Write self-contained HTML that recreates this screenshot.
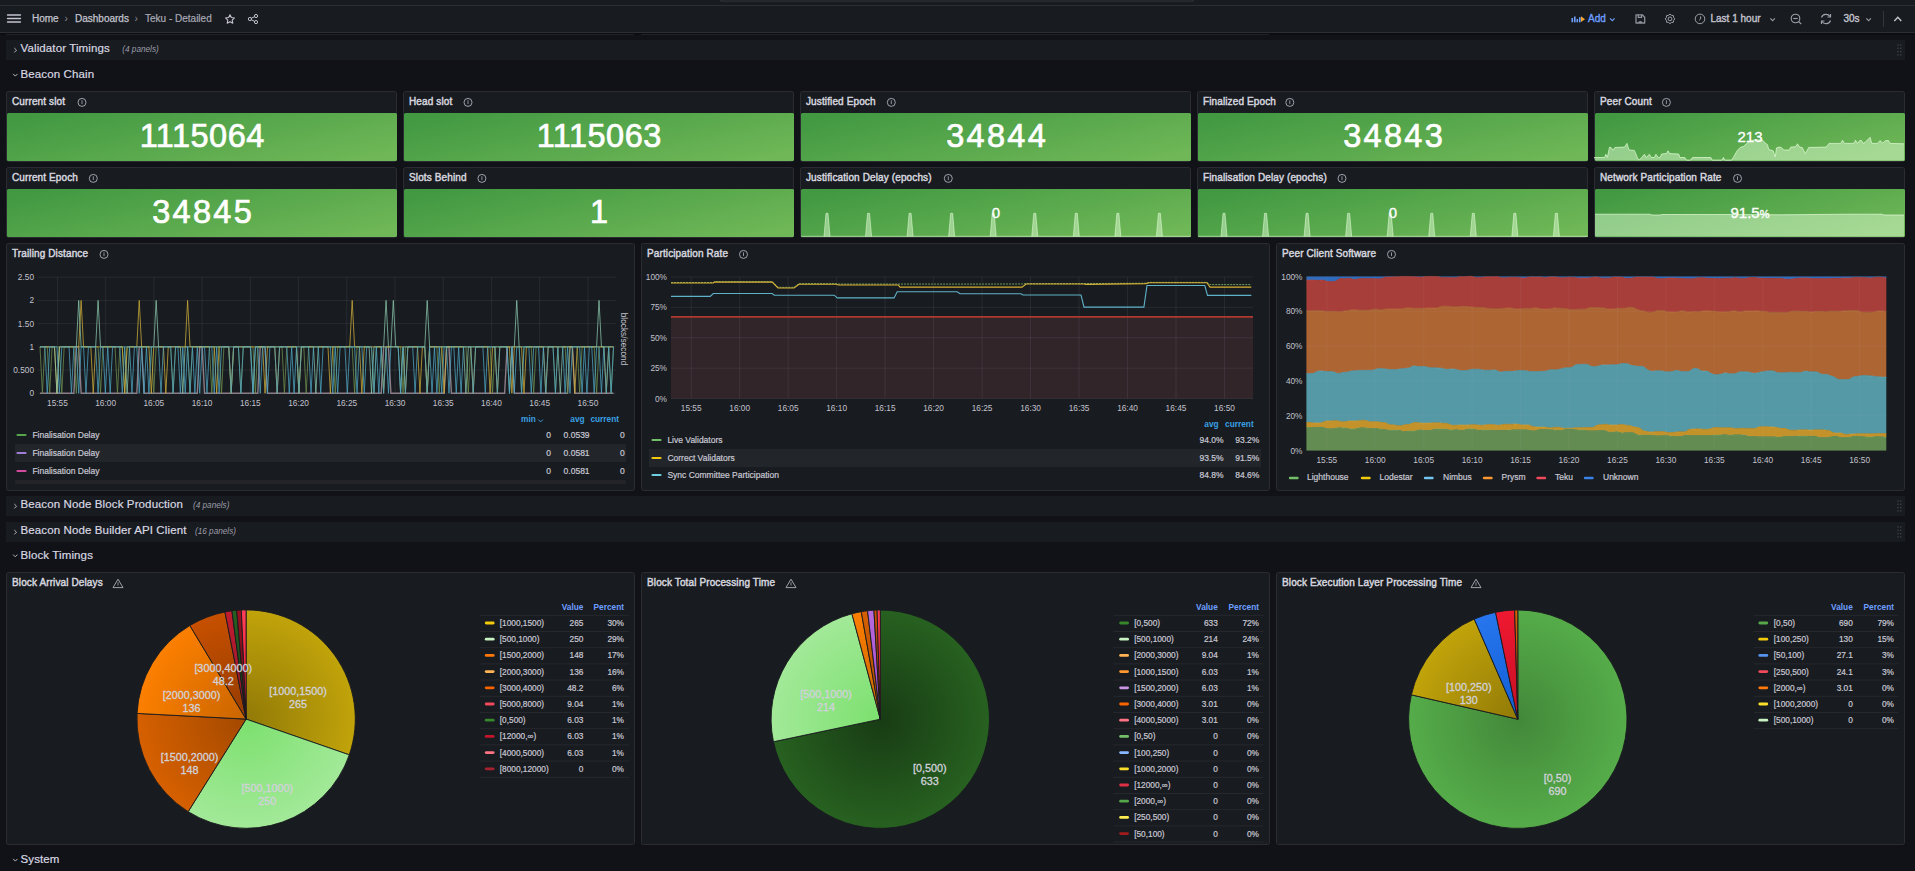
<!DOCTYPE html>
<html><head><meta charset="utf-8"><style>
html,body{margin:0;padding:0;background:#111217;width:1915px;height:871px;overflow:hidden}
svg{display:block;font-family:"Liberation Sans", sans-serif}
</style></head><body>
<svg width="1915" height="871" viewBox="0 0 1915 871">
<rect x="0" y="0" width="1915" height="871" fill="#111217"/>
<rect x="0" y="0" width="1915" height="6" fill="#181b1f" />
<rect x="721" y="-3" width="472" height="4" fill="#111217" stroke="#3a3b41" stroke-width="1"/>
<rect x="0" y="5" width="1915" height="1" fill="#2c2e34" />
<rect x="0" y="6" width="1915" height="26" fill="#181b1f" />
<rect x="0" y="32" width="1915" height="1" fill="#2c2e34" />
<rect x="0" y="33" width="1915" height="2" fill="#0c0d10" />
<rect x="6" y="34" width="628" height="1" fill="#1f2126" />
<rect x="641" y="34" width="628" height="1" fill="#1f2126" />
<line x1="7.5" y1="15" x2="20.5" y2="15" stroke="#c4c4cf" stroke-width="1.3" stroke-linecap="round"/>
<line x1="7.5" y1="18.5" x2="20.5" y2="18.5" stroke="#c4c4cf" stroke-width="1.3" stroke-linecap="round"/>
<line x1="7.5" y1="22" x2="20.5" y2="22" stroke="#c4c4cf" stroke-width="1.3" stroke-linecap="round"/>
<text x="32" y="22.3" font-size="10" fill="#c4c4d0" font-weight="400" text-anchor="start" stroke="#c4c4d0" stroke-width="0.25" >Home</text>
<text x="64.5" y="22" font-size="10" fill="#8e8e9a" font-weight="400" text-anchor="start" >›</text>
<text x="75" y="22.3" font-size="10" fill="#c4c4d0" font-weight="400" text-anchor="start" stroke="#c4c4d0" stroke-width="0.25" >Dashboards</text>
<text x="134.5" y="22" font-size="10" fill="#8e8e9a" font-weight="400" text-anchor="start" >›</text>
<text x="145" y="22.3" font-size="10" fill="#a9a9b6" font-weight="400" text-anchor="start" stroke="#a9a9b6" stroke-width="0.2" >Teku - Detailed</text>
<polygon points="230.00,14.70 231.35,17.54 234.47,17.95 232.19,20.11 232.76,23.20 230.00,21.70 227.24,23.20 227.81,20.11 225.53,17.95 228.65,17.54" fill="none" stroke="#c4c4cf" stroke-width="1.1" stroke-linejoin="round"/>
<g stroke="#c4c4cf" stroke-width="1.0" fill="none"><circle cx="249.9" cy="19" r="1.6"/><circle cx="256" cy="16" r="1.6"/><circle cx="256" cy="22.1" r="1.6"/><line x1="251.3" y1="18.2" x2="254.6" y2="16.7"/><line x1="251.3" y1="19.8" x2="254.6" y2="21.4"/></g>
<g fill="#6e9fff"><rect x="1571.5" y="18" width="1.6" height="4.3"/><rect x="1574" y="16.5" width="1.6" height="5.8"/><rect x="1576.5" y="19" width="1.6" height="3.3"/><rect x="1579" y="17.2" width="1.6" height="5.1"/></g>
<path d="M1581 16.3 L1585 19.2 L1581 22.1 Z" fill="#f5a630"/>
<text x="1588" y="22.3" font-size="10" fill="#6e9fff" font-weight="400" text-anchor="start" stroke="#6e9fff" stroke-width="0.35" >Add</text>
<path d="M1610 18.3 L1612.3 20.6 L1614.6 18.3" stroke="#6e9fff" stroke-width="1.1" fill="none"/>
<g stroke="#8f909b" stroke-width="1.3" fill="none" stroke-linejoin="round"><path d="M1636 14.8 h6.3 l2.4 2.4 v5.8 h-8.7 z"/><path d="M1638.3 14.8 v2.6 h3.3 v-2.6"/></g><path d="M1638.2 23 a2.1 2.1 0 0 1 4.2 0 z" fill="#8f909b"/>
<path d="M1673.60,20.39 Q1674.17,23.07 1671.49,22.50 Q1670.00,24.80 1668.51,22.50 Q1665.83,23.07 1666.40,20.39 Q1664.10,18.90 1666.40,17.41 Q1665.83,14.73 1668.51,15.30 Q1670.00,13.00 1671.49,15.30 Q1674.17,14.73 1673.60,17.41 Q1675.90,18.90 1673.60,20.39 Z" fill="none" stroke="#a0a0ab" stroke-width="1"/><circle cx="1670" cy="18.9" r="1.9" fill="none" stroke="#a0a0ab" stroke-width="1"/>
<g stroke="#a0a0ab" stroke-width="1.0" fill="none"><circle cx="1700" cy="18.9" r="4.8"/><path d="M1700.6 16.4 V19 L1699.2 20.2"/></g>
<text x="1710.5" y="22.3" font-size="10" fill="#c4c4d0" font-weight="400" text-anchor="start" stroke="#c4c4d0" stroke-width="0.35" >Last 1 hour</text>
<path d="M1770.3 18.3 L1772.6 20.6 L1774.9 18.3" stroke="#9a9aa6" stroke-width="1.1" fill="none"/>
<g stroke="#a0a0ab" stroke-width="1.1" fill="none"><circle cx="1795.5" cy="18.5" r="4.3"/><line x1="1793.3" y1="18.5" x2="1797.7" y2="18.5"/><line x1="1798.7" y1="21.7" x2="1801.2" y2="24"/></g>
<g stroke="#a0a0ab" stroke-width="1.2" fill="none"><path d="M1821.5 17.5 A4.8 4.8 0 0 1 1830 16.5"/><path d="M1830.5 20.5 A4.8 4.8 0 0 1 1822 21.5"/><path d="M1830.5 14 V17 H1827.5"/><path d="M1821.5 24 V21 H1824.5"/></g>
<text x="1843.5" y="22.3" font-size="10" fill="#c4c4d0" font-weight="400" text-anchor="start" stroke="#c4c4d0" stroke-width="0.35" >30s</text>
<path d="M1866.3 18.3 L1868.6 20.6 L1870.9 18.3" stroke="#9a9aa6" stroke-width="1.1" fill="none"/>
<rect x="1883" y="11" width="1" height="16" fill="#34363c" />
<path d="M1894.3 21 L1897.8 17.2 L1901.3 21" stroke="#c4c4cf" stroke-width="1.4" fill="none"/>
<rect x="6" y="40" width="1899" height="20" fill="#181b1f" />
<path d="M14.3 48.0 L16.5 50.2 L14.3 52.400000000000006" stroke="#b8b8c4" stroke-width="1" fill="none"/>
<text x="20.5" y="52.4" font-size="11.5" fill="#d8d8e2" font-weight="400" text-anchor="start" stroke="#d8d8e2" stroke-width="0.2" letter-spacing="0.12">Validator Timings</text>
<text x="122.3" y="52.3" font-size="8.2" fill="#9d9dab" font-weight="400" text-anchor="start" font-style="italic">(4 panels)</text>
<rect x="1897.3" y="44.3" width="1.4" height="1.4" fill="#3d3f45" /><rect x="1900.0" y="44.3" width="1.4" height="1.4" fill="#3d3f45" /><rect x="1897.3" y="47.599999999999994" width="1.4" height="1.4" fill="#3d3f45" /><rect x="1900.0" y="47.599999999999994" width="1.4" height="1.4" fill="#3d3f45" /><rect x="1897.3" y="50.9" width="1.4" height="1.4" fill="#3d3f45" /><rect x="1900.0" y="50.9" width="1.4" height="1.4" fill="#3d3f45" /><rect x="1897.3" y="54.199999999999996" width="1.4" height="1.4" fill="#3d3f45" /><rect x="1900.0" y="54.199999999999996" width="1.4" height="1.4" fill="#3d3f45" />
<path d="M13.100000000000001 73.9 L15.3 76.1 L17.5 73.9" stroke="#b8b8c4" stroke-width="1" fill="none"/>
<text x="20.5" y="78.3" font-size="11.5" fill="#d8d8e2" font-weight="400" text-anchor="start" stroke="#d8d8e2" stroke-width="0.2" letter-spacing="0.12">Beacon Chain</text>
<rect x="6" y="496" width="1899" height="20" fill="#181b1f" />
<path d="M14.3 504.0 L16.5 506.2 L14.3 508.4" stroke="#b8b8c4" stroke-width="1" fill="none"/>
<text x="20.5" y="508.4" font-size="11.5" fill="#d8d8e2" font-weight="400" text-anchor="start" stroke="#d8d8e2" stroke-width="0.2" letter-spacing="0.12">Beacon Node Block Production</text>
<text x="193" y="508.3" font-size="8.2" fill="#9d9dab" font-weight="400" text-anchor="start" font-style="italic">(4 panels)</text>
<rect x="1897.3" y="500.3" width="1.4" height="1.4" fill="#3d3f45" /><rect x="1900.0" y="500.3" width="1.4" height="1.4" fill="#3d3f45" /><rect x="1897.3" y="503.6" width="1.4" height="1.4" fill="#3d3f45" /><rect x="1900.0" y="503.6" width="1.4" height="1.4" fill="#3d3f45" /><rect x="1897.3" y="506.90000000000003" width="1.4" height="1.4" fill="#3d3f45" /><rect x="1900.0" y="506.90000000000003" width="1.4" height="1.4" fill="#3d3f45" /><rect x="1897.3" y="510.2" width="1.4" height="1.4" fill="#3d3f45" /><rect x="1900.0" y="510.2" width="1.4" height="1.4" fill="#3d3f45" />
<rect x="6" y="522" width="1899" height="20" fill="#181b1f" />
<path d="M14.3 530.0 L16.5 532.2 L14.3 534.4000000000001" stroke="#b8b8c4" stroke-width="1" fill="none"/>
<text x="20.5" y="534.4" font-size="11.5" fill="#d8d8e2" font-weight="400" text-anchor="start" stroke="#d8d8e2" stroke-width="0.2" letter-spacing="0.12">Beacon Node Builder API Client</text>
<text x="195" y="534.3" font-size="8.2" fill="#9d9dab" font-weight="400" text-anchor="start" font-style="italic">(16 panels)</text>
<rect x="1897.3" y="526.3" width="1.4" height="1.4" fill="#3d3f45" /><rect x="1900.0" y="526.3" width="1.4" height="1.4" fill="#3d3f45" /><rect x="1897.3" y="529.5999999999999" width="1.4" height="1.4" fill="#3d3f45" /><rect x="1900.0" y="529.5999999999999" width="1.4" height="1.4" fill="#3d3f45" /><rect x="1897.3" y="532.9" width="1.4" height="1.4" fill="#3d3f45" /><rect x="1900.0" y="532.9" width="1.4" height="1.4" fill="#3d3f45" /><rect x="1897.3" y="536.1999999999999" width="1.4" height="1.4" fill="#3d3f45" /><rect x="1900.0" y="536.1999999999999" width="1.4" height="1.4" fill="#3d3f45" />
<path d="M13.100000000000001 554.6 L15.3 556.8000000000001 L17.5 554.6" stroke="#b8b8c4" stroke-width="1" fill="none"/>
<text x="20.5" y="559" font-size="11.5" fill="#d8d8e2" font-weight="400" text-anchor="start" stroke="#d8d8e2" stroke-width="0.2" letter-spacing="0.12">Block Timings</text>
<path d="M13.100000000000001 858.9 L15.3 861.1 L17.5 858.9" stroke="#b8b8c4" stroke-width="1" fill="none"/>
<text x="20.5" y="863.3" font-size="11.5" fill="#d8d8e2" font-weight="400" text-anchor="start" stroke="#d8d8e2" stroke-width="0.2" letter-spacing="0.12">System</text>
<defs>
<linearGradient id="statg" gradientUnits="objectBoundingBox" x1="0" y1="0.2" x2="1" y2="0.8"><stop offset="0" stop-color="#429942"/><stop offset="1" stop-color="#6fb757"/></linearGradient>
</defs>
<rect x="6.5" y="91.5" width="390" height="70" rx="2" fill="#181b1f" stroke="#2a2c31" stroke-width="1"/>
<text x="12" y="105.3" font-size="10.0" fill="#d5d5df" font-weight="400" text-anchor="start" stroke="#d5d5df" stroke-width="0.45" letter-spacing="0.12">Current slot</text>
<g stroke="#a8a8b4" fill="none"><circle cx="82" cy="102.39999999999999" r="4.0" stroke-width="0.95"/><line x1="82" y1="100.3" x2="82" y2="104.1" stroke-width="0.85"/></g>
<rect x="7" y="113" width="390" height="48" rx="1.5" fill="url(#statg)"/>
<text x="202.25" y="147.3" font-size="32.5" fill="#ffffff" font-weight="400" text-anchor="middle" stroke="#ffffff" stroke-width="0.7" letter-spacing="0.5">1115064</text>
<rect x="403.5" y="91.5" width="390" height="70" rx="2" fill="#181b1f" stroke="#2a2c31" stroke-width="1"/>
<text x="409" y="105.3" font-size="10.0" fill="#d5d5df" font-weight="400" text-anchor="start" stroke="#d5d5df" stroke-width="0.45" letter-spacing="0.12">Head slot</text>
<g stroke="#a8a8b4" fill="none"><circle cx="468" cy="102.39999999999999" r="4.0" stroke-width="0.95"/><line x1="468" y1="100.3" x2="468" y2="104.1" stroke-width="0.85"/></g>
<rect x="404" y="113" width="390" height="48" rx="1.5" fill="url(#statg)"/>
<text x="599.25" y="147.3" font-size="32.5" fill="#ffffff" font-weight="400" text-anchor="middle" stroke="#ffffff" stroke-width="0.7" letter-spacing="0.5">1115063</text>
<rect x="800.5" y="91.5" width="390" height="70" rx="2" fill="#181b1f" stroke="#2a2c31" stroke-width="1"/>
<text x="806" y="105.3" font-size="10.0" fill="#d5d5df" font-weight="400" text-anchor="start" stroke="#d5d5df" stroke-width="0.45" letter-spacing="0.12">Justified Epoch</text>
<g stroke="#a8a8b4" fill="none"><circle cx="891.3" cy="102.39999999999999" r="4.0" stroke-width="0.95"/><line x1="891.3" y1="100.3" x2="891.3" y2="104.1" stroke-width="0.85"/></g>
<rect x="801" y="113" width="390" height="48" rx="1.5" fill="url(#statg)"/>
<text x="997.15" y="147.3" font-size="32.5" fill="#ffffff" font-weight="400" text-anchor="middle" stroke="#ffffff" stroke-width="0.7" letter-spacing="2.3">34844</text>
<rect x="1197.5" y="91.5" width="390" height="70" rx="2" fill="#181b1f" stroke="#2a2c31" stroke-width="1"/>
<text x="1203" y="105.3" font-size="10.0" fill="#d5d5df" font-weight="400" text-anchor="start" stroke="#d5d5df" stroke-width="0.45" letter-spacing="0.12">Finalized Epoch</text>
<g stroke="#a8a8b4" fill="none"><circle cx="1289.8" cy="102.39999999999999" r="4.0" stroke-width="0.95"/><line x1="1289.8" y1="100.3" x2="1289.8" y2="104.1" stroke-width="0.85"/></g>
<rect x="1198" y="113" width="390" height="48" rx="1.5" fill="url(#statg)"/>
<text x="1394.15" y="147.3" font-size="32.5" fill="#ffffff" font-weight="400" text-anchor="middle" stroke="#ffffff" stroke-width="0.7" letter-spacing="2.3">34843</text>
<rect x="1594.5" y="91.5" width="310" height="70" rx="2" fill="#181b1f" stroke="#2a2c31" stroke-width="1"/>
<text x="1600" y="105.3" font-size="10.0" fill="#d5d5df" font-weight="400" text-anchor="start" stroke="#d5d5df" stroke-width="0.45" letter-spacing="0.12">Peer Count</text>
<g stroke="#a8a8b4" fill="none"><circle cx="1666.4" cy="102.39999999999999" r="4.0" stroke-width="0.95"/><line x1="1666.4" y1="100.3" x2="1666.4" y2="104.1" stroke-width="0.85"/></g>
<rect x="1595" y="113" width="310" height="48" rx="1.5" fill="url(#statg)"/>
<polygon points="1594.00,157.50 1604.60,157.50 1605.80,154.30 1607.40,157.30 1609.50,147.30 1611.10,147.50 1613.10,150.40 1614.80,147.50 1624.50,147.10 1627.00,143.40 1629.00,150.00 1634.30,150.40 1637.60,158.10 1639.20,160.10 1641.60,157.50 1644.50,154.30 1646.10,157.50 1649.40,154.30 1651.40,157.50 1654.30,157.50 1655.90,154.30 1658.30,157.50 1660.00,157.50 1661.60,154.00 1666.50,153.60 1668.00,150.80 1669.70,153.60 1678.70,154.00 1679.90,157.50 1684.80,157.50 1686.40,160.10 1690.50,160.10 1692.50,157.50 1710.90,157.50 1712.10,160.10 1721.90,160.10 1723.50,157.50 1724.70,160.10 1731.60,160.10 1733.30,157.50 1737.30,150.40 1740.60,147.30 1743.80,146.30 1746.30,143.80 1749.60,141.40 1752.90,140.20 1759.70,139.90 1763.10,140.60 1765.10,143.00 1767.50,144.70 1768.80,149.50 1773.20,150.80 1775.30,156.90 1776.50,147.90 1779.00,147.10 1781.40,147.50 1783.80,150.00 1789.10,150.00 1790.80,147.10 1795.60,146.70 1797.50,143.80 1799.70,147.10 1802.20,147.50 1805.40,153.60 1808.70,147.50 1826.20,147.10 1829.00,143.40 1840.80,143.40 1842.50,140.20 1844.50,143.40 1853.90,143.40 1855.50,140.20 1857.50,143.40 1859.60,140.60 1861.60,140.60 1863.20,143.40 1865.30,142.20 1870.10,137.30 1871.80,143.40 1877.50,143.40 1879.90,140.60 1882.80,143.00 1885.60,140.60 1888.50,140.60 1890.10,143.40 1904.00,143.80 1904,160.5 1595,160.5" fill="rgba(225,255,215,0.48)"/><polyline points="1594.00,157.50 1604.60,157.50 1605.80,154.30 1607.40,157.30 1609.50,147.30 1611.10,147.50 1613.10,150.40 1614.80,147.50 1624.50,147.10 1627.00,143.40 1629.00,150.00 1634.30,150.40 1637.60,158.10 1639.20,160.10 1641.60,157.50 1644.50,154.30 1646.10,157.50 1649.40,154.30 1651.40,157.50 1654.30,157.50 1655.90,154.30 1658.30,157.50 1660.00,157.50 1661.60,154.00 1666.50,153.60 1668.00,150.80 1669.70,153.60 1678.70,154.00 1679.90,157.50 1684.80,157.50 1686.40,160.10 1690.50,160.10 1692.50,157.50 1710.90,157.50 1712.10,160.10 1721.90,160.10 1723.50,157.50 1724.70,160.10 1731.60,160.10 1733.30,157.50 1737.30,150.40 1740.60,147.30 1743.80,146.30 1746.30,143.80 1749.60,141.40 1752.90,140.20 1759.70,139.90 1763.10,140.60 1765.10,143.00 1767.50,144.70 1768.80,149.50 1773.20,150.80 1775.30,156.90 1776.50,147.90 1779.00,147.10 1781.40,147.50 1783.80,150.00 1789.10,150.00 1790.80,147.10 1795.60,146.70 1797.50,143.80 1799.70,147.10 1802.20,147.50 1805.40,153.60 1808.70,147.50 1826.20,147.10 1829.00,143.40 1840.80,143.40 1842.50,140.20 1844.50,143.40 1853.90,143.40 1855.50,140.20 1857.50,143.40 1859.60,140.60 1861.60,140.60 1863.20,143.40 1865.30,142.20 1870.10,137.30 1871.80,143.40 1877.50,143.40 1879.90,140.60 1882.80,143.00 1885.60,140.60 1888.50,140.60 1890.10,143.40 1904.00,143.80" fill="none" stroke="rgba(235,255,225,0.65)" stroke-width="1"/>
<text x="1750.0" y="142.0" font-size="15" fill="#ffffff" font-weight="400" text-anchor="middle" stroke="#ffffff" stroke-width="0.35" >213</text>
<rect x="6.5" y="167.5" width="390" height="70" rx="2" fill="#181b1f" stroke="#2a2c31" stroke-width="1"/>
<text x="12" y="181.3" font-size="10.0" fill="#d5d5df" font-weight="400" text-anchor="start" stroke="#d5d5df" stroke-width="0.45" letter-spacing="0.12">Current Epoch</text>
<g stroke="#a8a8b4" fill="none"><circle cx="93.3" cy="178.4" r="4.0" stroke-width="0.95"/><line x1="93.3" y1="176.3" x2="93.3" y2="180.1" stroke-width="0.85"/></g>
<rect x="7" y="189" width="390" height="48" rx="1.5" fill="url(#statg)"/>
<text x="203.15" y="223.3" font-size="32.5" fill="#ffffff" font-weight="400" text-anchor="middle" stroke="#ffffff" stroke-width="0.7" letter-spacing="2.3">34845</text>
<rect x="403.5" y="167.5" width="390" height="70" rx="2" fill="#181b1f" stroke="#2a2c31" stroke-width="1"/>
<text x="409" y="181.3" font-size="10.0" fill="#d5d5df" font-weight="400" text-anchor="start" stroke="#d5d5df" stroke-width="0.45" letter-spacing="0.12">Slots Behind</text>
<g stroke="#a8a8b4" fill="none"><circle cx="481.9" cy="178.4" r="4.0" stroke-width="0.95"/><line x1="481.9" y1="176.3" x2="481.9" y2="180.1" stroke-width="0.85"/></g>
<rect x="404" y="189" width="390" height="48" rx="1.5" fill="url(#statg)"/>
<text x="600.15" y="223.3" font-size="32.5" fill="#ffffff" font-weight="400" text-anchor="middle" stroke="#ffffff" stroke-width="0.7" letter-spacing="2.3">1</text>
<rect x="800.5" y="167.5" width="390" height="70" rx="2" fill="#181b1f" stroke="#2a2c31" stroke-width="1"/>
<text x="806" y="181.3" font-size="10.0" fill="#d5d5df" font-weight="400" text-anchor="start" stroke="#d5d5df" stroke-width="0.45" letter-spacing="0.12">Justification Delay (epochs)</text>
<g stroke="#a8a8b4" fill="none"><circle cx="948.3" cy="178.4" r="4.0" stroke-width="0.95"/><line x1="948.3" y1="176.3" x2="948.3" y2="180.1" stroke-width="0.85"/></g>
<rect x="801" y="189" width="390" height="48" rx="1.5" fill="url(#statg)"/>
<polygon points="824.0,236.5 826.0,213.3 828.0,213.3 830.0,236.5" fill="rgba(225,255,215,0.48)"/><polyline points="824.0,236.5 826.0,213.3 828.0,213.3 830.0,236.5" fill="none" stroke="rgba(235,255,225,0.65)" stroke-width="0.8"/><polygon points="865.55,236.5 867.55,213.3 869.55,213.3 871.55,236.5" fill="rgba(225,255,215,0.48)"/><polyline points="865.55,236.5 867.55,213.3 869.55,213.3 871.55,236.5" fill="none" stroke="rgba(235,255,225,0.65)" stroke-width="0.8"/><polygon points="907.1,236.5 909.1,213.3 911.1,213.3 913.1,236.5" fill="rgba(225,255,215,0.48)"/><polyline points="907.1,236.5 909.1,213.3 911.1,213.3 913.1,236.5" fill="none" stroke="rgba(235,255,225,0.65)" stroke-width="0.8"/><polygon points="948.65,236.5 950.65,213.3 952.65,213.3 954.65,236.5" fill="rgba(225,255,215,0.48)"/><polyline points="948.65,236.5 950.65,213.3 952.65,213.3 954.65,236.5" fill="none" stroke="rgba(235,255,225,0.65)" stroke-width="0.8"/><polygon points="990.2,236.5 992.2,213.3 994.2,213.3 996.2,236.5" fill="rgba(225,255,215,0.48)"/><polyline points="990.2,236.5 992.2,213.3 994.2,213.3 996.2,236.5" fill="none" stroke="rgba(235,255,225,0.65)" stroke-width="0.8"/><polygon points="1031.75,236.5 1033.75,213.3 1035.75,213.3 1037.75,236.5" fill="rgba(225,255,215,0.48)"/><polyline points="1031.75,236.5 1033.75,213.3 1035.75,213.3 1037.75,236.5" fill="none" stroke="rgba(235,255,225,0.65)" stroke-width="0.8"/><polygon points="1073.3,236.5 1075.3,213.3 1077.3,213.3 1079.3,236.5" fill="rgba(225,255,215,0.48)"/><polyline points="1073.3,236.5 1075.3,213.3 1077.3,213.3 1079.3,236.5" fill="none" stroke="rgba(235,255,225,0.65)" stroke-width="0.8"/><polygon points="1114.85,236.5 1116.85,213.3 1118.85,213.3 1120.85,236.5" fill="rgba(225,255,215,0.48)"/><polyline points="1114.85,236.5 1116.85,213.3 1118.85,213.3 1120.85,236.5" fill="none" stroke="rgba(235,255,225,0.65)" stroke-width="0.8"/><polygon points="1156.4,236.5 1158.4,213.3 1160.4,213.3 1162.4,236.5" fill="rgba(225,255,215,0.48)"/><polyline points="1156.4,236.5 1158.4,213.3 1160.4,213.3 1162.4,236.5" fill="none" stroke="rgba(235,255,225,0.65)" stroke-width="0.8"/><line x1="801" y1="236.3" x2="1191" y2="236.3" stroke="rgba(235,255,225,0.65)" stroke-width="0.8"/>
<text x="996.0" y="218.0" font-size="15" fill="#ffffff" font-weight="400" text-anchor="middle" stroke="#ffffff" stroke-width="0.35" >0</text>
<rect x="1197.5" y="167.5" width="390" height="70" rx="2" fill="#181b1f" stroke="#2a2c31" stroke-width="1"/>
<text x="1203" y="181.3" font-size="10.0" fill="#d5d5df" font-weight="400" text-anchor="start" stroke="#d5d5df" stroke-width="0.45" letter-spacing="0.12">Finalisation Delay (epochs)</text>
<g stroke="#a8a8b4" fill="none"><circle cx="1342" cy="178.4" r="4.0" stroke-width="0.95"/><line x1="1342" y1="176.3" x2="1342" y2="180.1" stroke-width="0.85"/></g>
<rect x="1198" y="189" width="390" height="48" rx="1.5" fill="url(#statg)"/>
<polygon points="1221.0,236.5 1223.0,213.3 1225.0,213.3 1227.0,236.5" fill="rgba(225,255,215,0.48)"/><polyline points="1221.0,236.5 1223.0,213.3 1225.0,213.3 1227.0,236.5" fill="none" stroke="rgba(235,255,225,0.65)" stroke-width="0.8"/><polygon points="1262.55,236.5 1264.55,213.3 1266.55,213.3 1268.55,236.5" fill="rgba(225,255,215,0.48)"/><polyline points="1262.55,236.5 1264.55,213.3 1266.55,213.3 1268.55,236.5" fill="none" stroke="rgba(235,255,225,0.65)" stroke-width="0.8"/><polygon points="1304.1,236.5 1306.1,213.3 1308.1,213.3 1310.1,236.5" fill="rgba(225,255,215,0.48)"/><polyline points="1304.1,236.5 1306.1,213.3 1308.1,213.3 1310.1,236.5" fill="none" stroke="rgba(235,255,225,0.65)" stroke-width="0.8"/><polygon points="1345.65,236.5 1347.65,213.3 1349.65,213.3 1351.65,236.5" fill="rgba(225,255,215,0.48)"/><polyline points="1345.65,236.5 1347.65,213.3 1349.65,213.3 1351.65,236.5" fill="none" stroke="rgba(235,255,225,0.65)" stroke-width="0.8"/><polygon points="1387.2,236.5 1389.2,213.3 1391.2,213.3 1393.2,236.5" fill="rgba(225,255,215,0.48)"/><polyline points="1387.2,236.5 1389.2,213.3 1391.2,213.3 1393.2,236.5" fill="none" stroke="rgba(235,255,225,0.65)" stroke-width="0.8"/><polygon points="1428.75,236.5 1430.75,213.3 1432.75,213.3 1434.75,236.5" fill="rgba(225,255,215,0.48)"/><polyline points="1428.75,236.5 1430.75,213.3 1432.75,213.3 1434.75,236.5" fill="none" stroke="rgba(235,255,225,0.65)" stroke-width="0.8"/><polygon points="1470.3,236.5 1472.3,213.3 1474.3,213.3 1476.3,236.5" fill="rgba(225,255,215,0.48)"/><polyline points="1470.3,236.5 1472.3,213.3 1474.3,213.3 1476.3,236.5" fill="none" stroke="rgba(235,255,225,0.65)" stroke-width="0.8"/><polygon points="1511.85,236.5 1513.85,213.3 1515.85,213.3 1517.85,236.5" fill="rgba(225,255,215,0.48)"/><polyline points="1511.85,236.5 1513.85,213.3 1515.85,213.3 1517.85,236.5" fill="none" stroke="rgba(235,255,225,0.65)" stroke-width="0.8"/><polygon points="1553.4,236.5 1555.4,213.3 1557.4,213.3 1559.4,236.5" fill="rgba(225,255,215,0.48)"/><polyline points="1553.4,236.5 1555.4,213.3 1557.4,213.3 1559.4,236.5" fill="none" stroke="rgba(235,255,225,0.65)" stroke-width="0.8"/><line x1="1198" y1="236.3" x2="1588" y2="236.3" stroke="rgba(235,255,225,0.65)" stroke-width="0.8"/>
<text x="1393.0" y="218.0" font-size="15" fill="#ffffff" font-weight="400" text-anchor="middle" stroke="#ffffff" stroke-width="0.35" >0</text>
<rect x="1594.5" y="167.5" width="310" height="70" rx="2" fill="#181b1f" stroke="#2a2c31" stroke-width="1"/>
<text x="1600" y="181.3" font-size="10.0" fill="#d5d5df" font-weight="400" text-anchor="start" stroke="#d5d5df" stroke-width="0.45" letter-spacing="0.12">Network Participation Rate</text>
<g stroke="#a8a8b4" fill="none"><circle cx="1737.5" cy="178.4" r="4.0" stroke-width="0.95"/><line x1="1737.5" y1="176.3" x2="1737.5" y2="180.1" stroke-width="0.85"/></g>
<rect x="1595" y="189" width="310" height="48" rx="1.5" fill="url(#statg)"/>
<polygon points="1595.00,214.20 1650.00,214.20 1652.00,215.00 1660.00,215.00 1662.00,214.50 1730.00,214.50 1780.00,214.80 1850.00,214.20 1882.00,214.20 1884.00,215.00 1904.00,215.00 1904,236.5 1595,236.5" fill="rgba(225,255,215,0.48)"/><polyline points="1595.00,214.20 1650.00,214.20 1652.00,215.00 1660.00,215.00 1662.00,214.50 1730.00,214.50 1780.00,214.80 1850.00,214.20 1882.00,214.20 1884.00,215.00 1904.00,215.00" fill="none" stroke="rgba(235,255,225,0.65)" stroke-width="1"/>
<text x="1750.0" y="218.0" font-size="15" fill="#ffffff" font-weight="400" text-anchor="middle" stroke="#ffffff" stroke-width="0.35" >91.5<tspan font-size="11">%</tspan></text>
<rect x="6.5" y="243.5" width="628" height="247" rx="2" fill="#181b1f" stroke="#2a2c31" stroke-width="1"/>
<text x="12" y="257.3" font-size="10.0" fill="#d5d5df" font-weight="400" text-anchor="start" stroke="#d5d5df" stroke-width="0.45" letter-spacing="0.12">Trailing Distance</text>
<g stroke="#a8a8b4" fill="none"><circle cx="104" cy="254.4" r="4.0" stroke-width="0.95"/><line x1="104" y1="252.3" x2="104" y2="256.1" stroke-width="0.85"/></g>
<line x1="38" y1="277.20000000000005" x2="616" y2="277.20000000000005" stroke="rgba(204,204,220,0.09)" stroke-width="1"/>
<text x="34" y="280.20000000000005" font-size="8.3" fill="#c2c2ce" font-weight="400" text-anchor="end" >2.50</text>
<line x1="38" y1="300.42" x2="616" y2="300.42" stroke="rgba(204,204,220,0.09)" stroke-width="1"/>
<text x="34" y="303.42" font-size="8.3" fill="#c2c2ce" font-weight="400" text-anchor="end" >2</text>
<line x1="38" y1="323.64" x2="616" y2="323.64" stroke="rgba(204,204,220,0.09)" stroke-width="1"/>
<text x="34" y="326.64" font-size="8.3" fill="#c2c2ce" font-weight="400" text-anchor="end" >1.50</text>
<line x1="38" y1="346.86" x2="616" y2="346.86" stroke="rgba(204,204,220,0.09)" stroke-width="1"/>
<text x="34" y="349.86" font-size="8.3" fill="#c2c2ce" font-weight="400" text-anchor="end" >1</text>
<line x1="38" y1="370.08000000000004" x2="616" y2="370.08000000000004" stroke="rgba(204,204,220,0.09)" stroke-width="1"/>
<text x="34" y="373.08000000000004" font-size="8.3" fill="#c2c2ce" font-weight="400" text-anchor="end" >0.500</text>
<line x1="38" y1="393.3" x2="616" y2="393.3" stroke="rgba(204,204,220,0.09)" stroke-width="1"/>
<text x="34" y="396.3" font-size="8.3" fill="#c2c2ce" font-weight="400" text-anchor="end" >0</text>
<line x1="57.4" y1="277.20000000000005" x2="57.4" y2="393.3" stroke="rgba(204,204,220,0.09)" stroke-width="1"/>
<text x="57.4" y="406.3" font-size="8.3" fill="#c2c2ce" font-weight="400" text-anchor="middle" >15:55</text>
<line x1="105.63" y1="277.20000000000005" x2="105.63" y2="393.3" stroke="rgba(204,204,220,0.09)" stroke-width="1"/>
<text x="105.63" y="406.3" font-size="8.3" fill="#c2c2ce" font-weight="400" text-anchor="middle" >16:00</text>
<line x1="153.85999999999999" y1="277.20000000000005" x2="153.85999999999999" y2="393.3" stroke="rgba(204,204,220,0.09)" stroke-width="1"/>
<text x="153.85999999999999" y="406.3" font-size="8.3" fill="#c2c2ce" font-weight="400" text-anchor="middle" >16:05</text>
<line x1="202.09" y1="277.20000000000005" x2="202.09" y2="393.3" stroke="rgba(204,204,220,0.09)" stroke-width="1"/>
<text x="202.09" y="406.3" font-size="8.3" fill="#c2c2ce" font-weight="400" text-anchor="middle" >16:10</text>
<line x1="250.32" y1="277.20000000000005" x2="250.32" y2="393.3" stroke="rgba(204,204,220,0.09)" stroke-width="1"/>
<text x="250.32" y="406.3" font-size="8.3" fill="#c2c2ce" font-weight="400" text-anchor="middle" >16:15</text>
<line x1="298.54999999999995" y1="277.20000000000005" x2="298.54999999999995" y2="393.3" stroke="rgba(204,204,220,0.09)" stroke-width="1"/>
<text x="298.54999999999995" y="406.3" font-size="8.3" fill="#c2c2ce" font-weight="400" text-anchor="middle" >16:20</text>
<line x1="346.78" y1="277.20000000000005" x2="346.78" y2="393.3" stroke="rgba(204,204,220,0.09)" stroke-width="1"/>
<text x="346.78" y="406.3" font-size="8.3" fill="#c2c2ce" font-weight="400" text-anchor="middle" >16:25</text>
<line x1="395.00999999999993" y1="277.20000000000005" x2="395.00999999999993" y2="393.3" stroke="rgba(204,204,220,0.09)" stroke-width="1"/>
<text x="395.00999999999993" y="406.3" font-size="8.3" fill="#c2c2ce" font-weight="400" text-anchor="middle" >16:30</text>
<line x1="443.23999999999995" y1="277.20000000000005" x2="443.23999999999995" y2="393.3" stroke="rgba(204,204,220,0.09)" stroke-width="1"/>
<text x="443.23999999999995" y="406.3" font-size="8.3" fill="#c2c2ce" font-weight="400" text-anchor="middle" >16:35</text>
<line x1="491.46999999999997" y1="277.20000000000005" x2="491.46999999999997" y2="393.3" stroke="rgba(204,204,220,0.09)" stroke-width="1"/>
<text x="491.46999999999997" y="406.3" font-size="8.3" fill="#c2c2ce" font-weight="400" text-anchor="middle" >16:40</text>
<line x1="539.6999999999999" y1="277.20000000000005" x2="539.6999999999999" y2="393.3" stroke="rgba(204,204,220,0.09)" stroke-width="1"/>
<text x="539.6999999999999" y="406.3" font-size="8.3" fill="#c2c2ce" font-weight="400" text-anchor="middle" >16:45</text>
<line x1="587.93" y1="277.20000000000005" x2="587.93" y2="393.3" stroke="rgba(204,204,220,0.09)" stroke-width="1"/>
<text x="587.93" y="406.3" font-size="8.3" fill="#c2c2ce" font-weight="400" text-anchor="middle" >16:50</text>
<text transform="translate(620.5,339) rotate(90)" font-size="8.3" fill="#c2c2ce" text-anchor="middle">blocks/second</text>
<g fill="none" stroke-width="1" stroke-linejoin="miter">
<polyline points="40.00,393.30 42.42,393.30 44.84,393.30 47.26,393.30 49.68,393.30 52.10,393.30 54.52,393.30 56.94,393.30 59.36,393.30 61.78,393.30 64.20,393.30 66.62,393.30 69.04,393.30 71.46,393.30 73.88,393.30 76.30,346.86 78.72,346.86 81.14,393.30 83.56,393.30 85.98,393.30 88.40,393.30 90.82,393.30 93.24,393.30 95.66,393.30 98.08,393.30 100.50,393.30 102.92,393.30 105.34,393.30 107.76,393.30 110.18,393.30 112.60,393.30 115.02,393.30 117.44,393.30 119.86,393.30 122.28,393.30 124.70,393.30 127.12,393.30 129.54,393.30 131.96,393.30 134.38,393.30 136.80,393.30 139.22,346.86 141.64,346.86 144.06,393.30 146.48,393.30 148.90,393.30 151.32,393.30 153.74,393.30 156.16,393.30 158.58,393.30 161.00,393.30 163.42,393.30 165.84,393.30 168.26,393.30 170.68,393.30 173.10,393.30 175.52,393.30 177.94,393.30 180.36,393.30 182.78,393.30 185.20,393.30 187.62,393.30 190.04,393.30 192.46,393.30 194.88,393.30 197.30,393.30 199.72,346.86 202.14,346.86 204.56,393.30 206.98,393.30 209.40,393.30 211.82,393.30 214.24,393.30 216.66,393.30 219.08,393.30 221.50,393.30 223.92,393.30 226.34,393.30 228.76,393.30 231.18,393.30 233.60,393.30 236.02,393.30 238.44,393.30 240.86,393.30 243.28,393.30 245.70,393.30 248.12,393.30 250.54,393.30 252.96,393.30 255.38,393.30 257.80,393.30 260.22,346.86 262.64,346.86 265.06,346.86 267.48,393.30 269.90,393.30 272.32,393.30 274.74,393.30 277.16,393.30 279.58,393.30 282.00,393.30 284.42,393.30 286.84,393.30 289.26,393.30 291.68,393.30 294.10,393.30 296.52,393.30 298.94,393.30 301.36,393.30 303.78,393.30 306.20,393.30 308.62,393.30 311.04,393.30 313.46,393.30 315.88,393.30 318.30,393.30 320.72,393.30 323.14,393.30 325.56,393.30 327.98,393.30 330.40,393.30 332.82,393.30 335.24,393.30 337.66,393.30 340.08,393.30 342.50,393.30 344.92,393.30 347.34,393.30 349.76,393.30 352.18,393.30 354.60,393.30 357.02,393.30 359.44,393.30 361.86,393.30 364.28,393.30 366.70,393.30 369.12,393.30 371.54,393.30 373.96,393.30 376.38,393.30 378.80,393.30 381.22,393.30 383.64,346.86 386.06,346.86 388.48,346.86 390.90,393.30 393.32,393.30 395.74,393.30 398.16,393.30 400.58,393.30 403.00,393.30 405.42,393.30 407.84,393.30 410.26,393.30 412.68,393.30 415.10,393.30 417.52,393.30 419.94,393.30 422.36,393.30 424.78,393.30 427.20,393.30 429.62,393.30 432.04,393.30 434.46,393.30 436.88,393.30 439.30,393.30 441.72,393.30 444.14,393.30 446.56,346.86 448.98,346.86 451.40,393.30 453.82,393.30 456.24,393.30 458.66,393.30 461.08,393.30 463.50,393.30 465.92,393.30 468.34,393.30 470.76,393.30 473.18,393.30 475.60,393.30 478.02,393.30 480.44,393.30 482.86,393.30 485.28,393.30 487.70,393.30 490.12,393.30 492.54,393.30 494.96,393.30 497.38,393.30 499.80,393.30 502.22,393.30 504.64,393.30 507.06,346.86 509.48,346.86 511.90,346.86 514.32,393.30 516.74,393.30 519.16,393.30 521.58,393.30 524.00,393.30 526.42,393.30 528.84,393.30 531.26,393.30 533.68,393.30 536.10,393.30 538.52,393.30 540.94,393.30 543.36,393.30 545.78,393.30 548.20,393.30 550.62,393.30 553.04,393.30 555.46,393.30 557.88,393.30 560.30,393.30 562.72,393.30 565.14,393.30 567.56,393.30 569.98,346.86 572.40,346.86 574.82,393.30 577.24,393.30 579.66,393.30 582.08,393.30 584.50,393.30 586.92,393.30 589.34,393.30 591.76,393.30 594.18,393.30 596.60,393.30 599.02,393.30 601.44,393.30 603.86,393.30 606.28,393.30 608.70,393.30 611.12,393.30 613.54,393.30" stroke="#8b7d88" stroke-width="1.4"/>
<polyline points="40.00,346.86 42.42,393.30 44.84,346.86 47.26,346.86 49.68,393.30 52.10,346.86 54.52,346.86 56.94,346.86 59.36,346.86 61.78,393.30 64.20,346.86 66.62,346.86 69.04,346.86 71.46,346.86 73.88,346.86 76.30,393.30 78.72,346.86 81.14,346.86 83.56,346.86 85.98,346.86 88.40,346.86 90.82,346.86 93.24,346.86 95.66,346.86 98.08,346.86 100.50,393.30 102.92,346.86 105.34,346.86 107.76,346.86 110.18,346.86 112.60,346.86 115.02,346.86 117.44,393.30 119.86,346.86 122.28,346.86 124.70,393.30 127.12,346.86 129.54,346.86 131.96,346.86 134.38,346.86 136.80,346.86 139.22,346.86 141.64,346.86 144.06,346.86 146.48,346.86 148.90,346.86 151.32,346.86 153.74,393.30 156.16,346.86 158.58,346.86 161.00,346.86 163.42,346.86 165.84,346.86 168.26,346.86 170.68,346.86 173.10,393.30 175.52,346.86 177.94,346.86 180.36,346.86 182.78,346.86 185.20,346.86 187.62,346.86 190.04,393.30 192.46,346.86 194.88,346.86 197.30,346.86 199.72,346.86 202.14,346.86 204.56,346.86 206.98,346.86 209.40,346.86 211.82,393.30 214.24,346.86 216.66,346.86 219.08,346.86 221.50,393.30 223.92,346.86 226.34,346.86 228.76,346.86 231.18,393.30 233.60,346.86 236.02,346.86 238.44,346.86 240.86,393.30 243.28,346.86 245.70,346.86 248.12,346.86 250.54,346.86 252.96,346.86 255.38,393.30 257.80,346.86 260.22,346.86 262.64,346.86 265.06,346.86 267.48,346.86 269.90,346.86 272.32,346.86 274.74,346.86 277.16,346.86 279.58,346.86 282.00,346.86 284.42,393.30 286.84,346.86 289.26,346.86 291.68,346.86 294.10,346.86 296.52,346.86 298.94,393.30 301.36,346.86 303.78,346.86 306.20,393.30 308.62,346.86 311.04,346.86 313.46,346.86 315.88,346.86 318.30,346.86 320.72,346.86 323.14,346.86 325.56,346.86 327.98,346.86 330.40,346.86 332.82,346.86 335.24,393.30 337.66,346.86 340.08,346.86 342.50,346.86 344.92,346.86 347.34,346.86 349.76,346.86 352.18,346.86 354.60,393.30 357.02,346.86 359.44,346.86 361.86,346.86 364.28,346.86 366.70,346.86 369.12,346.86 371.54,346.86 373.96,393.30 376.38,346.86 378.80,346.86 381.22,346.86 383.64,346.86 386.06,346.86 388.48,346.86 390.90,346.86 393.32,346.86 395.74,346.86 398.16,346.86 400.58,346.86 403.00,393.30 405.42,346.86 407.84,346.86 410.26,346.86 412.68,346.86 415.10,346.86 417.52,346.86 419.94,346.86 422.36,346.86 424.78,346.86 427.20,393.30 429.62,346.86 432.04,346.86 434.46,346.86 436.88,346.86 439.30,393.30 441.72,346.86 444.14,346.86 446.56,346.86 448.98,346.86 451.40,346.86 453.82,346.86 456.24,346.86 458.66,346.86 461.08,346.86 463.50,346.86 465.92,346.86 468.34,393.30 470.76,346.86 473.18,346.86 475.60,346.86 478.02,346.86 480.44,346.86 482.86,346.86 485.28,346.86 487.70,346.86 490.12,346.86 492.54,393.30 494.96,346.86 497.38,346.86 499.80,346.86 502.22,346.86 504.64,346.86 507.06,346.86 509.48,346.86 511.90,346.86 514.32,346.86 516.74,346.86 519.16,346.86 521.58,393.30 524.00,346.86 526.42,346.86 528.84,346.86 531.26,346.86 533.68,393.30 536.10,346.86 538.52,346.86 540.94,346.86 543.36,346.86 545.78,346.86 548.20,346.86 550.62,346.86 553.04,346.86 555.46,393.30 557.88,346.86 560.30,346.86 562.72,346.86 565.14,346.86 567.56,393.30 569.98,346.86 572.40,346.86 574.82,346.86 577.24,346.86 579.66,393.30 582.08,346.86 584.50,346.86 586.92,346.86 589.34,346.86 591.76,346.86 594.18,346.86 596.60,393.30 599.02,346.86 601.44,346.86 603.86,346.86 606.28,346.86 608.70,346.86 611.12,393.30 613.54,346.86" stroke="#6f8f4e" stroke-width="0.9" opacity="0.85"/>
<polyline points="40.00,346.86 42.42,346.86 44.84,346.86 47.26,346.86 49.68,346.86 52.10,346.86 54.52,346.86 56.94,393.30 59.36,346.86 61.78,346.86 64.20,346.86 66.62,346.86 69.04,346.86 71.46,346.86 73.88,346.86 76.30,346.86 78.72,346.86 81.14,300.42 83.56,346.86 85.98,346.86 88.40,346.86 90.82,346.86 93.24,393.30 95.66,346.86 98.08,346.86 100.50,346.86 102.92,346.86 105.34,346.86 107.76,346.86 110.18,346.86 112.60,346.86 115.02,346.86 117.44,346.86 119.86,346.86 122.28,346.86 124.70,393.30 127.12,346.86 129.54,346.86 131.96,346.86 134.38,346.86 136.80,346.86 139.22,300.42 141.64,346.86 144.06,346.86 146.48,346.86 148.90,346.86 151.32,393.30 153.74,346.86 156.16,346.86 158.58,346.86 161.00,346.86 163.42,346.86 165.84,393.30 168.26,346.86 170.68,346.86 173.10,346.86 175.52,346.86 177.94,346.86 180.36,346.86 182.78,346.86 185.20,346.86 187.62,300.42 190.04,346.86 192.46,346.86 194.88,346.86 197.30,346.86 199.72,346.86 202.14,346.86 204.56,346.86 206.98,346.86 209.40,346.86 211.82,346.86 214.24,346.86 216.66,393.30 219.08,346.86 221.50,346.86 223.92,346.86 226.34,346.86 228.76,346.86 231.18,393.30 233.60,346.86 236.02,346.86 238.44,346.86 240.86,346.86 243.28,346.86 245.70,346.86 248.12,346.86 250.54,346.86 252.96,346.86 255.38,346.86 257.80,346.86 260.22,346.86 262.64,346.86 265.06,393.30 267.48,346.86 269.90,346.86 272.32,346.86 274.74,346.86 277.16,393.30 279.58,346.86 282.00,346.86 284.42,346.86 286.84,346.86 289.26,346.86 291.68,346.86 294.10,346.86 296.52,346.86 298.94,393.30 301.36,346.86 303.78,346.86 306.20,346.86 308.62,346.86 311.04,346.86 313.46,346.86 315.88,346.86 318.30,346.86 320.72,346.86 323.14,346.86 325.56,346.86 327.98,346.86 330.40,393.30 332.82,346.86 335.24,346.86 337.66,346.86 340.08,346.86 342.50,346.86 344.92,346.86 347.34,346.86 349.76,346.86 352.18,300.42 354.60,346.86 357.02,346.86 359.44,346.86 361.86,393.30 364.28,346.86 366.70,346.86 369.12,346.86 371.54,346.86 373.96,346.86 376.38,346.86 378.80,346.86 381.22,346.86 383.64,393.30 386.06,346.86 388.48,346.86 390.90,346.86 393.32,346.86 395.74,346.86 398.16,346.86 400.58,346.86 403.00,346.86 405.42,393.30 407.84,346.86 410.26,346.86 412.68,346.86 415.10,346.86 417.52,346.86 419.94,393.30 422.36,346.86 424.78,346.86 427.20,393.30 429.62,346.86 432.04,346.86 434.46,346.86 436.88,346.86 439.30,346.86 441.72,346.86 444.14,393.30 446.56,346.86 448.98,346.86 451.40,346.86 453.82,346.86 456.24,346.86 458.66,346.86 461.08,346.86 463.50,346.86 465.92,346.86 468.34,346.86 470.76,346.86 473.18,393.30 475.60,346.86 478.02,346.86 480.44,346.86 482.86,346.86 485.28,346.86 487.70,346.86 490.12,393.30 492.54,346.86 494.96,346.86 497.38,393.30 499.80,346.86 502.22,346.86 504.64,346.86 507.06,346.86 509.48,346.86 511.90,393.30 514.32,346.86 516.74,346.86 519.16,346.86 521.58,346.86 524.00,393.30 526.42,346.86 528.84,346.86 531.26,346.86 533.68,346.86 536.10,346.86 538.52,346.86 540.94,346.86 543.36,346.86 545.78,393.30 548.20,346.86 550.62,346.86 553.04,346.86 555.46,346.86 557.88,346.86 560.30,346.86 562.72,346.86 565.14,346.86 567.56,346.86 569.98,346.86 572.40,346.86 574.82,393.30 577.24,346.86 579.66,346.86 582.08,346.86 584.50,346.86 586.92,346.86 589.34,346.86 591.76,346.86 594.18,346.86 596.60,346.86 599.02,346.86 601.44,346.86 603.86,346.86 606.28,393.30 608.70,346.86 611.12,346.86 613.54,346.86" stroke="#cfae3a" stroke-width="0.9" opacity="0.85"/>
<polyline points="40.00,346.86 42.42,346.86 44.84,346.86 47.26,346.86 49.68,346.86 52.10,346.86 54.52,346.86 56.94,393.30 59.36,346.86 61.78,346.86 64.20,346.86 66.62,346.86 69.04,346.86 71.46,346.86 73.88,346.86 76.30,346.86 78.72,300.42 81.14,346.86 83.56,346.86 85.98,346.86 88.40,346.86 90.82,346.86 93.24,346.86 95.66,346.86 98.08,300.42 100.50,346.86 102.92,346.86 105.34,346.86 107.76,346.86 110.18,346.86 112.60,346.86 115.02,346.86 117.44,346.86 119.86,346.86 122.28,346.86 124.70,346.86 127.12,393.30 129.54,346.86 131.96,346.86 134.38,346.86 136.80,346.86 139.22,346.86 141.64,346.86 144.06,346.86 146.48,346.86 148.90,346.86 151.32,346.86 153.74,346.86 156.16,300.42 158.58,346.86 161.00,346.86 163.42,346.86 165.84,346.86 168.26,346.86 170.68,346.86 173.10,346.86 175.52,346.86 177.94,346.86 180.36,346.86 182.78,393.30 185.20,346.86 187.62,346.86 190.04,346.86 192.46,346.86 194.88,346.86 197.30,346.86 199.72,346.86 202.14,346.86 204.56,346.86 206.98,346.86 209.40,346.86 211.82,346.86 214.24,346.86 216.66,346.86 219.08,346.86 221.50,346.86 223.92,346.86 226.34,346.86 228.76,346.86 231.18,346.86 233.60,346.86 236.02,346.86 238.44,346.86 240.86,346.86 243.28,346.86 245.70,346.86 248.12,346.86 250.54,346.86 252.96,393.30 255.38,346.86 257.80,346.86 260.22,346.86 262.64,346.86 265.06,346.86 267.48,346.86 269.90,346.86 272.32,346.86 274.74,346.86 277.16,346.86 279.58,346.86 282.00,346.86 284.42,346.86 286.84,346.86 289.26,346.86 291.68,346.86 294.10,346.86 296.52,346.86 298.94,346.86 301.36,346.86 303.78,346.86 306.20,346.86 308.62,346.86 311.04,346.86 313.46,346.86 315.88,393.30 318.30,346.86 320.72,346.86 323.14,346.86 325.56,346.86 327.98,346.86 330.40,346.86 332.82,346.86 335.24,346.86 337.66,346.86 340.08,346.86 342.50,346.86 344.92,346.86 347.34,346.86 349.76,346.86 352.18,346.86 354.60,346.86 357.02,346.86 359.44,346.86 361.86,346.86 364.28,346.86 366.70,346.86 369.12,346.86 371.54,393.30 373.96,346.86 376.38,346.86 378.80,346.86 381.22,346.86 383.64,346.86 386.06,300.42 388.48,346.86 390.90,346.86 393.32,300.42 395.74,346.86 398.16,346.86 400.58,393.30 403.00,346.86 405.42,346.86 407.84,346.86 410.26,346.86 412.68,346.86 415.10,346.86 417.52,346.86 419.94,346.86 422.36,346.86 424.78,346.86 427.20,300.42 429.62,346.86 432.04,346.86 434.46,346.86 436.88,346.86 439.30,346.86 441.72,346.86 444.14,346.86 446.56,346.86 448.98,346.86 451.40,346.86 453.82,346.86 456.24,346.86 458.66,346.86 461.08,346.86 463.50,346.86 465.92,393.30 468.34,346.86 470.76,346.86 473.18,346.86 475.60,346.86 478.02,346.86 480.44,346.86 482.86,346.86 485.28,346.86 487.70,346.86 490.12,346.86 492.54,346.86 494.96,346.86 497.38,346.86 499.80,346.86 502.22,346.86 504.64,346.86 507.06,346.86 509.48,393.30 511.90,346.86 514.32,346.86 516.74,300.42 519.16,346.86 521.58,346.86 524.00,346.86 526.42,346.86 528.84,346.86 531.26,346.86 533.68,346.86 536.10,346.86 538.52,346.86 540.94,346.86 543.36,346.86 545.78,346.86 548.20,346.86 550.62,346.86 553.04,346.86 555.46,346.86 557.88,346.86 560.30,393.30 562.72,346.86 565.14,346.86 567.56,346.86 569.98,346.86 572.40,346.86 574.82,346.86 577.24,346.86 579.66,346.86 582.08,346.86 584.50,346.86 586.92,346.86 589.34,346.86 591.76,346.86 594.18,346.86 596.60,346.86 599.02,300.42 601.44,346.86 603.86,346.86 606.28,346.86 608.70,346.86 611.12,346.86 613.54,346.86" stroke="#8fcfb4" stroke-width="0.9" opacity="0.8"/>
<polyline points="40.00,346.86 42.42,346.86 44.84,346.86 47.26,393.30 49.68,346.86 52.10,346.86 54.52,346.86 56.94,346.86 59.36,393.30 61.78,346.86 64.20,346.86 66.62,346.86 69.04,346.86 71.46,393.30 73.88,346.86 76.30,346.86 78.72,393.30 81.14,346.86 83.56,346.86 85.98,393.30 88.40,346.86 90.82,346.86 93.24,346.86 95.66,346.86 98.08,393.30 100.50,346.86 102.92,346.86 105.34,393.30 107.76,346.86 110.18,393.30 112.60,346.86 115.02,346.86 117.44,346.86 119.86,346.86 122.28,393.30 124.70,346.86 127.12,346.86 129.54,346.86 131.96,393.30 134.38,346.86 136.80,346.86 139.22,393.30 141.64,346.86 144.06,393.30 146.48,346.86 148.90,393.30 151.32,346.86 153.74,346.86 156.16,346.86 158.58,346.86 161.00,393.30 163.42,346.86 165.84,346.86 168.26,346.86 170.68,346.86 173.10,393.30 175.52,346.86 177.94,346.86 180.36,393.30 182.78,346.86 185.20,393.30 187.62,346.86 190.04,393.30 192.46,346.86 194.88,393.30 197.30,346.86 199.72,393.30 202.14,346.86 204.56,346.86 206.98,393.30 209.40,346.86 211.82,346.86 214.24,393.30 216.66,346.86 219.08,393.30 221.50,346.86 223.92,346.86 226.34,346.86 228.76,346.86 231.18,393.30 233.60,346.86 236.02,346.86 238.44,346.86 240.86,393.30 243.28,346.86 245.70,346.86 248.12,346.86 250.54,346.86 252.96,393.30 255.38,346.86 257.80,346.86 260.22,393.30 262.64,346.86 265.06,346.86 267.48,393.30 269.90,346.86 272.32,346.86 274.74,346.86 277.16,393.30 279.58,346.86 282.00,346.86 284.42,346.86 286.84,346.86 289.26,393.30 291.68,346.86 294.10,393.30 296.52,346.86 298.94,393.30 301.36,346.86 303.78,346.86 306.20,346.86 308.62,346.86 311.04,393.30 313.46,346.86 315.88,346.86 318.30,346.86 320.72,393.30 323.14,346.86 325.56,346.86 327.98,346.86 330.40,346.86 332.82,393.30 335.24,346.86 337.66,393.30 340.08,346.86 342.50,346.86 344.92,346.86 347.34,393.30 349.76,346.86 352.18,346.86 354.60,346.86 357.02,393.30 359.44,346.86 361.86,346.86 364.28,393.30 366.70,346.86 369.12,346.86 371.54,346.86 373.96,393.30 376.38,346.86 378.80,393.30 381.22,346.86 383.64,393.30 386.06,346.86 388.48,393.30 390.90,346.86 393.32,346.86 395.74,346.86 398.16,346.86 400.58,393.30 403.00,346.86 405.42,393.30 407.84,346.86 410.26,346.86 412.68,346.86 415.10,393.30 417.52,346.86 419.94,346.86 422.36,346.86 424.78,346.86 427.20,393.30 429.62,346.86 432.04,393.30 434.46,346.86 436.88,393.30 439.30,346.86 441.72,393.30 444.14,346.86 446.56,346.86 448.98,393.30 451.40,346.86 453.82,346.86 456.24,393.30 458.66,346.86 461.08,393.30 463.50,346.86 465.92,346.86 468.34,346.86 470.76,346.86 473.18,393.30 475.60,346.86 478.02,346.86 480.44,346.86 482.86,346.86 485.28,393.30 487.70,346.86 490.12,346.86 492.54,346.86 494.96,346.86 497.38,393.30 499.80,346.86 502.22,346.86 504.64,346.86 507.06,346.86 509.48,393.30 511.90,346.86 514.32,393.30 516.74,346.86 519.16,346.86 521.58,393.30 524.00,346.86 526.42,346.86 528.84,346.86 531.26,393.30 533.68,346.86 536.10,346.86 538.52,346.86 540.94,393.30 543.36,346.86 545.78,393.30 548.20,346.86 550.62,346.86 553.04,346.86 555.46,393.30 557.88,346.86 560.30,346.86 562.72,346.86 565.14,393.30 567.56,346.86 569.98,393.30 572.40,346.86 574.82,346.86 577.24,346.86 579.66,346.86 582.08,393.30 584.50,346.86 586.92,393.30 589.34,346.86 591.76,346.86 594.18,393.30 596.60,346.86 599.02,346.86 601.44,393.30 603.86,346.86 606.28,393.30 608.70,346.86 611.12,393.30 613.54,346.86" stroke="#4da6c2" stroke-width="0.9" opacity="0.85"/>
</g>
<text x="521" y="422.3" font-size="8.3" fill="#3aa0e4" font-weight="700" text-anchor="start" >min</text>
<path d="M538.3 419.6 L540.6 421.9 L542.9 419.6" stroke="#3aa0e4" stroke-width="1" fill="none"/>
<text x="584.6" y="422.3" font-size="8.3" fill="#3aa0e4" font-weight="700" text-anchor="end" >avg</text>
<text x="619" y="422.3" font-size="8.3" fill="#3aa0e4" font-weight="700" text-anchor="end" >current</text>
<rect x="15" y="444" width="611" height="18" fill="#22252a" />
<line x1="17.5" y1="435" x2="25.5" y2="435" stroke="#56a64b" stroke-width="2.2" stroke-linecap="round"/>
<text x="32.4" y="438" font-size="8.5" fill="#c8c8d4" font-weight="400" text-anchor="start" stroke="#c8c8d4" stroke-width="0.2" >Finalisation Delay</text>
<text x="551" y="438" font-size="8.5" fill="#c8c8d4" font-weight="400" text-anchor="end" stroke="#c8c8d4" stroke-width="0.2" >0</text>
<text x="589.6" y="438" font-size="8.5" fill="#c8c8d4" font-weight="400" text-anchor="end" stroke="#c8c8d4" stroke-width="0.2" >0.0539</text>
<text x="624.8" y="438" font-size="8.5" fill="#c8c8d4" font-weight="400" text-anchor="end" stroke="#c8c8d4" stroke-width="0.2" >0</text>
<line x1="17.5" y1="453" x2="25.5" y2="453" stroke="#a07ed8" stroke-width="2.2" stroke-linecap="round"/>
<text x="32.4" y="456" font-size="8.5" fill="#c8c8d4" font-weight="400" text-anchor="start" stroke="#c8c8d4" stroke-width="0.2" >Finalisation Delay</text>
<text x="551" y="456" font-size="8.5" fill="#c8c8d4" font-weight="400" text-anchor="end" stroke="#c8c8d4" stroke-width="0.2" >0</text>
<text x="589.6" y="456" font-size="8.5" fill="#c8c8d4" font-weight="400" text-anchor="end" stroke="#c8c8d4" stroke-width="0.2" >0.0581</text>
<text x="624.8" y="456" font-size="8.5" fill="#c8c8d4" font-weight="400" text-anchor="end" stroke="#c8c8d4" stroke-width="0.2" >0</text>
<line x1="17.5" y1="471" x2="25.5" y2="471" stroke="#d44a9f" stroke-width="2.2" stroke-linecap="round"/>
<text x="32.4" y="474" font-size="8.5" fill="#c8c8d4" font-weight="400" text-anchor="start" stroke="#c8c8d4" stroke-width="0.2" >Finalisation Delay</text>
<text x="551" y="474" font-size="8.5" fill="#c8c8d4" font-weight="400" text-anchor="end" stroke="#c8c8d4" stroke-width="0.2" >0</text>
<text x="589.6" y="474" font-size="8.5" fill="#c8c8d4" font-weight="400" text-anchor="end" stroke="#c8c8d4" stroke-width="0.2" >0.0581</text>
<text x="624.8" y="474" font-size="8.5" fill="#c8c8d4" font-weight="400" text-anchor="end" stroke="#c8c8d4" stroke-width="0.2" >0</text>
<rect x="15" y="480" width="611" height="4" rx="1" fill="#222428"/>
<rect x="641.5" y="243.5" width="628" height="247" rx="2" fill="#181b1f" stroke="#2a2c31" stroke-width="1"/>
<text x="647" y="257.3" font-size="10.0" fill="#d5d5df" font-weight="400" text-anchor="start" stroke="#d5d5df" stroke-width="0.45" letter-spacing="0.12">Participation Rate</text>
<g stroke="#a8a8b4" fill="none"><circle cx="743.5" cy="254.4" r="4.0" stroke-width="0.95"/><line x1="743.5" y1="252.3" x2="743.5" y2="256.1" stroke-width="0.85"/></g>
<rect x="671" y="316.9" width="582" height="81.60000000000002" fill="#31252a" />
<line x1="671" y1="277.0" x2="1253" y2="277.0" stroke="rgba(204,204,220,0.09)" stroke-width="1"/>
<text x="667" y="280.0" font-size="8.3" fill="#c2c2ce" font-weight="400" text-anchor="end" >100%</text>
<line x1="671" y1="307.375" x2="1253" y2="307.375" stroke="rgba(204,204,220,0.09)" stroke-width="1"/>
<text x="667" y="310.375" font-size="8.3" fill="#c2c2ce" font-weight="400" text-anchor="end" >75%</text>
<line x1="671" y1="337.75" x2="1253" y2="337.75" stroke="rgba(204,204,220,0.09)" stroke-width="1"/>
<text x="667" y="340.75" font-size="8.3" fill="#c2c2ce" font-weight="400" text-anchor="end" >50%</text>
<line x1="671" y1="368.125" x2="1253" y2="368.125" stroke="rgba(204,204,220,0.09)" stroke-width="1"/>
<text x="667" y="371.125" font-size="8.3" fill="#c2c2ce" font-weight="400" text-anchor="end" >25%</text>
<line x1="671" y1="398.5" x2="1253" y2="398.5" stroke="rgba(204,204,220,0.09)" stroke-width="1"/>
<text x="667" y="401.5" font-size="8.3" fill="#c2c2ce" font-weight="400" text-anchor="end" >0%</text>
<line x1="691.2" y1="277.0" x2="691.2" y2="398.5" stroke="rgba(204,204,220,0.09)" stroke-width="1"/>
<text x="691.2" y="411.3" font-size="8.3" fill="#c2c2ce" font-weight="400" text-anchor="middle" >15:55</text>
<line x1="739.6800000000001" y1="277.0" x2="739.6800000000001" y2="398.5" stroke="rgba(204,204,220,0.09)" stroke-width="1"/>
<text x="739.6800000000001" y="411.3" font-size="8.3" fill="#c2c2ce" font-weight="400" text-anchor="middle" >16:00</text>
<line x1="788.1600000000001" y1="277.0" x2="788.1600000000001" y2="398.5" stroke="rgba(204,204,220,0.09)" stroke-width="1"/>
<text x="788.1600000000001" y="411.3" font-size="8.3" fill="#c2c2ce" font-weight="400" text-anchor="middle" >16:05</text>
<line x1="836.6400000000001" y1="277.0" x2="836.6400000000001" y2="398.5" stroke="rgba(204,204,220,0.09)" stroke-width="1"/>
<text x="836.6400000000001" y="411.3" font-size="8.3" fill="#c2c2ce" font-weight="400" text-anchor="middle" >16:10</text>
<line x1="885.12" y1="277.0" x2="885.12" y2="398.5" stroke="rgba(204,204,220,0.09)" stroke-width="1"/>
<text x="885.12" y="411.3" font-size="8.3" fill="#c2c2ce" font-weight="400" text-anchor="middle" >16:15</text>
<line x1="933.6" y1="277.0" x2="933.6" y2="398.5" stroke="rgba(204,204,220,0.09)" stroke-width="1"/>
<text x="933.6" y="411.3" font-size="8.3" fill="#c2c2ce" font-weight="400" text-anchor="middle" >16:20</text>
<line x1="982.08" y1="277.0" x2="982.08" y2="398.5" stroke="rgba(204,204,220,0.09)" stroke-width="1"/>
<text x="982.08" y="411.3" font-size="8.3" fill="#c2c2ce" font-weight="400" text-anchor="middle" >16:25</text>
<line x1="1030.56" y1="277.0" x2="1030.56" y2="398.5" stroke="rgba(204,204,220,0.09)" stroke-width="1"/>
<text x="1030.56" y="411.3" font-size="8.3" fill="#c2c2ce" font-weight="400" text-anchor="middle" >16:30</text>
<line x1="1079.04" y1="277.0" x2="1079.04" y2="398.5" stroke="rgba(204,204,220,0.09)" stroke-width="1"/>
<text x="1079.04" y="411.3" font-size="8.3" fill="#c2c2ce" font-weight="400" text-anchor="middle" >16:35</text>
<line x1="1127.52" y1="277.0" x2="1127.52" y2="398.5" stroke="rgba(204,204,220,0.09)" stroke-width="1"/>
<text x="1127.52" y="411.3" font-size="8.3" fill="#c2c2ce" font-weight="400" text-anchor="middle" >16:40</text>
<line x1="1176.0" y1="277.0" x2="1176.0" y2="398.5" stroke="rgba(204,204,220,0.09)" stroke-width="1"/>
<text x="1176.0" y="411.3" font-size="8.3" fill="#c2c2ce" font-weight="400" text-anchor="middle" >16:45</text>
<line x1="1224.48" y1="277.0" x2="1224.48" y2="398.5" stroke="rgba(204,204,220,0.09)" stroke-width="1"/>
<text x="1224.48" y="411.3" font-size="8.3" fill="#c2c2ce" font-weight="400" text-anchor="middle" >16:50</text>
<line x1="671" y1="316.9" x2="1253" y2="316.9" stroke="#b0382c" stroke-width="1.7"/>
<polyline points="671.00,282.50 713.30,282.50 714.40,281.60 772.20,281.60 778.00,287.30 794.00,287.30 799.00,283.60 836.30,283.60 838.30,284.00 960.00,284.10 1022.00,284.00 1026.00,283.60 1084.00,283.60 1146.00,283.20 1149.00,282.40 1206.90,282.40 1210.00,284.60 1251.30,284.60" fill="none" stroke="#6f9f5a" stroke-width="1.0" stroke-dasharray="2 1"/>
<polyline points="671.00,283.00 713.30,283.00 714.40,282.10 772.20,282.10 778.00,288.00 794.00,288.00 799.00,284.20 836.30,284.20 838.30,285.00 898.30,285.00 900.00,287.10 1022.00,287.10 1026.00,284.00 1084.00,284.00 1086.00,284.40 1146.00,283.60 1149.00,282.80 1206.90,282.80 1210.00,287.10 1251.30,287.10" fill="none" stroke="#d9b335" stroke-width="1.1"/>
<polyline points="671.00,296.40 710.20,296.40 713.30,293.50 772.20,293.50 774.30,295.20 834.20,295.20 837.30,297.90 894.10,297.90 897.20,291.70 957.20,291.70 960.00,293.70 1021.00,293.70 1023.00,295.00 1081.00,295.00 1084.00,307.10 1143.90,307.10 1147.00,285.50 1204.80,285.50 1207.50,295.40 1251.30,295.40" fill="none" stroke="#5fb3c8" stroke-width="1.1"/>
<text x="1218.6" y="427" font-size="8.3" fill="#3aa0e4" font-weight="700" text-anchor="end" >avg</text>
<text x="1253.7" y="427" font-size="8.3" fill="#3aa0e4" font-weight="700" text-anchor="end" >current</text>
<rect x="649" y="449" width="612" height="18" fill="#22252a" />
<line x1="652.5" y1="440" x2="660.5" y2="440" stroke="#73bf69" stroke-width="2.2" stroke-linecap="round"/>
<text x="667.4" y="443" font-size="8.5" fill="#c8c8d4" font-weight="400" text-anchor="start" stroke="#c8c8d4" stroke-width="0.2" >Live Validators</text>
<text x="1223.6" y="443" font-size="8.5" fill="#c8c8d4" font-weight="400" text-anchor="end" stroke="#c8c8d4" stroke-width="0.2" >94.0%</text>
<text x="1259.4" y="443" font-size="8.5" fill="#c8c8d4" font-weight="400" text-anchor="end" stroke="#c8c8d4" stroke-width="0.2" >93.2%</text>
<line x1="652.5" y1="458" x2="660.5" y2="458" stroke="#f2cc0c" stroke-width="2.2" stroke-linecap="round"/>
<text x="667.4" y="461" font-size="8.5" fill="#c8c8d4" font-weight="400" text-anchor="start" stroke="#c8c8d4" stroke-width="0.2" >Correct Validators</text>
<text x="1223.6" y="461" font-size="8.5" fill="#c8c8d4" font-weight="400" text-anchor="end" stroke="#c8c8d4" stroke-width="0.2" >93.5%</text>
<text x="1259.4" y="461" font-size="8.5" fill="#c8c8d4" font-weight="400" text-anchor="end" stroke="#c8c8d4" stroke-width="0.2" >91.5%</text>
<line x1="652.5" y1="475" x2="660.5" y2="475" stroke="#6ed0e0" stroke-width="2.2" stroke-linecap="round"/>
<text x="667.4" y="478" font-size="8.5" fill="#c8c8d4" font-weight="400" text-anchor="start" stroke="#c8c8d4" stroke-width="0.2" >Sync Committee Participation</text>
<text x="1223.6" y="478" font-size="8.5" fill="#c8c8d4" font-weight="400" text-anchor="end" stroke="#c8c8d4" stroke-width="0.2" >84.8%</text>
<text x="1259.4" y="478" font-size="8.5" fill="#c8c8d4" font-weight="400" text-anchor="end" stroke="#c8c8d4" stroke-width="0.2" >84.6%</text>
<rect x="1276.5" y="243.5" width="628" height="247" rx="2" fill="#181b1f" stroke="#2a2c31" stroke-width="1"/>
<text x="1282" y="257.3" font-size="10.0" fill="#d5d5df" font-weight="400" text-anchor="start" stroke="#d5d5df" stroke-width="0.45" letter-spacing="0.12">Peer Client Software</text>
<g stroke="#a8a8b4" fill="none"><circle cx="1391.5" cy="254.4" r="4.0" stroke-width="0.95"/><line x1="1391.5" y1="252.3" x2="1391.5" y2="256.1" stroke-width="0.85"/></g>
<polygon points="1306.40,276.50 1308.40,276.50 1310.40,276.50 1312.40,276.50 1314.40,276.50 1316.40,276.50 1318.40,276.50 1320.40,276.50 1322.40,276.50 1324.40,276.50 1326.40,276.50 1328.40,276.50 1330.40,276.50 1332.40,276.50 1334.40,276.50 1336.40,276.50 1338.40,276.50 1340.40,276.50 1342.40,276.50 1344.40,276.50 1346.40,276.50 1348.40,276.50 1350.40,276.50 1352.40,276.50 1354.40,276.50 1356.40,276.50 1358.40,276.50 1360.40,276.50 1362.40,276.50 1364.40,276.50 1366.40,276.50 1368.40,276.50 1370.40,276.50 1372.40,276.50 1374.40,276.50 1376.40,276.50 1378.40,276.50 1380.40,276.50 1382.40,276.50 1384.40,276.50 1386.40,276.50 1388.40,276.50 1390.40,276.50 1392.40,276.50 1394.40,276.50 1396.40,276.50 1398.40,276.50 1400.40,276.50 1402.40,276.50 1404.40,276.50 1406.40,276.50 1408.40,276.50 1410.40,276.50 1412.40,276.50 1414.40,276.50 1416.40,276.50 1418.40,276.50 1420.40,276.50 1422.40,276.50 1424.40,276.50 1426.40,276.50 1428.40,276.50 1430.40,276.50 1432.40,276.50 1434.40,276.50 1436.40,276.50 1438.40,276.50 1440.40,276.50 1442.40,276.50 1444.40,276.50 1446.40,276.50 1448.40,276.50 1450.40,276.50 1452.40,276.50 1454.40,276.50 1456.40,276.50 1458.40,276.50 1460.40,276.50 1462.40,276.50 1464.40,276.50 1466.40,276.50 1468.40,276.50 1470.40,276.50 1472.40,276.50 1474.40,276.50 1476.40,276.50 1478.40,276.50 1480.40,276.50 1482.40,276.50 1484.40,276.50 1486.40,276.50 1488.40,276.50 1490.40,276.50 1492.40,276.50 1494.40,276.50 1496.40,276.50 1498.40,276.50 1500.40,276.50 1502.40,276.50 1504.40,276.50 1506.40,276.50 1508.40,276.50 1510.40,276.50 1512.40,276.50 1514.40,276.50 1516.40,276.50 1518.40,276.50 1520.40,276.50 1522.40,276.50 1524.40,276.50 1526.40,276.50 1528.40,276.50 1530.40,276.50 1532.40,276.50 1534.40,276.50 1536.40,276.50 1538.40,276.50 1540.40,276.50 1542.40,276.50 1544.40,276.50 1546.40,276.50 1548.40,276.50 1550.40,276.50 1552.40,276.50 1554.40,276.50 1556.40,276.50 1558.40,276.50 1560.40,276.50 1562.40,276.50 1564.40,276.50 1566.40,276.50 1568.40,276.50 1570.40,276.50 1572.40,276.50 1574.40,276.50 1576.40,276.50 1578.40,276.50 1580.40,276.50 1582.40,276.50 1584.40,276.50 1586.40,276.50 1588.40,276.50 1590.40,276.50 1592.40,276.50 1594.40,276.50 1596.40,276.50 1598.40,276.50 1600.40,276.50 1602.40,276.50 1604.40,276.50 1606.40,276.50 1608.40,276.50 1610.40,276.50 1612.40,276.50 1614.40,276.50 1616.40,276.50 1618.40,276.50 1620.40,276.50 1622.40,276.50 1624.40,276.50 1626.40,276.50 1628.40,276.50 1630.40,276.50 1632.40,276.50 1634.40,276.50 1636.40,276.50 1638.40,276.50 1640.40,276.50 1642.40,276.50 1644.40,276.50 1646.40,276.50 1648.40,276.50 1650.40,276.50 1652.40,276.50 1654.40,276.50 1656.40,276.50 1658.40,276.50 1660.40,276.50 1662.40,276.50 1664.40,276.50 1666.40,276.50 1668.40,276.50 1670.40,276.50 1672.40,276.50 1674.40,276.50 1676.40,276.50 1678.40,276.50 1680.40,276.50 1682.40,276.50 1684.40,276.50 1686.40,276.50 1688.40,276.50 1690.40,276.50 1692.40,276.50 1694.40,276.50 1696.40,276.50 1698.40,276.50 1700.40,276.50 1702.40,276.50 1704.40,276.50 1706.40,276.50 1708.40,276.50 1710.40,276.50 1712.40,276.50 1714.40,276.50 1716.40,276.50 1718.40,276.50 1720.40,276.50 1722.40,276.50 1724.40,276.50 1726.40,276.50 1728.40,276.50 1730.40,276.50 1732.40,276.50 1734.40,276.50 1736.40,276.50 1738.40,276.50 1740.40,276.50 1742.40,276.50 1744.40,276.50 1746.40,276.50 1748.40,276.50 1750.40,276.50 1752.40,276.50 1754.40,276.50 1756.40,276.50 1758.40,276.50 1760.40,276.50 1762.40,276.50 1764.40,276.50 1766.40,276.50 1768.40,276.50 1770.40,276.50 1772.40,276.50 1774.40,276.50 1776.40,276.50 1778.40,276.50 1780.40,276.50 1782.40,276.50 1784.40,276.50 1786.40,276.50 1788.40,276.50 1790.40,276.50 1792.40,276.50 1794.40,276.50 1796.40,276.50 1798.40,276.50 1800.40,276.50 1802.40,276.50 1804.40,276.50 1806.40,276.50 1808.40,276.50 1810.40,276.50 1812.40,276.50 1814.40,276.50 1816.40,276.50 1818.40,276.50 1820.40,276.50 1822.40,276.50 1824.40,276.50 1826.40,276.50 1828.40,276.50 1830.40,276.50 1832.40,276.50 1834.40,276.50 1836.40,276.50 1838.40,276.50 1840.40,276.50 1842.40,276.50 1844.40,276.50 1846.40,276.50 1848.40,276.50 1850.40,276.50 1852.40,276.50 1854.40,276.50 1856.40,276.50 1858.40,276.50 1860.40,276.50 1862.40,276.50 1864.40,276.50 1866.40,276.50 1868.40,276.50 1870.40,276.50 1872.40,276.50 1874.40,276.50 1876.40,276.50 1878.40,276.50 1880.40,276.50 1882.40,276.50 1884.40,276.50 1886.30,276.50 1886.30,277.90 1884.40,277.73 1882.40,277.37 1880.40,277.20 1878.40,277.20 1876.40,277.20 1874.40,277.39 1872.40,277.77 1870.40,277.95 1868.40,277.85 1866.40,277.64 1864.40,277.53 1862.40,277.53 1860.40,277.53 1858.40,277.46 1856.40,277.30 1854.40,277.40 1852.40,277.75 1850.40,277.93 1848.40,277.93 1846.40,277.95 1844.40,277.96 1842.40,278.04 1840.40,278.22 1838.40,278.31 1836.40,278.31 1834.40,278.31 1832.40,278.31 1830.40,278.39 1828.40,278.53 1826.40,278.61 1824.40,278.57 1822.40,278.49 1820.40,278.44 1818.40,278.45 1816.40,278.48 1814.40,278.49 1812.40,278.49 1810.40,278.35 1808.40,278.09 1806.40,277.95 1804.40,277.95 1802.40,277.94 1800.40,278.06 1798.40,278.31 1796.40,278.43 1794.40,278.61 1792.40,278.96 1790.40,279.14 1788.40,279.14 1786.40,279.14 1784.40,278.94 1782.40,278.54 1780.40,278.32 1778.40,278.29 1776.40,278.28 1774.40,278.28 1772.40,278.28 1770.40,278.29 1768.40,278.32 1766.40,278.33 1764.40,278.26 1762.40,278.13 1760.40,278.06 1758.40,277.92 1756.40,277.65 1754.40,277.51 1752.40,277.51 1750.40,277.51 1748.40,277.73 1746.40,278.16 1744.40,278.38 1742.40,278.38 1740.40,278.38 1738.40,278.19 1736.40,277.82 1734.40,277.76 1732.40,278.01 1730.40,278.14 1728.40,278.14 1726.40,278.14 1724.40,278.24 1722.40,278.44 1720.40,278.54 1718.40,278.49 1716.40,278.38 1714.40,278.33 1712.40,278.33 1710.40,278.33 1708.40,278.33 1706.40,278.15 1704.40,277.78 1702.40,277.63 1700.40,277.70 1698.40,277.73 1696.40,277.96 1694.40,278.40 1692.40,278.63 1690.40,278.63 1688.40,278.63 1686.40,278.63 1684.40,278.54 1682.40,278.38 1680.40,278.30 1678.40,278.30 1676.40,278.20 1674.40,278.00 1672.40,277.90 1670.40,277.90 1668.40,278.05 1666.40,278.34 1664.40,278.49 1662.40,278.49 1660.40,278.49 1658.40,278.49 1656.40,278.14 1654.40,277.45 1652.40,277.10 1650.40,277.10 1648.40,277.10 1646.40,277.10 1644.40,277.10 1642.40,277.10 1640.40,277.10 1638.40,277.10 1636.40,277.10 1634.40,277.39 1632.40,277.98 1630.40,278.27 1628.40,278.28 1626.40,278.28 1624.40,277.98 1622.40,277.37 1620.40,277.06 1618.40,277.06 1616.40,277.06 1614.40,277.06 1612.40,277.33 1610.40,277.86 1608.40,278.13 1606.40,278.13 1604.40,278.13 1602.40,278.13 1600.40,277.87 1598.40,277.35 1596.40,277.09 1594.40,277.09 1592.40,277.29 1590.40,277.70 1588.40,277.91 1586.40,277.91 1584.40,277.91 1582.40,277.93 1580.40,277.98 1578.40,278.00 1576.40,277.80 1574.40,277.41 1572.40,277.21 1570.40,277.21 1568.40,277.32 1566.40,277.53 1564.40,277.64 1562.40,277.64 1560.40,277.64 1558.40,277.46 1556.40,277.08 1554.40,276.90 1552.40,276.90 1550.40,276.90 1548.40,277.12 1546.40,277.58 1544.40,277.63 1542.40,277.28 1540.40,277.10 1538.40,277.10 1536.40,277.10 1534.40,277.07 1532.40,277.00 1530.40,276.96 1528.40,277.22 1526.40,277.72 1524.40,277.97 1522.40,277.97 1520.40,277.81 1518.40,277.50 1516.40,277.34 1514.40,277.34 1512.40,277.34 1510.40,277.34 1508.40,277.46 1506.40,277.69 1504.40,277.81 1502.40,277.81 1500.40,277.49 1498.40,276.85 1496.40,276.59 1494.40,276.72 1492.40,276.79 1490.40,276.79 1488.40,276.79 1486.40,276.78 1484.40,276.94 1482.40,277.26 1480.40,277.42 1478.40,277.42 1476.40,277.42 1474.40,277.15 1472.40,276.60 1470.40,276.32 1468.40,276.42 1466.40,276.62 1464.40,276.72 1462.40,276.72 1460.40,276.72 1458.40,276.96 1456.40,277.43 1454.40,277.67 1452.40,277.64 1450.40,277.59 1448.40,277.56 1446.40,277.56 1444.40,277.56 1442.40,277.56 1440.40,277.29 1438.40,276.74 1436.40,276.47 1434.40,276.47 1432.40,276.48 1430.40,276.50 1428.40,276.51 1426.40,276.51 1424.40,276.69 1422.40,277.05 1420.40,277.13 1418.40,276.94 1416.40,276.84 1414.40,276.78 1412.40,276.67 1410.40,276.61 1408.40,276.59 1406.40,276.55 1404.40,276.54 1402.40,276.54 1400.40,276.61 1398.40,276.76 1396.40,276.84 1394.40,276.87 1392.40,276.94 1390.40,276.97 1388.40,276.97 1386.40,276.97 1384.40,277.40 1382.40,278.27 1380.40,278.70 1378.40,278.70 1376.40,278.70 1374.40,278.67 1372.40,278.60 1370.40,278.57 1368.40,278.57 1366.40,278.57 1364.40,278.58 1362.40,278.60 1360.40,278.61 1358.40,278.81 1356.40,279.21 1354.40,279.41 1352.40,279.08 1350.40,278.42 1348.40,278.25 1346.40,278.56 1344.40,278.67 1342.40,278.58 1340.40,278.54 1338.40,279.27 1336.40,280.74 1334.40,281.47 1332.40,281.47 1330.40,281.47 1328.40,281.47 1326.40,281.10 1324.40,280.38 1322.40,280.01 1320.40,280.12 1318.40,280.33 1316.40,280.33 1314.40,280.10 1312.40,279.99 1310.40,279.99 1308.40,279.99 1306.40,279.99" fill="#2f6cbd"/>
<polygon points="1306.40,279.99 1308.40,279.99 1310.40,279.99 1312.40,279.99 1314.40,280.10 1316.40,280.33 1318.40,280.33 1320.40,280.12 1322.40,280.01 1324.40,280.38 1326.40,281.10 1328.40,281.47 1330.40,281.47 1332.40,281.47 1334.40,281.47 1336.40,280.74 1338.40,279.27 1340.40,278.54 1342.40,278.58 1344.40,278.67 1346.40,278.56 1348.40,278.25 1350.40,278.42 1352.40,279.08 1354.40,279.41 1356.40,279.21 1358.40,278.81 1360.40,278.61 1362.40,278.60 1364.40,278.58 1366.40,278.57 1368.40,278.57 1370.40,278.57 1372.40,278.60 1374.40,278.67 1376.40,278.70 1378.40,278.70 1380.40,278.70 1382.40,278.27 1384.40,277.40 1386.40,276.97 1388.40,276.97 1390.40,276.97 1392.40,276.94 1394.40,276.87 1396.40,276.84 1398.40,276.76 1400.40,276.61 1402.40,276.54 1404.40,276.54 1406.40,276.55 1408.40,276.59 1410.40,276.61 1412.40,276.67 1414.40,276.78 1416.40,276.84 1418.40,276.94 1420.40,277.13 1422.40,277.05 1424.40,276.69 1426.40,276.51 1428.40,276.51 1430.40,276.50 1432.40,276.48 1434.40,276.47 1436.40,276.47 1438.40,276.74 1440.40,277.29 1442.40,277.56 1444.40,277.56 1446.40,277.56 1448.40,277.56 1450.40,277.59 1452.40,277.64 1454.40,277.67 1456.40,277.43 1458.40,276.96 1460.40,276.72 1462.40,276.72 1464.40,276.72 1466.40,276.62 1468.40,276.42 1470.40,276.32 1472.40,276.60 1474.40,277.15 1476.40,277.42 1478.40,277.42 1480.40,277.42 1482.40,277.26 1484.40,276.94 1486.40,276.78 1488.40,276.79 1490.40,276.79 1492.40,276.79 1494.40,276.72 1496.40,276.59 1498.40,276.85 1500.40,277.49 1502.40,277.81 1504.40,277.81 1506.40,277.69 1508.40,277.46 1510.40,277.34 1512.40,277.34 1514.40,277.34 1516.40,277.34 1518.40,277.50 1520.40,277.81 1522.40,277.97 1524.40,277.97 1526.40,277.72 1528.40,277.22 1530.40,276.96 1532.40,277.00 1534.40,277.07 1536.40,277.10 1538.40,277.10 1540.40,277.10 1542.40,277.28 1544.40,277.63 1546.40,277.58 1548.40,277.12 1550.40,276.90 1552.40,276.90 1554.40,276.90 1556.40,277.08 1558.40,277.46 1560.40,277.64 1562.40,277.64 1564.40,277.64 1566.40,277.53 1568.40,277.32 1570.40,277.21 1572.40,277.21 1574.40,277.41 1576.40,277.80 1578.40,278.00 1580.40,277.98 1582.40,277.93 1584.40,277.91 1586.40,277.91 1588.40,277.91 1590.40,277.70 1592.40,277.29 1594.40,277.09 1596.40,277.09 1598.40,277.35 1600.40,277.87 1602.40,278.13 1604.40,278.13 1606.40,278.13 1608.40,278.13 1610.40,277.86 1612.40,277.33 1614.40,277.06 1616.40,277.06 1618.40,277.06 1620.40,277.06 1622.40,277.37 1624.40,277.98 1626.40,278.28 1628.40,278.28 1630.40,278.27 1632.40,277.98 1634.40,277.39 1636.40,277.10 1638.40,277.10 1640.40,277.10 1642.40,277.10 1644.40,277.10 1646.40,277.10 1648.40,277.10 1650.40,277.10 1652.40,277.10 1654.40,277.45 1656.40,278.14 1658.40,278.49 1660.40,278.49 1662.40,278.49 1664.40,278.49 1666.40,278.34 1668.40,278.05 1670.40,277.90 1672.40,277.90 1674.40,278.00 1676.40,278.20 1678.40,278.30 1680.40,278.30 1682.40,278.38 1684.40,278.54 1686.40,278.63 1688.40,278.63 1690.40,278.63 1692.40,278.63 1694.40,278.40 1696.40,277.96 1698.40,277.73 1700.40,277.70 1702.40,277.63 1704.40,277.78 1706.40,278.15 1708.40,278.33 1710.40,278.33 1712.40,278.33 1714.40,278.33 1716.40,278.38 1718.40,278.49 1720.40,278.54 1722.40,278.44 1724.40,278.24 1726.40,278.14 1728.40,278.14 1730.40,278.14 1732.40,278.01 1734.40,277.76 1736.40,277.82 1738.40,278.19 1740.40,278.38 1742.40,278.38 1744.40,278.38 1746.40,278.16 1748.40,277.73 1750.40,277.51 1752.40,277.51 1754.40,277.51 1756.40,277.65 1758.40,277.92 1760.40,278.06 1762.40,278.13 1764.40,278.26 1766.40,278.33 1768.40,278.32 1770.40,278.29 1772.40,278.28 1774.40,278.28 1776.40,278.28 1778.40,278.29 1780.40,278.32 1782.40,278.54 1784.40,278.94 1786.40,279.14 1788.40,279.14 1790.40,279.14 1792.40,278.96 1794.40,278.61 1796.40,278.43 1798.40,278.31 1800.40,278.06 1802.40,277.94 1804.40,277.95 1806.40,277.95 1808.40,278.09 1810.40,278.35 1812.40,278.49 1814.40,278.49 1816.40,278.48 1818.40,278.45 1820.40,278.44 1822.40,278.49 1824.40,278.57 1826.40,278.61 1828.40,278.53 1830.40,278.39 1832.40,278.31 1834.40,278.31 1836.40,278.31 1838.40,278.31 1840.40,278.22 1842.40,278.04 1844.40,277.96 1846.40,277.95 1848.40,277.93 1850.40,277.93 1852.40,277.75 1854.40,277.40 1856.40,277.30 1858.40,277.46 1860.40,277.53 1862.40,277.53 1864.40,277.53 1866.40,277.64 1868.40,277.85 1870.40,277.95 1872.40,277.77 1874.40,277.39 1876.40,277.20 1878.40,277.20 1880.40,277.20 1882.40,277.37 1884.40,277.73 1886.30,277.90 1886.30,311.51 1884.40,311.13 1882.40,311.00 1880.40,311.00 1878.40,311.00 1876.40,311.31 1874.40,311.92 1872.40,312.23 1870.40,312.21 1868.40,312.17 1866.40,312.15 1864.40,312.15 1862.40,312.15 1860.40,311.73 1858.40,310.89 1856.40,310.47 1854.40,310.47 1852.40,310.47 1850.40,310.56 1848.40,310.75 1846.40,310.85 1844.40,310.93 1842.40,311.08 1840.40,311.17 1838.40,311.19 1836.40,311.20 1834.40,311.20 1832.40,311.20 1830.40,311.20 1828.40,311.40 1826.40,311.79 1824.40,311.84 1822.40,311.55 1820.40,311.40 1818.40,311.40 1816.40,311.40 1814.40,311.63 1812.40,312.10 1810.40,312.11 1808.40,311.67 1806.40,311.44 1804.40,311.44 1802.40,311.39 1800.40,311.29 1798.40,311.24 1796.40,311.24 1794.40,311.24 1792.40,311.24 1790.40,311.59 1788.40,312.31 1786.40,312.67 1784.40,312.63 1782.40,312.56 1780.40,312.52 1778.40,312.50 1776.40,312.46 1774.40,312.44 1772.40,312.44 1770.40,312.44 1768.40,312.18 1766.40,311.64 1764.40,311.38 1762.40,311.38 1760.40,311.26 1758.40,311.04 1756.40,310.92 1754.40,310.96 1752.40,311.02 1750.40,311.05 1748.40,311.05 1746.40,311.08 1744.40,311.12 1742.40,311.43 1740.40,311.99 1738.40,311.91 1736.40,311.18 1734.40,310.82 1732.40,311.05 1730.40,311.51 1728.40,311.74 1726.40,311.83 1724.40,312.01 1722.40,312.10 1720.40,312.10 1718.40,311.91 1716.40,311.54 1714.40,311.36 1712.40,311.25 1710.40,311.02 1708.40,310.91 1706.40,310.91 1704.40,310.91 1702.40,311.10 1700.40,311.49 1698.40,311.67 1696.40,311.64 1694.40,311.63 1692.40,311.63 1690.40,311.79 1688.40,312.11 1686.40,311.90 1684.40,311.15 1682.40,310.78 1680.40,311.11 1678.40,311.78 1676.40,312.11 1674.40,312.09 1672.40,312.05 1670.40,312.03 1668.40,312.03 1666.40,311.65 1664.40,310.90 1662.40,310.53 1660.40,310.53 1658.40,310.53 1656.40,310.93 1654.40,311.74 1652.40,312.14 1650.40,312.14 1648.40,312.14 1646.40,311.83 1644.40,311.20 1642.40,310.88 1640.40,310.57 1638.40,309.95 1636.40,309.07 1634.40,307.92 1632.40,307.34 1630.40,307.34 1628.40,307.59 1626.40,308.09 1624.40,308.34 1622.40,308.34 1620.40,308.34 1618.40,308.34 1616.40,308.53 1614.40,308.90 1612.40,309.08 1610.40,309.08 1608.40,309.08 1606.40,308.76 1604.40,308.12 1602.40,307.79 1600.40,307.79 1598.40,307.72 1596.40,307.57 1594.40,307.49 1592.40,307.49 1590.40,307.49 1588.40,307.91 1586.40,308.74 1584.40,309.15 1582.40,309.15 1580.40,309.15 1578.40,309.27 1576.40,309.50 1574.40,309.61 1572.40,309.62 1570.40,309.63 1568.40,309.33 1566.40,308.73 1564.40,308.43 1562.40,308.43 1560.40,308.43 1558.40,308.33 1556.40,308.13 1554.40,308.03 1552.40,308.30 1550.40,308.83 1548.40,309.10 1546.40,309.10 1544.40,309.10 1542.40,309.10 1540.40,308.83 1538.40,308.30 1536.40,308.04 1534.40,308.04 1532.40,308.16 1530.40,308.41 1528.40,308.53 1526.40,308.53 1524.40,308.53 1522.40,308.64 1520.40,308.85 1518.40,308.96 1516.40,308.96 1514.40,308.75 1512.40,308.32 1510.40,308.11 1508.40,308.11 1506.40,308.11 1504.40,308.28 1502.40,308.61 1500.40,308.78 1498.40,308.78 1496.40,308.78 1494.40,308.78 1492.40,308.72 1490.40,308.60 1488.40,308.55 1486.40,308.30 1484.40,307.81 1482.40,307.56 1480.40,307.56 1478.40,307.56 1476.40,307.45 1474.40,307.23 1472.40,307.12 1470.40,306.96 1468.40,306.64 1466.40,306.48 1464.40,306.48 1462.40,306.48 1460.40,306.56 1458.40,306.73 1456.40,306.80 1454.40,306.77 1452.40,306.76 1450.40,306.62 1448.40,306.34 1446.40,306.20 1444.40,306.20 1442.40,306.20 1440.40,306.66 1438.40,307.59 1436.40,308.06 1434.40,308.07 1432.40,308.09 1430.40,308.11 1428.40,308.11 1426.40,308.11 1424.40,308.16 1422.40,308.28 1420.40,308.34 1418.40,308.34 1416.40,308.34 1414.40,308.34 1412.40,308.25 1410.40,308.07 1408.40,307.98 1406.40,307.98 1404.40,308.24 1402.40,308.75 1400.40,309.01 1398.40,309.01 1396.40,309.01 1394.40,309.00 1392.40,308.98 1390.40,308.97 1388.40,308.97 1386.40,308.97 1384.40,309.24 1382.40,309.78 1380.40,309.84 1378.40,309.43 1376.40,309.22 1374.40,309.22 1372.40,309.52 1370.40,310.10 1368.40,310.36 1366.40,310.30 1364.40,310.27 1362.40,310.27 1360.40,310.27 1358.40,310.17 1356.40,309.98 1354.40,309.88 1352.40,309.88 1350.40,310.10 1348.40,310.54 1346.40,310.76 1344.40,310.99 1342.40,311.47 1340.40,311.70 1338.40,311.70 1336.40,311.64 1334.40,311.52 1332.40,311.46 1330.40,311.46 1328.40,311.46 1326.40,311.46 1324.40,311.25 1322.40,310.83 1320.40,310.62 1318.40,310.64 1316.40,310.68 1314.40,310.69 1312.40,310.69 1310.40,310.69 1308.40,310.69 1306.40,310.69" fill="#a83e3a"/>
<polygon points="1306.40,310.69 1308.40,310.69 1310.40,310.69 1312.40,310.69 1314.40,310.69 1316.40,310.68 1318.40,310.64 1320.40,310.62 1322.40,310.83 1324.40,311.25 1326.40,311.46 1328.40,311.46 1330.40,311.46 1332.40,311.46 1334.40,311.52 1336.40,311.64 1338.40,311.70 1340.40,311.70 1342.40,311.47 1344.40,310.99 1346.40,310.76 1348.40,310.54 1350.40,310.10 1352.40,309.88 1354.40,309.88 1356.40,309.98 1358.40,310.17 1360.40,310.27 1362.40,310.27 1364.40,310.27 1366.40,310.30 1368.40,310.36 1370.40,310.10 1372.40,309.52 1374.40,309.22 1376.40,309.22 1378.40,309.43 1380.40,309.84 1382.40,309.78 1384.40,309.24 1386.40,308.97 1388.40,308.97 1390.40,308.97 1392.40,308.98 1394.40,309.00 1396.40,309.01 1398.40,309.01 1400.40,309.01 1402.40,308.75 1404.40,308.24 1406.40,307.98 1408.40,307.98 1410.40,308.07 1412.40,308.25 1414.40,308.34 1416.40,308.34 1418.40,308.34 1420.40,308.34 1422.40,308.28 1424.40,308.16 1426.40,308.11 1428.40,308.11 1430.40,308.11 1432.40,308.09 1434.40,308.07 1436.40,308.06 1438.40,307.59 1440.40,306.66 1442.40,306.20 1444.40,306.20 1446.40,306.20 1448.40,306.34 1450.40,306.62 1452.40,306.76 1454.40,306.77 1456.40,306.80 1458.40,306.73 1460.40,306.56 1462.40,306.48 1464.40,306.48 1466.40,306.48 1468.40,306.64 1470.40,306.96 1472.40,307.12 1474.40,307.23 1476.40,307.45 1478.40,307.56 1480.40,307.56 1482.40,307.56 1484.40,307.81 1486.40,308.30 1488.40,308.55 1490.40,308.60 1492.40,308.72 1494.40,308.78 1496.40,308.78 1498.40,308.78 1500.40,308.78 1502.40,308.61 1504.40,308.28 1506.40,308.11 1508.40,308.11 1510.40,308.11 1512.40,308.32 1514.40,308.75 1516.40,308.96 1518.40,308.96 1520.40,308.85 1522.40,308.64 1524.40,308.53 1526.40,308.53 1528.40,308.53 1530.40,308.41 1532.40,308.16 1534.40,308.04 1536.40,308.04 1538.40,308.30 1540.40,308.83 1542.40,309.10 1544.40,309.10 1546.40,309.10 1548.40,309.10 1550.40,308.83 1552.40,308.30 1554.40,308.03 1556.40,308.13 1558.40,308.33 1560.40,308.43 1562.40,308.43 1564.40,308.43 1566.40,308.73 1568.40,309.33 1570.40,309.63 1572.40,309.62 1574.40,309.61 1576.40,309.50 1578.40,309.27 1580.40,309.15 1582.40,309.15 1584.40,309.15 1586.40,308.74 1588.40,307.91 1590.40,307.49 1592.40,307.49 1594.40,307.49 1596.40,307.57 1598.40,307.72 1600.40,307.79 1602.40,307.79 1604.40,308.12 1606.40,308.76 1608.40,309.08 1610.40,309.08 1612.40,309.08 1614.40,308.90 1616.40,308.53 1618.40,308.34 1620.40,308.34 1622.40,308.34 1624.40,308.34 1626.40,308.09 1628.40,307.59 1630.40,307.34 1632.40,307.34 1634.40,307.92 1636.40,309.07 1638.40,309.95 1640.40,310.57 1642.40,310.88 1644.40,311.20 1646.40,311.83 1648.40,312.14 1650.40,312.14 1652.40,312.14 1654.40,311.74 1656.40,310.93 1658.40,310.53 1660.40,310.53 1662.40,310.53 1664.40,310.90 1666.40,311.65 1668.40,312.03 1670.40,312.03 1672.40,312.05 1674.40,312.09 1676.40,312.11 1678.40,311.78 1680.40,311.11 1682.40,310.78 1684.40,311.15 1686.40,311.90 1688.40,312.11 1690.40,311.79 1692.40,311.63 1694.40,311.63 1696.40,311.64 1698.40,311.67 1700.40,311.49 1702.40,311.10 1704.40,310.91 1706.40,310.91 1708.40,310.91 1710.40,311.02 1712.40,311.25 1714.40,311.36 1716.40,311.54 1718.40,311.91 1720.40,312.10 1722.40,312.10 1724.40,312.01 1726.40,311.83 1728.40,311.74 1730.40,311.51 1732.40,311.05 1734.40,310.82 1736.40,311.18 1738.40,311.91 1740.40,311.99 1742.40,311.43 1744.40,311.12 1746.40,311.08 1748.40,311.05 1750.40,311.05 1752.40,311.02 1754.40,310.96 1756.40,310.92 1758.40,311.04 1760.40,311.26 1762.40,311.38 1764.40,311.38 1766.40,311.64 1768.40,312.18 1770.40,312.44 1772.40,312.44 1774.40,312.44 1776.40,312.46 1778.40,312.50 1780.40,312.52 1782.40,312.56 1784.40,312.63 1786.40,312.67 1788.40,312.31 1790.40,311.59 1792.40,311.24 1794.40,311.24 1796.40,311.24 1798.40,311.24 1800.40,311.29 1802.40,311.39 1804.40,311.44 1806.40,311.44 1808.40,311.67 1810.40,312.11 1812.40,312.10 1814.40,311.63 1816.40,311.40 1818.40,311.40 1820.40,311.40 1822.40,311.55 1824.40,311.84 1826.40,311.79 1828.40,311.40 1830.40,311.20 1832.40,311.20 1834.40,311.20 1836.40,311.20 1838.40,311.19 1840.40,311.17 1842.40,311.08 1844.40,310.93 1846.40,310.85 1848.40,310.75 1850.40,310.56 1852.40,310.47 1854.40,310.47 1856.40,310.47 1858.40,310.89 1860.40,311.73 1862.40,312.15 1864.40,312.15 1866.40,312.15 1868.40,312.17 1870.40,312.21 1872.40,312.23 1874.40,311.92 1876.40,311.31 1878.40,311.00 1880.40,311.00 1882.40,311.00 1884.40,311.13 1886.30,311.51 1886.30,377.07 1884.40,377.07 1882.40,377.07 1880.40,376.94 1878.40,376.69 1876.40,376.57 1874.40,376.39 1872.40,376.03 1870.40,375.85 1868.40,375.77 1866.40,375.62 1864.40,375.54 1862.40,375.54 1860.40,375.80 1858.40,376.33 1856.40,376.59 1854.40,376.59 1852.40,377.31 1850.40,378.74 1848.40,379.46 1846.40,379.46 1844.40,379.46 1842.40,379.46 1840.40,379.45 1838.40,379.44 1836.40,378.62 1834.40,376.98 1832.40,376.17 1830.40,375.72 1828.40,374.81 1826.40,374.36 1824.40,374.36 1822.40,374.36 1820.40,373.73 1818.40,372.48 1816.40,371.85 1814.40,371.85 1812.40,371.85 1810.40,371.85 1808.40,371.60 1806.40,371.09 1804.40,371.24 1802.40,372.03 1800.40,372.45 1798.40,372.48 1796.40,372.50 1794.40,372.46 1792.40,372.39 1790.40,372.35 1788.40,372.43 1786.40,372.61 1784.40,372.70 1782.40,372.70 1780.40,372.70 1778.40,372.70 1776.40,372.24 1774.40,371.32 1772.40,370.86 1770.40,370.86 1768.40,370.86 1766.40,371.06 1764.40,371.47 1762.40,371.67 1760.40,372.01 1758.40,372.67 1756.40,373.10 1754.40,373.28 1752.40,373.06 1750.40,372.42 1748.40,372.02 1746.40,371.85 1744.40,371.77 1742.40,371.77 1740.40,371.77 1738.40,372.24 1736.40,373.20 1734.40,373.68 1732.40,373.68 1730.40,373.68 1728.40,373.43 1726.40,372.94 1724.40,373.05 1722.40,373.75 1720.40,374.28 1718.40,374.62 1716.40,374.79 1714.40,374.51 1712.40,373.95 1710.40,373.03 1708.40,371.75 1706.40,371.11 1704.40,371.11 1702.40,371.11 1700.40,370.41 1698.40,369.01 1696.40,368.31 1694.40,368.31 1692.40,369.10 1690.40,370.69 1688.40,371.48 1686.40,371.48 1684.40,371.48 1682.40,371.48 1680.40,371.20 1678.40,370.64 1676.40,370.37 1674.40,370.72 1672.40,371.43 1670.40,371.78 1668.40,371.78 1666.40,371.78 1664.40,371.52 1662.40,371.00 1660.40,370.75 1658.40,370.75 1656.40,370.75 1654.40,370.91 1652.40,371.23 1650.40,370.98 1648.40,370.15 1646.40,368.89 1644.40,367.21 1642.40,366.37 1640.40,366.37 1638.40,366.37 1636.40,366.15 1634.40,365.71 1632.40,365.49 1630.40,364.99 1628.40,363.99 1626.40,363.49 1624.40,363.49 1622.40,363.49 1620.40,363.81 1618.40,364.44 1616.40,364.75 1614.40,364.75 1612.40,364.75 1610.40,364.80 1608.40,364.88 1606.40,364.92 1604.40,364.92 1602.40,364.92 1600.40,365.32 1598.40,366.10 1596.40,366.49 1594.40,366.49 1592.40,366.49 1590.40,365.94 1588.40,364.84 1586.40,364.28 1584.40,364.28 1582.40,364.28 1580.40,364.28 1578.40,364.38 1576.40,364.56 1574.40,365.40 1572.40,366.90 1570.40,367.65 1568.40,367.65 1566.40,367.65 1564.40,367.92 1562.40,368.45 1560.40,369.00 1558.40,369.56 1556.40,369.84 1554.40,369.84 1552.40,369.84 1550.40,369.84 1548.40,370.20 1546.40,370.91 1544.40,371.27 1542.40,371.27 1540.40,371.34 1538.40,371.48 1536.40,371.54 1534.40,371.54 1532.40,371.54 1530.40,371.54 1528.40,371.28 1526.40,370.76 1524.40,370.50 1522.40,370.50 1520.40,370.50 1518.40,370.50 1516.40,370.71 1514.40,371.12 1512.40,371.32 1510.40,371.32 1508.40,371.32 1506.40,371.32 1504.40,371.48 1502.40,371.78 1500.40,371.93 1498.40,371.39 1496.40,370.31 1494.40,369.87 1492.40,370.08 1490.40,370.18 1488.40,370.18 1486.40,370.18 1484.40,370.18 1482.40,369.92 1480.40,369.42 1478.40,369.16 1476.40,369.16 1474.40,369.16 1472.40,369.16 1470.40,369.49 1468.40,370.14 1466.40,370.47 1464.40,370.47 1462.40,370.47 1460.40,370.47 1458.40,370.11 1456.40,369.39 1454.40,369.04 1452.40,369.04 1450.40,369.10 1448.40,369.24 1446.40,369.31 1444.40,369.01 1442.40,368.42 1440.40,368.12 1438.40,368.03 1436.40,367.84 1434.40,367.75 1432.40,367.75 1430.40,367.75 1428.40,367.44 1426.40,366.82 1424.40,366.51 1422.40,366.51 1420.40,366.51 1418.40,366.51 1416.40,366.29 1414.40,365.87 1412.40,366.26 1410.40,367.45 1408.40,368.04 1406.40,368.19 1404.40,368.49 1402.40,368.64 1400.40,368.87 1398.40,369.33 1396.40,369.55 1394.40,369.55 1392.40,369.55 1390.40,369.55 1388.40,369.39 1386.40,369.06 1384.40,368.81 1382.40,368.64 1380.40,368.56 1378.40,368.56 1376.40,368.97 1374.40,369.80 1372.40,370.21 1370.40,370.21 1368.40,370.24 1366.40,370.30 1364.40,370.33 1362.40,370.33 1360.40,370.33 1358.40,370.44 1356.40,370.67 1354.40,370.78 1352.40,370.78 1350.40,371.13 1348.40,371.83 1346.40,372.18 1344.40,372.18 1342.40,372.50 1340.40,373.15 1338.40,373.47 1336.40,373.01 1334.40,372.08 1332.40,371.61 1330.40,371.61 1328.40,371.61 1326.40,371.46 1324.40,371.16 1322.40,371.01 1320.40,371.01 1318.40,371.01 1316.40,371.65 1314.40,372.91 1312.40,373.55 1310.40,373.55 1308.40,373.55 1306.40,373.55" fill="#ae6534"/>
<polygon points="1306.40,373.55 1308.40,373.55 1310.40,373.55 1312.40,373.55 1314.40,372.91 1316.40,371.65 1318.40,371.01 1320.40,371.01 1322.40,371.01 1324.40,371.16 1326.40,371.46 1328.40,371.61 1330.40,371.61 1332.40,371.61 1334.40,372.08 1336.40,373.01 1338.40,373.47 1340.40,373.15 1342.40,372.50 1344.40,372.18 1346.40,372.18 1348.40,371.83 1350.40,371.13 1352.40,370.78 1354.40,370.78 1356.40,370.67 1358.40,370.44 1360.40,370.33 1362.40,370.33 1364.40,370.33 1366.40,370.30 1368.40,370.24 1370.40,370.21 1372.40,370.21 1374.40,369.80 1376.40,368.97 1378.40,368.56 1380.40,368.56 1382.40,368.64 1384.40,368.81 1386.40,369.06 1388.40,369.39 1390.40,369.55 1392.40,369.55 1394.40,369.55 1396.40,369.55 1398.40,369.33 1400.40,368.87 1402.40,368.64 1404.40,368.49 1406.40,368.19 1408.40,368.04 1410.40,367.45 1412.40,366.26 1414.40,365.87 1416.40,366.29 1418.40,366.51 1420.40,366.51 1422.40,366.51 1424.40,366.51 1426.40,366.82 1428.40,367.44 1430.40,367.75 1432.40,367.75 1434.40,367.75 1436.40,367.84 1438.40,368.03 1440.40,368.12 1442.40,368.42 1444.40,369.01 1446.40,369.31 1448.40,369.24 1450.40,369.10 1452.40,369.04 1454.40,369.04 1456.40,369.39 1458.40,370.11 1460.40,370.47 1462.40,370.47 1464.40,370.47 1466.40,370.47 1468.40,370.14 1470.40,369.49 1472.40,369.16 1474.40,369.16 1476.40,369.16 1478.40,369.16 1480.40,369.42 1482.40,369.92 1484.40,370.18 1486.40,370.18 1488.40,370.18 1490.40,370.18 1492.40,370.08 1494.40,369.87 1496.40,370.31 1498.40,371.39 1500.40,371.93 1502.40,371.78 1504.40,371.48 1506.40,371.32 1508.40,371.32 1510.40,371.32 1512.40,371.32 1514.40,371.12 1516.40,370.71 1518.40,370.50 1520.40,370.50 1522.40,370.50 1524.40,370.50 1526.40,370.76 1528.40,371.28 1530.40,371.54 1532.40,371.54 1534.40,371.54 1536.40,371.54 1538.40,371.48 1540.40,371.34 1542.40,371.27 1544.40,371.27 1546.40,370.91 1548.40,370.20 1550.40,369.84 1552.40,369.84 1554.40,369.84 1556.40,369.84 1558.40,369.56 1560.40,369.00 1562.40,368.45 1564.40,367.92 1566.40,367.65 1568.40,367.65 1570.40,367.65 1572.40,366.90 1574.40,365.40 1576.40,364.56 1578.40,364.38 1580.40,364.28 1582.40,364.28 1584.40,364.28 1586.40,364.28 1588.40,364.84 1590.40,365.94 1592.40,366.49 1594.40,366.49 1596.40,366.49 1598.40,366.10 1600.40,365.32 1602.40,364.92 1604.40,364.92 1606.40,364.92 1608.40,364.88 1610.40,364.80 1612.40,364.75 1614.40,364.75 1616.40,364.75 1618.40,364.44 1620.40,363.81 1622.40,363.49 1624.40,363.49 1626.40,363.49 1628.40,363.99 1630.40,364.99 1632.40,365.49 1634.40,365.71 1636.40,366.15 1638.40,366.37 1640.40,366.37 1642.40,366.37 1644.40,367.21 1646.40,368.89 1648.40,370.15 1650.40,370.98 1652.40,371.23 1654.40,370.91 1656.40,370.75 1658.40,370.75 1660.40,370.75 1662.40,371.00 1664.40,371.52 1666.40,371.78 1668.40,371.78 1670.40,371.78 1672.40,371.43 1674.40,370.72 1676.40,370.37 1678.40,370.64 1680.40,371.20 1682.40,371.48 1684.40,371.48 1686.40,371.48 1688.40,371.48 1690.40,370.69 1692.40,369.10 1694.40,368.31 1696.40,368.31 1698.40,369.01 1700.40,370.41 1702.40,371.11 1704.40,371.11 1706.40,371.11 1708.40,371.75 1710.40,373.03 1712.40,373.95 1714.40,374.51 1716.40,374.79 1718.40,374.62 1720.40,374.28 1722.40,373.75 1724.40,373.05 1726.40,372.94 1728.40,373.43 1730.40,373.68 1732.40,373.68 1734.40,373.68 1736.40,373.20 1738.40,372.24 1740.40,371.77 1742.40,371.77 1744.40,371.77 1746.40,371.85 1748.40,372.02 1750.40,372.42 1752.40,373.06 1754.40,373.28 1756.40,373.10 1758.40,372.67 1760.40,372.01 1762.40,371.67 1764.40,371.47 1766.40,371.06 1768.40,370.86 1770.40,370.86 1772.40,370.86 1774.40,371.32 1776.40,372.24 1778.40,372.70 1780.40,372.70 1782.40,372.70 1784.40,372.70 1786.40,372.61 1788.40,372.43 1790.40,372.35 1792.40,372.39 1794.40,372.46 1796.40,372.50 1798.40,372.48 1800.40,372.45 1802.40,372.03 1804.40,371.24 1806.40,371.09 1808.40,371.60 1810.40,371.85 1812.40,371.85 1814.40,371.85 1816.40,371.85 1818.40,372.48 1820.40,373.73 1822.40,374.36 1824.40,374.36 1826.40,374.36 1828.40,374.81 1830.40,375.72 1832.40,376.17 1834.40,376.98 1836.40,378.62 1838.40,379.44 1840.40,379.45 1842.40,379.46 1844.40,379.46 1846.40,379.46 1848.40,379.46 1850.40,378.74 1852.40,377.31 1854.40,376.59 1856.40,376.59 1858.40,376.33 1860.40,375.80 1862.40,375.54 1864.40,375.54 1866.40,375.62 1868.40,375.77 1870.40,375.85 1872.40,376.03 1874.40,376.39 1876.40,376.57 1878.40,376.69 1880.40,376.94 1882.40,377.07 1884.40,377.07 1886.30,377.07 1886.30,433.57 1884.40,433.57 1882.40,433.57 1880.40,433.57 1878.40,433.57 1876.40,433.61 1874.40,433.69 1872.40,433.73 1870.40,433.73 1868.40,433.72 1866.40,433.69 1864.40,433.68 1862.40,433.68 1860.40,433.68 1858.40,433.68 1856.40,433.76 1854.40,433.92 1852.40,434.00 1850.40,434.00 1848.40,434.13 1846.40,434.38 1844.40,434.13 1842.40,433.36 1840.40,432.98 1838.40,432.98 1836.40,432.98 1834.40,432.98 1832.40,432.33 1830.40,431.04 1828.40,430.39 1826.40,430.24 1824.40,429.95 1822.40,429.80 1820.40,429.80 1818.40,429.80 1816.40,429.80 1814.40,429.86 1812.40,429.97 1810.40,430.02 1808.40,429.95 1806.40,429.80 1804.40,429.72 1802.40,429.72 1800.40,429.82 1798.40,430.02 1796.40,430.13 1794.40,430.13 1792.40,430.13 1790.40,430.13 1788.40,429.68 1786.40,428.80 1784.40,428.36 1782.40,428.36 1780.40,428.36 1778.40,428.02 1776.40,427.36 1774.40,427.02 1772.40,427.02 1770.40,426.93 1768.40,426.74 1766.40,426.64 1764.40,426.64 1762.40,426.64 1760.40,426.64 1758.40,427.08 1756.40,427.97 1754.40,428.41 1752.40,428.41 1750.40,428.41 1748.40,428.41 1746.40,428.39 1744.40,428.34 1742.40,428.32 1740.40,428.32 1738.40,428.39 1736.40,428.54 1734.40,428.41 1732.40,427.98 1730.40,427.76 1728.40,427.76 1726.40,427.76 1724.40,427.76 1722.40,427.73 1720.40,427.65 1718.40,427.62 1716.40,427.62 1714.40,427.62 1712.40,428.03 1710.40,428.86 1708.40,429.27 1706.40,429.27 1704.40,429.27 1702.40,429.17 1700.40,428.96 1698.40,428.86 1696.40,428.86 1694.40,428.93 1692.40,429.07 1690.40,429.15 1688.40,429.81 1686.40,431.13 1684.40,431.79 1682.40,431.79 1680.40,431.79 1678.40,431.79 1676.40,431.98 1674.40,432.34 1672.40,432.53 1670.40,432.53 1668.40,432.53 1666.40,432.28 1664.40,431.79 1662.40,431.55 1660.40,431.55 1658.40,431.55 1656.40,431.55 1654.40,431.68 1652.40,431.96 1650.40,432.09 1648.40,431.83 1646.40,431.30 1644.40,431.04 1642.40,430.16 1640.40,428.40 1638.40,427.52 1636.40,427.33 1634.40,426.94 1632.40,426.40 1630.40,425.72 1628.40,425.38 1626.40,425.16 1624.40,424.72 1622.40,424.50 1620.40,424.61 1618.40,424.82 1616.40,424.93 1614.40,424.93 1612.40,424.93 1610.40,424.93 1608.40,424.70 1606.40,424.24 1604.40,424.21 1602.40,424.60 1600.40,424.80 1598.40,424.80 1596.40,425.48 1594.40,426.85 1592.40,427.53 1590.40,427.53 1588.40,427.53 1586.40,427.53 1584.40,427.56 1582.40,427.64 1580.40,427.68 1578.40,427.68 1576.40,427.68 1574.40,427.83 1572.40,428.13 1570.40,428.28 1568.40,428.28 1566.40,428.28 1564.40,428.28 1562.40,428.04 1560.40,427.56 1558.40,427.32 1556.40,427.32 1554.40,427.32 1552.40,427.51 1550.40,427.89 1548.40,427.84 1546.40,427.36 1544.40,427.12 1542.40,427.12 1540.40,427.12 1538.40,427.06 1536.40,426.93 1534.40,426.87 1532.40,426.38 1530.40,425.39 1528.40,424.89 1526.40,424.89 1524.40,424.89 1522.40,424.89 1520.40,424.69 1518.40,424.29 1516.40,424.09 1514.40,424.09 1512.40,424.14 1510.40,424.23 1508.40,424.28 1506.40,424.28 1504.40,424.28 1502.40,424.50 1500.40,424.96 1498.40,425.18 1496.40,425.01 1494.40,424.68 1492.40,424.51 1490.40,424.51 1488.40,424.51 1486.40,424.68 1484.40,425.02 1482.40,425.19 1480.40,425.19 1478.40,425.06 1476.40,424.80 1474.40,424.67 1472.40,424.67 1470.40,424.75 1468.40,424.91 1466.40,424.99 1464.40,424.99 1462.40,424.99 1460.40,424.99 1458.40,425.05 1456.40,425.17 1454.40,425.22 1452.40,425.22 1450.40,424.76 1448.40,423.82 1446.40,423.35 1444.40,423.35 1442.40,423.20 1440.40,422.90 1438.40,422.74 1436.40,422.74 1434.40,422.74 1432.40,422.83 1430.40,423.01 1428.40,423.10 1426.40,423.10 1424.40,423.10 1422.40,423.10 1420.40,422.96 1418.40,422.69 1416.40,422.56 1414.40,422.56 1412.40,423.05 1410.40,424.03 1408.40,424.53 1406.40,424.53 1404.40,424.82 1402.40,425.41 1400.40,425.71 1398.40,425.71 1396.40,425.48 1394.40,425.01 1392.40,424.78 1390.40,424.78 1388.40,424.21 1386.40,423.07 1384.40,422.50 1382.40,422.50 1380.40,422.28 1378.40,421.86 1376.40,421.65 1374.40,421.67 1372.40,421.68 1370.40,421.68 1368.40,421.33 1366.40,420.63 1364.40,420.28 1362.40,420.28 1360.40,420.43 1358.40,420.74 1356.40,420.89 1354.40,420.89 1352.40,420.89 1350.40,420.89 1348.40,421.10 1346.40,421.50 1344.40,421.70 1342.40,421.70 1340.40,421.43 1338.40,420.88 1336.40,420.61 1334.40,420.68 1332.40,420.82 1330.40,420.89 1328.40,420.89 1326.40,420.89 1324.40,421.38 1322.40,422.38 1320.40,422.88 1318.40,422.88 1316.40,422.88 1314.40,422.88 1312.40,422.79 1310.40,422.61 1308.40,422.52 1306.40,422.52" fill="#5599a6"/>
<polygon points="1306.40,422.52 1308.40,422.52 1310.40,422.61 1312.40,422.79 1314.40,422.88 1316.40,422.88 1318.40,422.88 1320.40,422.88 1322.40,422.38 1324.40,421.38 1326.40,420.89 1328.40,420.89 1330.40,420.89 1332.40,420.82 1334.40,420.68 1336.40,420.61 1338.40,420.88 1340.40,421.43 1342.40,421.70 1344.40,421.70 1346.40,421.50 1348.40,421.10 1350.40,420.89 1352.40,420.89 1354.40,420.89 1356.40,420.89 1358.40,420.74 1360.40,420.43 1362.40,420.28 1364.40,420.28 1366.40,420.63 1368.40,421.33 1370.40,421.68 1372.40,421.68 1374.40,421.67 1376.40,421.65 1378.40,421.86 1380.40,422.28 1382.40,422.50 1384.40,422.50 1386.40,423.07 1388.40,424.21 1390.40,424.78 1392.40,424.78 1394.40,425.01 1396.40,425.48 1398.40,425.71 1400.40,425.71 1402.40,425.41 1404.40,424.82 1406.40,424.53 1408.40,424.53 1410.40,424.03 1412.40,423.05 1414.40,422.56 1416.40,422.56 1418.40,422.69 1420.40,422.96 1422.40,423.10 1424.40,423.10 1426.40,423.10 1428.40,423.10 1430.40,423.01 1432.40,422.83 1434.40,422.74 1436.40,422.74 1438.40,422.74 1440.40,422.90 1442.40,423.20 1444.40,423.35 1446.40,423.35 1448.40,423.82 1450.40,424.76 1452.40,425.22 1454.40,425.22 1456.40,425.17 1458.40,425.05 1460.40,424.99 1462.40,424.99 1464.40,424.99 1466.40,424.99 1468.40,424.91 1470.40,424.75 1472.40,424.67 1474.40,424.67 1476.40,424.80 1478.40,425.06 1480.40,425.19 1482.40,425.19 1484.40,425.02 1486.40,424.68 1488.40,424.51 1490.40,424.51 1492.40,424.51 1494.40,424.68 1496.40,425.01 1498.40,425.18 1500.40,424.96 1502.40,424.50 1504.40,424.28 1506.40,424.28 1508.40,424.28 1510.40,424.23 1512.40,424.14 1514.40,424.09 1516.40,424.09 1518.40,424.29 1520.40,424.69 1522.40,424.89 1524.40,424.89 1526.40,424.89 1528.40,424.89 1530.40,425.39 1532.40,426.38 1534.40,426.87 1536.40,426.93 1538.40,427.06 1540.40,427.12 1542.40,427.12 1544.40,427.12 1546.40,427.36 1548.40,427.84 1550.40,427.89 1552.40,427.51 1554.40,427.32 1556.40,427.32 1558.40,427.32 1560.40,427.56 1562.40,428.04 1564.40,428.28 1566.40,428.28 1568.40,428.28 1570.40,428.28 1572.40,428.13 1574.40,427.83 1576.40,427.68 1578.40,427.68 1580.40,427.68 1582.40,427.64 1584.40,427.56 1586.40,427.53 1588.40,427.53 1590.40,427.53 1592.40,427.53 1594.40,426.85 1596.40,425.48 1598.40,424.80 1600.40,424.80 1602.40,424.60 1604.40,424.21 1606.40,424.24 1608.40,424.70 1610.40,424.93 1612.40,424.93 1614.40,424.93 1616.40,424.93 1618.40,424.82 1620.40,424.61 1622.40,424.50 1624.40,424.72 1626.40,425.16 1628.40,425.38 1630.40,425.72 1632.40,426.40 1634.40,426.94 1636.40,427.33 1638.40,427.52 1640.40,428.40 1642.40,430.16 1644.40,431.04 1646.40,431.30 1648.40,431.83 1650.40,432.09 1652.40,431.96 1654.40,431.68 1656.40,431.55 1658.40,431.55 1660.40,431.55 1662.40,431.55 1664.40,431.79 1666.40,432.28 1668.40,432.53 1670.40,432.53 1672.40,432.53 1674.40,432.34 1676.40,431.98 1678.40,431.79 1680.40,431.79 1682.40,431.79 1684.40,431.79 1686.40,431.13 1688.40,429.81 1690.40,429.15 1692.40,429.07 1694.40,428.93 1696.40,428.86 1698.40,428.86 1700.40,428.96 1702.40,429.17 1704.40,429.27 1706.40,429.27 1708.40,429.27 1710.40,428.86 1712.40,428.03 1714.40,427.62 1716.40,427.62 1718.40,427.62 1720.40,427.65 1722.40,427.73 1724.40,427.76 1726.40,427.76 1728.40,427.76 1730.40,427.76 1732.40,427.98 1734.40,428.41 1736.40,428.54 1738.40,428.39 1740.40,428.32 1742.40,428.32 1744.40,428.34 1746.40,428.39 1748.40,428.41 1750.40,428.41 1752.40,428.41 1754.40,428.41 1756.40,427.97 1758.40,427.08 1760.40,426.64 1762.40,426.64 1764.40,426.64 1766.40,426.64 1768.40,426.74 1770.40,426.93 1772.40,427.02 1774.40,427.02 1776.40,427.36 1778.40,428.02 1780.40,428.36 1782.40,428.36 1784.40,428.36 1786.40,428.80 1788.40,429.68 1790.40,430.13 1792.40,430.13 1794.40,430.13 1796.40,430.13 1798.40,430.02 1800.40,429.82 1802.40,429.72 1804.40,429.72 1806.40,429.80 1808.40,429.95 1810.40,430.02 1812.40,429.97 1814.40,429.86 1816.40,429.80 1818.40,429.80 1820.40,429.80 1822.40,429.80 1824.40,429.95 1826.40,430.24 1828.40,430.39 1830.40,431.04 1832.40,432.33 1834.40,432.98 1836.40,432.98 1838.40,432.98 1840.40,432.98 1842.40,433.36 1844.40,434.13 1846.40,434.38 1848.40,434.13 1850.40,434.00 1852.40,434.00 1854.40,433.92 1856.40,433.76 1858.40,433.68 1860.40,433.68 1862.40,433.68 1864.40,433.68 1866.40,433.69 1868.40,433.72 1870.40,433.73 1872.40,433.73 1874.40,433.69 1876.40,433.61 1878.40,433.57 1880.40,433.57 1882.40,433.57 1884.40,433.57 1886.30,433.57 1886.30,436.96 1884.40,436.96 1882.40,436.87 1880.40,436.69 1878.40,436.60 1876.40,436.60 1874.40,436.70 1872.40,436.91 1870.40,437.01 1868.40,437.01 1866.40,437.01 1864.40,436.84 1862.40,436.49 1860.40,436.32 1858.40,436.32 1856.40,436.32 1854.40,436.32 1852.40,436.62 1850.40,437.24 1848.40,437.55 1846.40,437.55 1844.40,437.55 1842.40,437.55 1840.40,437.25 1838.40,436.63 1836.40,436.33 1834.40,436.33 1832.40,436.53 1830.40,436.94 1828.40,437.26 1826.40,437.50 1824.40,437.61 1822.40,437.61 1820.40,437.61 1818.40,437.25 1816.40,436.51 1814.40,436.15 1812.40,436.15 1810.40,436.15 1808.40,436.13 1806.40,436.10 1804.40,436.09 1802.40,436.09 1800.40,436.09 1798.40,436.09 1796.40,436.15 1794.40,436.28 1792.40,436.34 1790.40,436.36 1788.40,436.39 1786.40,436.40 1784.40,436.40 1782.40,436.69 1780.40,437.26 1778.40,437.35 1776.40,436.97 1774.40,436.77 1772.40,436.77 1770.40,436.77 1768.40,436.77 1766.40,436.76 1764.40,436.75 1762.40,436.75 1760.40,436.71 1758.40,436.64 1756.40,436.61 1754.40,436.61 1752.40,436.61 1750.40,436.61 1748.40,436.28 1746.40,435.63 1744.40,435.20 1742.40,434.98 1740.40,434.87 1738.40,434.87 1736.40,434.87 1734.40,434.87 1732.40,434.96 1730.40,435.14 1728.40,435.07 1726.40,434.74 1724.40,434.58 1722.40,434.69 1720.40,434.90 1718.40,435.01 1716.40,435.01 1714.40,435.12 1712.40,435.35 1710.40,435.50 1708.40,435.58 1706.40,435.61 1704.40,435.61 1702.40,435.60 1700.40,435.56 1698.40,435.54 1696.40,435.54 1694.40,435.54 1692.40,435.54 1690.40,435.48 1688.40,435.38 1686.40,435.33 1684.40,435.59 1682.40,436.12 1680.40,436.39 1678.40,436.39 1676.40,436.39 1674.40,436.39 1672.40,436.29 1670.40,436.10 1668.40,435.81 1666.40,435.44 1664.40,435.38 1662.40,435.61 1660.40,435.73 1658.40,435.73 1656.40,435.65 1654.40,435.49 1652.40,435.35 1650.40,435.25 1648.40,435.20 1646.40,435.20 1644.40,435.18 1642.40,435.13 1640.40,435.11 1638.40,435.11 1636.40,434.45 1634.40,433.15 1632.40,432.50 1630.40,432.50 1628.40,432.50 1626.40,432.61 1624.40,432.84 1622.40,432.96 1620.40,432.65 1618.40,432.03 1616.40,431.73 1614.40,431.90 1612.40,432.25 1610.40,432.42 1608.40,431.95 1606.40,431.00 1604.40,430.53 1602.40,430.53 1600.40,430.53 1598.40,430.58 1596.40,430.68 1594.40,430.74 1592.40,430.74 1590.40,430.74 1588.40,430.74 1586.40,430.53 1584.40,430.11 1582.40,429.90 1580.40,429.90 1578.40,429.90 1576.40,429.77 1574.40,429.50 1572.40,429.32 1570.40,429.23 1568.40,429.19 1566.40,429.19 1564.40,429.57 1562.40,430.35 1560.40,430.55 1558.40,430.19 1556.40,430.00 1554.40,429.91 1552.40,429.72 1550.40,429.63 1548.40,429.57 1546.40,429.47 1544.40,429.41 1542.40,429.41 1540.40,429.41 1538.40,429.74 1536.40,430.40 1534.40,430.72 1532.40,430.72 1530.40,430.45 1528.40,429.92 1526.40,429.65 1524.40,429.65 1522.40,429.68 1520.40,429.74 1518.40,429.77 1516.40,429.77 1514.40,429.77 1512.40,429.77 1510.40,429.89 1508.40,430.12 1506.40,430.23 1504.40,430.23 1502.40,430.23 1500.40,430.23 1498.40,430.24 1496.40,430.26 1494.40,430.27 1492.40,430.27 1490.40,430.20 1488.40,430.06 1486.40,429.99 1484.40,430.04 1482.40,430.12 1480.40,430.17 1478.40,430.17 1476.40,429.87 1474.40,429.28 1472.40,428.98 1470.40,428.98 1468.40,428.98 1466.40,429.31 1464.40,429.99 1462.40,430.33 1460.40,430.17 1458.40,429.84 1456.40,429.68 1454.40,429.78 1452.40,429.97 1450.40,430.06 1448.40,429.81 1446.40,429.31 1444.40,429.06 1442.40,429.06 1440.40,429.02 1438.40,428.94 1436.40,428.89 1434.40,429.21 1432.40,429.86 1430.40,430.18 1428.40,430.27 1426.40,430.44 1424.40,430.33 1422.40,429.94 1420.40,429.74 1418.40,430.05 1416.40,430.66 1414.40,430.97 1412.40,430.97 1410.40,430.97 1408.40,430.97 1406.40,431.16 1404.40,431.54 1402.40,431.33 1400.40,430.51 1398.40,430.10 1396.40,430.10 1394.40,430.10 1392.40,430.07 1390.40,430.01 1388.40,429.98 1386.40,429.80 1384.40,429.44 1382.40,429.25 1380.40,429.07 1378.40,428.70 1376.40,428.51 1374.40,428.51 1372.40,428.51 1370.40,428.51 1368.40,428.33 1366.40,427.98 1364.40,427.80 1362.40,427.80 1360.40,427.80 1358.40,428.10 1356.40,428.68 1354.40,428.98 1352.40,428.98 1350.40,428.98 1348.40,428.72 1346.40,428.21 1344.40,427.96 1342.40,427.88 1340.40,427.73 1338.40,427.65 1336.40,427.94 1334.40,428.52 1332.40,428.81 1330.40,428.81 1328.40,428.81 1326.40,428.44 1324.40,427.69 1322.40,427.31 1320.40,427.31 1318.40,427.31 1316.40,427.31 1314.40,427.36 1312.40,427.45 1310.40,427.50 1308.40,427.50 1306.40,427.50" fill="#c3922b"/>
<polygon points="1306.40,427.50 1308.40,427.50 1310.40,427.50 1312.40,427.45 1314.40,427.36 1316.40,427.31 1318.40,427.31 1320.40,427.31 1322.40,427.31 1324.40,427.69 1326.40,428.44 1328.40,428.81 1330.40,428.81 1332.40,428.81 1334.40,428.52 1336.40,427.94 1338.40,427.65 1340.40,427.73 1342.40,427.88 1344.40,427.96 1346.40,428.21 1348.40,428.72 1350.40,428.98 1352.40,428.98 1354.40,428.98 1356.40,428.68 1358.40,428.10 1360.40,427.80 1362.40,427.80 1364.40,427.80 1366.40,427.98 1368.40,428.33 1370.40,428.51 1372.40,428.51 1374.40,428.51 1376.40,428.51 1378.40,428.70 1380.40,429.07 1382.40,429.25 1384.40,429.44 1386.40,429.80 1388.40,429.98 1390.40,430.01 1392.40,430.07 1394.40,430.10 1396.40,430.10 1398.40,430.10 1400.40,430.51 1402.40,431.33 1404.40,431.54 1406.40,431.16 1408.40,430.97 1410.40,430.97 1412.40,430.97 1414.40,430.97 1416.40,430.66 1418.40,430.05 1420.40,429.74 1422.40,429.94 1424.40,430.33 1426.40,430.44 1428.40,430.27 1430.40,430.18 1432.40,429.86 1434.40,429.21 1436.40,428.89 1438.40,428.94 1440.40,429.02 1442.40,429.06 1444.40,429.06 1446.40,429.31 1448.40,429.81 1450.40,430.06 1452.40,429.97 1454.40,429.78 1456.40,429.68 1458.40,429.84 1460.40,430.17 1462.40,430.33 1464.40,429.99 1466.40,429.31 1468.40,428.98 1470.40,428.98 1472.40,428.98 1474.40,429.28 1476.40,429.87 1478.40,430.17 1480.40,430.17 1482.40,430.12 1484.40,430.04 1486.40,429.99 1488.40,430.06 1490.40,430.20 1492.40,430.27 1494.40,430.27 1496.40,430.26 1498.40,430.24 1500.40,430.23 1502.40,430.23 1504.40,430.23 1506.40,430.23 1508.40,430.12 1510.40,429.89 1512.40,429.77 1514.40,429.77 1516.40,429.77 1518.40,429.77 1520.40,429.74 1522.40,429.68 1524.40,429.65 1526.40,429.65 1528.40,429.92 1530.40,430.45 1532.40,430.72 1534.40,430.72 1536.40,430.40 1538.40,429.74 1540.40,429.41 1542.40,429.41 1544.40,429.41 1546.40,429.47 1548.40,429.57 1550.40,429.63 1552.40,429.72 1554.40,429.91 1556.40,430.00 1558.40,430.19 1560.40,430.55 1562.40,430.35 1564.40,429.57 1566.40,429.19 1568.40,429.19 1570.40,429.23 1572.40,429.32 1574.40,429.50 1576.40,429.77 1578.40,429.90 1580.40,429.90 1582.40,429.90 1584.40,430.11 1586.40,430.53 1588.40,430.74 1590.40,430.74 1592.40,430.74 1594.40,430.74 1596.40,430.68 1598.40,430.58 1600.40,430.53 1602.40,430.53 1604.40,430.53 1606.40,431.00 1608.40,431.95 1610.40,432.42 1612.40,432.25 1614.40,431.90 1616.40,431.73 1618.40,432.03 1620.40,432.65 1622.40,432.96 1624.40,432.84 1626.40,432.61 1628.40,432.50 1630.40,432.50 1632.40,432.50 1634.40,433.15 1636.40,434.45 1638.40,435.11 1640.40,435.11 1642.40,435.13 1644.40,435.18 1646.40,435.20 1648.40,435.20 1650.40,435.25 1652.40,435.35 1654.40,435.49 1656.40,435.65 1658.40,435.73 1660.40,435.73 1662.40,435.61 1664.40,435.38 1666.40,435.44 1668.40,435.81 1670.40,436.10 1672.40,436.29 1674.40,436.39 1676.40,436.39 1678.40,436.39 1680.40,436.39 1682.40,436.12 1684.40,435.59 1686.40,435.33 1688.40,435.38 1690.40,435.48 1692.40,435.54 1694.40,435.54 1696.40,435.54 1698.40,435.54 1700.40,435.56 1702.40,435.60 1704.40,435.61 1706.40,435.61 1708.40,435.58 1710.40,435.50 1712.40,435.35 1714.40,435.12 1716.40,435.01 1718.40,435.01 1720.40,434.90 1722.40,434.69 1724.40,434.58 1726.40,434.74 1728.40,435.07 1730.40,435.14 1732.40,434.96 1734.40,434.87 1736.40,434.87 1738.40,434.87 1740.40,434.87 1742.40,434.98 1744.40,435.20 1746.40,435.63 1748.40,436.28 1750.40,436.61 1752.40,436.61 1754.40,436.61 1756.40,436.61 1758.40,436.64 1760.40,436.71 1762.40,436.75 1764.40,436.75 1766.40,436.76 1768.40,436.77 1770.40,436.77 1772.40,436.77 1774.40,436.77 1776.40,436.97 1778.40,437.35 1780.40,437.26 1782.40,436.69 1784.40,436.40 1786.40,436.40 1788.40,436.39 1790.40,436.36 1792.40,436.34 1794.40,436.28 1796.40,436.15 1798.40,436.09 1800.40,436.09 1802.40,436.09 1804.40,436.09 1806.40,436.10 1808.40,436.13 1810.40,436.15 1812.40,436.15 1814.40,436.15 1816.40,436.51 1818.40,437.25 1820.40,437.61 1822.40,437.61 1824.40,437.61 1826.40,437.50 1828.40,437.26 1830.40,436.94 1832.40,436.53 1834.40,436.33 1836.40,436.33 1838.40,436.63 1840.40,437.25 1842.40,437.55 1844.40,437.55 1846.40,437.55 1848.40,437.55 1850.40,437.24 1852.40,436.62 1854.40,436.32 1856.40,436.32 1858.40,436.32 1860.40,436.32 1862.40,436.49 1864.40,436.84 1866.40,437.01 1868.40,437.01 1870.40,437.01 1872.40,436.91 1874.40,436.70 1876.40,436.60 1878.40,436.60 1880.40,436.69 1882.40,436.87 1884.40,436.96 1886.30,436.96 1886.30,450.50 1884.40,450.50 1882.40,450.50 1880.40,450.50 1878.40,450.50 1876.40,450.50 1874.40,450.50 1872.40,450.50 1870.40,450.50 1868.40,450.50 1866.40,450.50 1864.40,450.50 1862.40,450.50 1860.40,450.50 1858.40,450.50 1856.40,450.50 1854.40,450.50 1852.40,450.50 1850.40,450.50 1848.40,450.50 1846.40,450.50 1844.40,450.50 1842.40,450.50 1840.40,450.50 1838.40,450.50 1836.40,450.50 1834.40,450.50 1832.40,450.50 1830.40,450.50 1828.40,450.50 1826.40,450.50 1824.40,450.50 1822.40,450.50 1820.40,450.50 1818.40,450.50 1816.40,450.50 1814.40,450.50 1812.40,450.50 1810.40,450.50 1808.40,450.50 1806.40,450.50 1804.40,450.50 1802.40,450.50 1800.40,450.50 1798.40,450.50 1796.40,450.50 1794.40,450.50 1792.40,450.50 1790.40,450.50 1788.40,450.50 1786.40,450.50 1784.40,450.50 1782.40,450.50 1780.40,450.50 1778.40,450.50 1776.40,450.50 1774.40,450.50 1772.40,450.50 1770.40,450.50 1768.40,450.50 1766.40,450.50 1764.40,450.50 1762.40,450.50 1760.40,450.50 1758.40,450.50 1756.40,450.50 1754.40,450.50 1752.40,450.50 1750.40,450.50 1748.40,450.50 1746.40,450.50 1744.40,450.50 1742.40,450.50 1740.40,450.50 1738.40,450.50 1736.40,450.50 1734.40,450.50 1732.40,450.50 1730.40,450.50 1728.40,450.50 1726.40,450.50 1724.40,450.50 1722.40,450.50 1720.40,450.50 1718.40,450.50 1716.40,450.50 1714.40,450.50 1712.40,450.50 1710.40,450.50 1708.40,450.50 1706.40,450.50 1704.40,450.50 1702.40,450.50 1700.40,450.50 1698.40,450.50 1696.40,450.50 1694.40,450.50 1692.40,450.50 1690.40,450.50 1688.40,450.50 1686.40,450.50 1684.40,450.50 1682.40,450.50 1680.40,450.50 1678.40,450.50 1676.40,450.50 1674.40,450.50 1672.40,450.50 1670.40,450.50 1668.40,450.50 1666.40,450.50 1664.40,450.50 1662.40,450.50 1660.40,450.50 1658.40,450.50 1656.40,450.50 1654.40,450.50 1652.40,450.50 1650.40,450.50 1648.40,450.50 1646.40,450.50 1644.40,450.50 1642.40,450.50 1640.40,450.50 1638.40,450.50 1636.40,450.50 1634.40,450.50 1632.40,450.50 1630.40,450.50 1628.40,450.50 1626.40,450.50 1624.40,450.50 1622.40,450.50 1620.40,450.50 1618.40,450.50 1616.40,450.50 1614.40,450.50 1612.40,450.50 1610.40,450.50 1608.40,450.50 1606.40,450.50 1604.40,450.50 1602.40,450.50 1600.40,450.50 1598.40,450.50 1596.40,450.50 1594.40,450.50 1592.40,450.50 1590.40,450.50 1588.40,450.50 1586.40,450.50 1584.40,450.50 1582.40,450.50 1580.40,450.50 1578.40,450.50 1576.40,450.50 1574.40,450.50 1572.40,450.50 1570.40,450.50 1568.40,450.50 1566.40,450.50 1564.40,450.50 1562.40,450.50 1560.40,450.50 1558.40,450.50 1556.40,450.50 1554.40,450.50 1552.40,450.50 1550.40,450.50 1548.40,450.50 1546.40,450.50 1544.40,450.50 1542.40,450.50 1540.40,450.50 1538.40,450.50 1536.40,450.50 1534.40,450.50 1532.40,450.50 1530.40,450.50 1528.40,450.50 1526.40,450.50 1524.40,450.50 1522.40,450.50 1520.40,450.50 1518.40,450.50 1516.40,450.50 1514.40,450.50 1512.40,450.50 1510.40,450.50 1508.40,450.50 1506.40,450.50 1504.40,450.50 1502.40,450.50 1500.40,450.50 1498.40,450.50 1496.40,450.50 1494.40,450.50 1492.40,450.50 1490.40,450.50 1488.40,450.50 1486.40,450.50 1484.40,450.50 1482.40,450.50 1480.40,450.50 1478.40,450.50 1476.40,450.50 1474.40,450.50 1472.40,450.50 1470.40,450.50 1468.40,450.50 1466.40,450.50 1464.40,450.50 1462.40,450.50 1460.40,450.50 1458.40,450.50 1456.40,450.50 1454.40,450.50 1452.40,450.50 1450.40,450.50 1448.40,450.50 1446.40,450.50 1444.40,450.50 1442.40,450.50 1440.40,450.50 1438.40,450.50 1436.40,450.50 1434.40,450.50 1432.40,450.50 1430.40,450.50 1428.40,450.50 1426.40,450.50 1424.40,450.50 1422.40,450.50 1420.40,450.50 1418.40,450.50 1416.40,450.50 1414.40,450.50 1412.40,450.50 1410.40,450.50 1408.40,450.50 1406.40,450.50 1404.40,450.50 1402.40,450.50 1400.40,450.50 1398.40,450.50 1396.40,450.50 1394.40,450.50 1392.40,450.50 1390.40,450.50 1388.40,450.50 1386.40,450.50 1384.40,450.50 1382.40,450.50 1380.40,450.50 1378.40,450.50 1376.40,450.50 1374.40,450.50 1372.40,450.50 1370.40,450.50 1368.40,450.50 1366.40,450.50 1364.40,450.50 1362.40,450.50 1360.40,450.50 1358.40,450.50 1356.40,450.50 1354.40,450.50 1352.40,450.50 1350.40,450.50 1348.40,450.50 1346.40,450.50 1344.40,450.50 1342.40,450.50 1340.40,450.50 1338.40,450.50 1336.40,450.50 1334.40,450.50 1332.40,450.50 1330.40,450.50 1328.40,450.50 1326.40,450.50 1324.40,450.50 1322.40,450.50 1320.40,450.50 1318.40,450.50 1316.40,450.50 1314.40,450.50 1312.40,450.50 1310.40,450.50 1308.40,450.50 1306.40,450.50" fill="#638c52"/>
<polyline points="1306.40,427.50 1308.40,427.50 1310.40,427.50 1312.40,427.45 1314.40,427.36 1316.40,427.31 1318.40,427.31 1320.40,427.31 1322.40,427.31 1324.40,427.69 1326.40,428.44 1328.40,428.81 1330.40,428.81 1332.40,428.81 1334.40,428.52 1336.40,427.94 1338.40,427.65 1340.40,427.73 1342.40,427.88 1344.40,427.96 1346.40,428.21 1348.40,428.72 1350.40,428.98 1352.40,428.98 1354.40,428.98 1356.40,428.68 1358.40,428.10 1360.40,427.80 1362.40,427.80 1364.40,427.80 1366.40,427.98 1368.40,428.33 1370.40,428.51 1372.40,428.51 1374.40,428.51 1376.40,428.51 1378.40,428.70 1380.40,429.07 1382.40,429.25 1384.40,429.44 1386.40,429.80 1388.40,429.98 1390.40,430.01 1392.40,430.07 1394.40,430.10 1396.40,430.10 1398.40,430.10 1400.40,430.51 1402.40,431.33 1404.40,431.54 1406.40,431.16 1408.40,430.97 1410.40,430.97 1412.40,430.97 1414.40,430.97 1416.40,430.66 1418.40,430.05 1420.40,429.74 1422.40,429.94 1424.40,430.33 1426.40,430.44 1428.40,430.27 1430.40,430.18 1432.40,429.86 1434.40,429.21 1436.40,428.89 1438.40,428.94 1440.40,429.02 1442.40,429.06 1444.40,429.06 1446.40,429.31 1448.40,429.81 1450.40,430.06 1452.40,429.97 1454.40,429.78 1456.40,429.68 1458.40,429.84 1460.40,430.17 1462.40,430.33 1464.40,429.99 1466.40,429.31 1468.40,428.98 1470.40,428.98 1472.40,428.98 1474.40,429.28 1476.40,429.87 1478.40,430.17 1480.40,430.17 1482.40,430.12 1484.40,430.04 1486.40,429.99 1488.40,430.06 1490.40,430.20 1492.40,430.27 1494.40,430.27 1496.40,430.26 1498.40,430.24 1500.40,430.23 1502.40,430.23 1504.40,430.23 1506.40,430.23 1508.40,430.12 1510.40,429.89 1512.40,429.77 1514.40,429.77 1516.40,429.77 1518.40,429.77 1520.40,429.74 1522.40,429.68 1524.40,429.65 1526.40,429.65 1528.40,429.92 1530.40,430.45 1532.40,430.72 1534.40,430.72 1536.40,430.40 1538.40,429.74 1540.40,429.41 1542.40,429.41 1544.40,429.41 1546.40,429.47 1548.40,429.57 1550.40,429.63 1552.40,429.72 1554.40,429.91 1556.40,430.00 1558.40,430.19 1560.40,430.55 1562.40,430.35 1564.40,429.57 1566.40,429.19 1568.40,429.19 1570.40,429.23 1572.40,429.32 1574.40,429.50 1576.40,429.77 1578.40,429.90 1580.40,429.90 1582.40,429.90 1584.40,430.11 1586.40,430.53 1588.40,430.74 1590.40,430.74 1592.40,430.74 1594.40,430.74 1596.40,430.68 1598.40,430.58 1600.40,430.53 1602.40,430.53 1604.40,430.53 1606.40,431.00 1608.40,431.95 1610.40,432.42 1612.40,432.25 1614.40,431.90 1616.40,431.73 1618.40,432.03 1620.40,432.65 1622.40,432.96 1624.40,432.84 1626.40,432.61 1628.40,432.50 1630.40,432.50 1632.40,432.50 1634.40,433.15 1636.40,434.45 1638.40,435.11 1640.40,435.11 1642.40,435.13 1644.40,435.18 1646.40,435.20 1648.40,435.20 1650.40,435.25 1652.40,435.35 1654.40,435.49 1656.40,435.65 1658.40,435.73 1660.40,435.73 1662.40,435.61 1664.40,435.38 1666.40,435.44 1668.40,435.81 1670.40,436.10 1672.40,436.29 1674.40,436.39 1676.40,436.39 1678.40,436.39 1680.40,436.39 1682.40,436.12 1684.40,435.59 1686.40,435.33 1688.40,435.38 1690.40,435.48 1692.40,435.54 1694.40,435.54 1696.40,435.54 1698.40,435.54 1700.40,435.56 1702.40,435.60 1704.40,435.61 1706.40,435.61 1708.40,435.58 1710.40,435.50 1712.40,435.35 1714.40,435.12 1716.40,435.01 1718.40,435.01 1720.40,434.90 1722.40,434.69 1724.40,434.58 1726.40,434.74 1728.40,435.07 1730.40,435.14 1732.40,434.96 1734.40,434.87 1736.40,434.87 1738.40,434.87 1740.40,434.87 1742.40,434.98 1744.40,435.20 1746.40,435.63 1748.40,436.28 1750.40,436.61 1752.40,436.61 1754.40,436.61 1756.40,436.61 1758.40,436.64 1760.40,436.71 1762.40,436.75 1764.40,436.75 1766.40,436.76 1768.40,436.77 1770.40,436.77 1772.40,436.77 1774.40,436.77 1776.40,436.97 1778.40,437.35 1780.40,437.26 1782.40,436.69 1784.40,436.40 1786.40,436.40 1788.40,436.39 1790.40,436.36 1792.40,436.34 1794.40,436.28 1796.40,436.15 1798.40,436.09 1800.40,436.09 1802.40,436.09 1804.40,436.09 1806.40,436.10 1808.40,436.13 1810.40,436.15 1812.40,436.15 1814.40,436.15 1816.40,436.51 1818.40,437.25 1820.40,437.61 1822.40,437.61 1824.40,437.61 1826.40,437.50 1828.40,437.26 1830.40,436.94 1832.40,436.53 1834.40,436.33 1836.40,436.33 1838.40,436.63 1840.40,437.25 1842.40,437.55 1844.40,437.55 1846.40,437.55 1848.40,437.55 1850.40,437.24 1852.40,436.62 1854.40,436.32 1856.40,436.32 1858.40,436.32 1860.40,436.32 1862.40,436.49 1864.40,436.84 1866.40,437.01 1868.40,437.01 1870.40,437.01 1872.40,436.91 1874.40,436.70 1876.40,436.60 1878.40,436.60 1880.40,436.69 1882.40,436.87 1884.40,436.96 1886.30,436.96" fill="none" stroke="#7aa868" stroke-width="0.8" opacity="0.7"/>
<polyline points="1306.40,422.52 1308.40,422.52 1310.40,422.61 1312.40,422.79 1314.40,422.88 1316.40,422.88 1318.40,422.88 1320.40,422.88 1322.40,422.38 1324.40,421.38 1326.40,420.89 1328.40,420.89 1330.40,420.89 1332.40,420.82 1334.40,420.68 1336.40,420.61 1338.40,420.88 1340.40,421.43 1342.40,421.70 1344.40,421.70 1346.40,421.50 1348.40,421.10 1350.40,420.89 1352.40,420.89 1354.40,420.89 1356.40,420.89 1358.40,420.74 1360.40,420.43 1362.40,420.28 1364.40,420.28 1366.40,420.63 1368.40,421.33 1370.40,421.68 1372.40,421.68 1374.40,421.67 1376.40,421.65 1378.40,421.86 1380.40,422.28 1382.40,422.50 1384.40,422.50 1386.40,423.07 1388.40,424.21 1390.40,424.78 1392.40,424.78 1394.40,425.01 1396.40,425.48 1398.40,425.71 1400.40,425.71 1402.40,425.41 1404.40,424.82 1406.40,424.53 1408.40,424.53 1410.40,424.03 1412.40,423.05 1414.40,422.56 1416.40,422.56 1418.40,422.69 1420.40,422.96 1422.40,423.10 1424.40,423.10 1426.40,423.10 1428.40,423.10 1430.40,423.01 1432.40,422.83 1434.40,422.74 1436.40,422.74 1438.40,422.74 1440.40,422.90 1442.40,423.20 1444.40,423.35 1446.40,423.35 1448.40,423.82 1450.40,424.76 1452.40,425.22 1454.40,425.22 1456.40,425.17 1458.40,425.05 1460.40,424.99 1462.40,424.99 1464.40,424.99 1466.40,424.99 1468.40,424.91 1470.40,424.75 1472.40,424.67 1474.40,424.67 1476.40,424.80 1478.40,425.06 1480.40,425.19 1482.40,425.19 1484.40,425.02 1486.40,424.68 1488.40,424.51 1490.40,424.51 1492.40,424.51 1494.40,424.68 1496.40,425.01 1498.40,425.18 1500.40,424.96 1502.40,424.50 1504.40,424.28 1506.40,424.28 1508.40,424.28 1510.40,424.23 1512.40,424.14 1514.40,424.09 1516.40,424.09 1518.40,424.29 1520.40,424.69 1522.40,424.89 1524.40,424.89 1526.40,424.89 1528.40,424.89 1530.40,425.39 1532.40,426.38 1534.40,426.87 1536.40,426.93 1538.40,427.06 1540.40,427.12 1542.40,427.12 1544.40,427.12 1546.40,427.36 1548.40,427.84 1550.40,427.89 1552.40,427.51 1554.40,427.32 1556.40,427.32 1558.40,427.32 1560.40,427.56 1562.40,428.04 1564.40,428.28 1566.40,428.28 1568.40,428.28 1570.40,428.28 1572.40,428.13 1574.40,427.83 1576.40,427.68 1578.40,427.68 1580.40,427.68 1582.40,427.64 1584.40,427.56 1586.40,427.53 1588.40,427.53 1590.40,427.53 1592.40,427.53 1594.40,426.85 1596.40,425.48 1598.40,424.80 1600.40,424.80 1602.40,424.60 1604.40,424.21 1606.40,424.24 1608.40,424.70 1610.40,424.93 1612.40,424.93 1614.40,424.93 1616.40,424.93 1618.40,424.82 1620.40,424.61 1622.40,424.50 1624.40,424.72 1626.40,425.16 1628.40,425.38 1630.40,425.72 1632.40,426.40 1634.40,426.94 1636.40,427.33 1638.40,427.52 1640.40,428.40 1642.40,430.16 1644.40,431.04 1646.40,431.30 1648.40,431.83 1650.40,432.09 1652.40,431.96 1654.40,431.68 1656.40,431.55 1658.40,431.55 1660.40,431.55 1662.40,431.55 1664.40,431.79 1666.40,432.28 1668.40,432.53 1670.40,432.53 1672.40,432.53 1674.40,432.34 1676.40,431.98 1678.40,431.79 1680.40,431.79 1682.40,431.79 1684.40,431.79 1686.40,431.13 1688.40,429.81 1690.40,429.15 1692.40,429.07 1694.40,428.93 1696.40,428.86 1698.40,428.86 1700.40,428.96 1702.40,429.17 1704.40,429.27 1706.40,429.27 1708.40,429.27 1710.40,428.86 1712.40,428.03 1714.40,427.62 1716.40,427.62 1718.40,427.62 1720.40,427.65 1722.40,427.73 1724.40,427.76 1726.40,427.76 1728.40,427.76 1730.40,427.76 1732.40,427.98 1734.40,428.41 1736.40,428.54 1738.40,428.39 1740.40,428.32 1742.40,428.32 1744.40,428.34 1746.40,428.39 1748.40,428.41 1750.40,428.41 1752.40,428.41 1754.40,428.41 1756.40,427.97 1758.40,427.08 1760.40,426.64 1762.40,426.64 1764.40,426.64 1766.40,426.64 1768.40,426.74 1770.40,426.93 1772.40,427.02 1774.40,427.02 1776.40,427.36 1778.40,428.02 1780.40,428.36 1782.40,428.36 1784.40,428.36 1786.40,428.80 1788.40,429.68 1790.40,430.13 1792.40,430.13 1794.40,430.13 1796.40,430.13 1798.40,430.02 1800.40,429.82 1802.40,429.72 1804.40,429.72 1806.40,429.80 1808.40,429.95 1810.40,430.02 1812.40,429.97 1814.40,429.86 1816.40,429.80 1818.40,429.80 1820.40,429.80 1822.40,429.80 1824.40,429.95 1826.40,430.24 1828.40,430.39 1830.40,431.04 1832.40,432.33 1834.40,432.98 1836.40,432.98 1838.40,432.98 1840.40,432.98 1842.40,433.36 1844.40,434.13 1846.40,434.38 1848.40,434.13 1850.40,434.00 1852.40,434.00 1854.40,433.92 1856.40,433.76 1858.40,433.68 1860.40,433.68 1862.40,433.68 1864.40,433.68 1866.40,433.69 1868.40,433.72 1870.40,433.73 1872.40,433.73 1874.40,433.69 1876.40,433.61 1878.40,433.57 1880.40,433.57 1882.40,433.57 1884.40,433.57 1886.30,433.57" fill="none" stroke="#d8a636" stroke-width="0.8" opacity="0.7"/>
<polyline points="1306.40,373.55 1308.40,373.55 1310.40,373.55 1312.40,373.55 1314.40,372.91 1316.40,371.65 1318.40,371.01 1320.40,371.01 1322.40,371.01 1324.40,371.16 1326.40,371.46 1328.40,371.61 1330.40,371.61 1332.40,371.61 1334.40,372.08 1336.40,373.01 1338.40,373.47 1340.40,373.15 1342.40,372.50 1344.40,372.18 1346.40,372.18 1348.40,371.83 1350.40,371.13 1352.40,370.78 1354.40,370.78 1356.40,370.67 1358.40,370.44 1360.40,370.33 1362.40,370.33 1364.40,370.33 1366.40,370.30 1368.40,370.24 1370.40,370.21 1372.40,370.21 1374.40,369.80 1376.40,368.97 1378.40,368.56 1380.40,368.56 1382.40,368.64 1384.40,368.81 1386.40,369.06 1388.40,369.39 1390.40,369.55 1392.40,369.55 1394.40,369.55 1396.40,369.55 1398.40,369.33 1400.40,368.87 1402.40,368.64 1404.40,368.49 1406.40,368.19 1408.40,368.04 1410.40,367.45 1412.40,366.26 1414.40,365.87 1416.40,366.29 1418.40,366.51 1420.40,366.51 1422.40,366.51 1424.40,366.51 1426.40,366.82 1428.40,367.44 1430.40,367.75 1432.40,367.75 1434.40,367.75 1436.40,367.84 1438.40,368.03 1440.40,368.12 1442.40,368.42 1444.40,369.01 1446.40,369.31 1448.40,369.24 1450.40,369.10 1452.40,369.04 1454.40,369.04 1456.40,369.39 1458.40,370.11 1460.40,370.47 1462.40,370.47 1464.40,370.47 1466.40,370.47 1468.40,370.14 1470.40,369.49 1472.40,369.16 1474.40,369.16 1476.40,369.16 1478.40,369.16 1480.40,369.42 1482.40,369.92 1484.40,370.18 1486.40,370.18 1488.40,370.18 1490.40,370.18 1492.40,370.08 1494.40,369.87 1496.40,370.31 1498.40,371.39 1500.40,371.93 1502.40,371.78 1504.40,371.48 1506.40,371.32 1508.40,371.32 1510.40,371.32 1512.40,371.32 1514.40,371.12 1516.40,370.71 1518.40,370.50 1520.40,370.50 1522.40,370.50 1524.40,370.50 1526.40,370.76 1528.40,371.28 1530.40,371.54 1532.40,371.54 1534.40,371.54 1536.40,371.54 1538.40,371.48 1540.40,371.34 1542.40,371.27 1544.40,371.27 1546.40,370.91 1548.40,370.20 1550.40,369.84 1552.40,369.84 1554.40,369.84 1556.40,369.84 1558.40,369.56 1560.40,369.00 1562.40,368.45 1564.40,367.92 1566.40,367.65 1568.40,367.65 1570.40,367.65 1572.40,366.90 1574.40,365.40 1576.40,364.56 1578.40,364.38 1580.40,364.28 1582.40,364.28 1584.40,364.28 1586.40,364.28 1588.40,364.84 1590.40,365.94 1592.40,366.49 1594.40,366.49 1596.40,366.49 1598.40,366.10 1600.40,365.32 1602.40,364.92 1604.40,364.92 1606.40,364.92 1608.40,364.88 1610.40,364.80 1612.40,364.75 1614.40,364.75 1616.40,364.75 1618.40,364.44 1620.40,363.81 1622.40,363.49 1624.40,363.49 1626.40,363.49 1628.40,363.99 1630.40,364.99 1632.40,365.49 1634.40,365.71 1636.40,366.15 1638.40,366.37 1640.40,366.37 1642.40,366.37 1644.40,367.21 1646.40,368.89 1648.40,370.15 1650.40,370.98 1652.40,371.23 1654.40,370.91 1656.40,370.75 1658.40,370.75 1660.40,370.75 1662.40,371.00 1664.40,371.52 1666.40,371.78 1668.40,371.78 1670.40,371.78 1672.40,371.43 1674.40,370.72 1676.40,370.37 1678.40,370.64 1680.40,371.20 1682.40,371.48 1684.40,371.48 1686.40,371.48 1688.40,371.48 1690.40,370.69 1692.40,369.10 1694.40,368.31 1696.40,368.31 1698.40,369.01 1700.40,370.41 1702.40,371.11 1704.40,371.11 1706.40,371.11 1708.40,371.75 1710.40,373.03 1712.40,373.95 1714.40,374.51 1716.40,374.79 1718.40,374.62 1720.40,374.28 1722.40,373.75 1724.40,373.05 1726.40,372.94 1728.40,373.43 1730.40,373.68 1732.40,373.68 1734.40,373.68 1736.40,373.20 1738.40,372.24 1740.40,371.77 1742.40,371.77 1744.40,371.77 1746.40,371.85 1748.40,372.02 1750.40,372.42 1752.40,373.06 1754.40,373.28 1756.40,373.10 1758.40,372.67 1760.40,372.01 1762.40,371.67 1764.40,371.47 1766.40,371.06 1768.40,370.86 1770.40,370.86 1772.40,370.86 1774.40,371.32 1776.40,372.24 1778.40,372.70 1780.40,372.70 1782.40,372.70 1784.40,372.70 1786.40,372.61 1788.40,372.43 1790.40,372.35 1792.40,372.39 1794.40,372.46 1796.40,372.50 1798.40,372.48 1800.40,372.45 1802.40,372.03 1804.40,371.24 1806.40,371.09 1808.40,371.60 1810.40,371.85 1812.40,371.85 1814.40,371.85 1816.40,371.85 1818.40,372.48 1820.40,373.73 1822.40,374.36 1824.40,374.36 1826.40,374.36 1828.40,374.81 1830.40,375.72 1832.40,376.17 1834.40,376.98 1836.40,378.62 1838.40,379.44 1840.40,379.45 1842.40,379.46 1844.40,379.46 1846.40,379.46 1848.40,379.46 1850.40,378.74 1852.40,377.31 1854.40,376.59 1856.40,376.59 1858.40,376.33 1860.40,375.80 1862.40,375.54 1864.40,375.54 1866.40,375.62 1868.40,375.77 1870.40,375.85 1872.40,376.03 1874.40,376.39 1876.40,376.57 1878.40,376.69 1880.40,376.94 1882.40,377.07 1884.40,377.07 1886.30,377.07" fill="none" stroke="#6ab0bd" stroke-width="0.8" opacity="0.7"/>
<polyline points="1306.40,310.69 1308.40,310.69 1310.40,310.69 1312.40,310.69 1314.40,310.69 1316.40,310.68 1318.40,310.64 1320.40,310.62 1322.40,310.83 1324.40,311.25 1326.40,311.46 1328.40,311.46 1330.40,311.46 1332.40,311.46 1334.40,311.52 1336.40,311.64 1338.40,311.70 1340.40,311.70 1342.40,311.47 1344.40,310.99 1346.40,310.76 1348.40,310.54 1350.40,310.10 1352.40,309.88 1354.40,309.88 1356.40,309.98 1358.40,310.17 1360.40,310.27 1362.40,310.27 1364.40,310.27 1366.40,310.30 1368.40,310.36 1370.40,310.10 1372.40,309.52 1374.40,309.22 1376.40,309.22 1378.40,309.43 1380.40,309.84 1382.40,309.78 1384.40,309.24 1386.40,308.97 1388.40,308.97 1390.40,308.97 1392.40,308.98 1394.40,309.00 1396.40,309.01 1398.40,309.01 1400.40,309.01 1402.40,308.75 1404.40,308.24 1406.40,307.98 1408.40,307.98 1410.40,308.07 1412.40,308.25 1414.40,308.34 1416.40,308.34 1418.40,308.34 1420.40,308.34 1422.40,308.28 1424.40,308.16 1426.40,308.11 1428.40,308.11 1430.40,308.11 1432.40,308.09 1434.40,308.07 1436.40,308.06 1438.40,307.59 1440.40,306.66 1442.40,306.20 1444.40,306.20 1446.40,306.20 1448.40,306.34 1450.40,306.62 1452.40,306.76 1454.40,306.77 1456.40,306.80 1458.40,306.73 1460.40,306.56 1462.40,306.48 1464.40,306.48 1466.40,306.48 1468.40,306.64 1470.40,306.96 1472.40,307.12 1474.40,307.23 1476.40,307.45 1478.40,307.56 1480.40,307.56 1482.40,307.56 1484.40,307.81 1486.40,308.30 1488.40,308.55 1490.40,308.60 1492.40,308.72 1494.40,308.78 1496.40,308.78 1498.40,308.78 1500.40,308.78 1502.40,308.61 1504.40,308.28 1506.40,308.11 1508.40,308.11 1510.40,308.11 1512.40,308.32 1514.40,308.75 1516.40,308.96 1518.40,308.96 1520.40,308.85 1522.40,308.64 1524.40,308.53 1526.40,308.53 1528.40,308.53 1530.40,308.41 1532.40,308.16 1534.40,308.04 1536.40,308.04 1538.40,308.30 1540.40,308.83 1542.40,309.10 1544.40,309.10 1546.40,309.10 1548.40,309.10 1550.40,308.83 1552.40,308.30 1554.40,308.03 1556.40,308.13 1558.40,308.33 1560.40,308.43 1562.40,308.43 1564.40,308.43 1566.40,308.73 1568.40,309.33 1570.40,309.63 1572.40,309.62 1574.40,309.61 1576.40,309.50 1578.40,309.27 1580.40,309.15 1582.40,309.15 1584.40,309.15 1586.40,308.74 1588.40,307.91 1590.40,307.49 1592.40,307.49 1594.40,307.49 1596.40,307.57 1598.40,307.72 1600.40,307.79 1602.40,307.79 1604.40,308.12 1606.40,308.76 1608.40,309.08 1610.40,309.08 1612.40,309.08 1614.40,308.90 1616.40,308.53 1618.40,308.34 1620.40,308.34 1622.40,308.34 1624.40,308.34 1626.40,308.09 1628.40,307.59 1630.40,307.34 1632.40,307.34 1634.40,307.92 1636.40,309.07 1638.40,309.95 1640.40,310.57 1642.40,310.88 1644.40,311.20 1646.40,311.83 1648.40,312.14 1650.40,312.14 1652.40,312.14 1654.40,311.74 1656.40,310.93 1658.40,310.53 1660.40,310.53 1662.40,310.53 1664.40,310.90 1666.40,311.65 1668.40,312.03 1670.40,312.03 1672.40,312.05 1674.40,312.09 1676.40,312.11 1678.40,311.78 1680.40,311.11 1682.40,310.78 1684.40,311.15 1686.40,311.90 1688.40,312.11 1690.40,311.79 1692.40,311.63 1694.40,311.63 1696.40,311.64 1698.40,311.67 1700.40,311.49 1702.40,311.10 1704.40,310.91 1706.40,310.91 1708.40,310.91 1710.40,311.02 1712.40,311.25 1714.40,311.36 1716.40,311.54 1718.40,311.91 1720.40,312.10 1722.40,312.10 1724.40,312.01 1726.40,311.83 1728.40,311.74 1730.40,311.51 1732.40,311.05 1734.40,310.82 1736.40,311.18 1738.40,311.91 1740.40,311.99 1742.40,311.43 1744.40,311.12 1746.40,311.08 1748.40,311.05 1750.40,311.05 1752.40,311.02 1754.40,310.96 1756.40,310.92 1758.40,311.04 1760.40,311.26 1762.40,311.38 1764.40,311.38 1766.40,311.64 1768.40,312.18 1770.40,312.44 1772.40,312.44 1774.40,312.44 1776.40,312.46 1778.40,312.50 1780.40,312.52 1782.40,312.56 1784.40,312.63 1786.40,312.67 1788.40,312.31 1790.40,311.59 1792.40,311.24 1794.40,311.24 1796.40,311.24 1798.40,311.24 1800.40,311.29 1802.40,311.39 1804.40,311.44 1806.40,311.44 1808.40,311.67 1810.40,312.11 1812.40,312.10 1814.40,311.63 1816.40,311.40 1818.40,311.40 1820.40,311.40 1822.40,311.55 1824.40,311.84 1826.40,311.79 1828.40,311.40 1830.40,311.20 1832.40,311.20 1834.40,311.20 1836.40,311.20 1838.40,311.19 1840.40,311.17 1842.40,311.08 1844.40,310.93 1846.40,310.85 1848.40,310.75 1850.40,310.56 1852.40,310.47 1854.40,310.47 1856.40,310.47 1858.40,310.89 1860.40,311.73 1862.40,312.15 1864.40,312.15 1866.40,312.15 1868.40,312.17 1870.40,312.21 1872.40,312.23 1874.40,311.92 1876.40,311.31 1878.40,311.00 1880.40,311.00 1882.40,311.00 1884.40,311.13 1886.30,311.51" fill="none" stroke="#c27840" stroke-width="0.8" opacity="0.7"/>
<polyline points="1306.40,279.99 1308.40,279.99 1310.40,279.99 1312.40,279.99 1314.40,280.10 1316.40,280.33 1318.40,280.33 1320.40,280.12 1322.40,280.01 1324.40,280.38 1326.40,281.10 1328.40,281.47 1330.40,281.47 1332.40,281.47 1334.40,281.47 1336.40,280.74 1338.40,279.27 1340.40,278.54 1342.40,278.58 1344.40,278.67 1346.40,278.56 1348.40,278.25 1350.40,278.42 1352.40,279.08 1354.40,279.41 1356.40,279.21 1358.40,278.81 1360.40,278.61 1362.40,278.60 1364.40,278.58 1366.40,278.57 1368.40,278.57 1370.40,278.57 1372.40,278.60 1374.40,278.67 1376.40,278.70 1378.40,278.70 1380.40,278.70 1382.40,278.27 1384.40,277.40 1386.40,276.97 1388.40,276.97 1390.40,276.97 1392.40,276.94 1394.40,276.87 1396.40,276.84 1398.40,276.76 1400.40,276.61 1402.40,276.54 1404.40,276.54 1406.40,276.55 1408.40,276.59 1410.40,276.61 1412.40,276.67 1414.40,276.78 1416.40,276.84 1418.40,276.94 1420.40,277.13 1422.40,277.05 1424.40,276.69 1426.40,276.51 1428.40,276.51 1430.40,276.50 1432.40,276.48 1434.40,276.47 1436.40,276.47 1438.40,276.74 1440.40,277.29 1442.40,277.56 1444.40,277.56 1446.40,277.56 1448.40,277.56 1450.40,277.59 1452.40,277.64 1454.40,277.67 1456.40,277.43 1458.40,276.96 1460.40,276.72 1462.40,276.72 1464.40,276.72 1466.40,276.62 1468.40,276.42 1470.40,276.32 1472.40,276.60 1474.40,277.15 1476.40,277.42 1478.40,277.42 1480.40,277.42 1482.40,277.26 1484.40,276.94 1486.40,276.78 1488.40,276.79 1490.40,276.79 1492.40,276.79 1494.40,276.72 1496.40,276.59 1498.40,276.85 1500.40,277.49 1502.40,277.81 1504.40,277.81 1506.40,277.69 1508.40,277.46 1510.40,277.34 1512.40,277.34 1514.40,277.34 1516.40,277.34 1518.40,277.50 1520.40,277.81 1522.40,277.97 1524.40,277.97 1526.40,277.72 1528.40,277.22 1530.40,276.96 1532.40,277.00 1534.40,277.07 1536.40,277.10 1538.40,277.10 1540.40,277.10 1542.40,277.28 1544.40,277.63 1546.40,277.58 1548.40,277.12 1550.40,276.90 1552.40,276.90 1554.40,276.90 1556.40,277.08 1558.40,277.46 1560.40,277.64 1562.40,277.64 1564.40,277.64 1566.40,277.53 1568.40,277.32 1570.40,277.21 1572.40,277.21 1574.40,277.41 1576.40,277.80 1578.40,278.00 1580.40,277.98 1582.40,277.93 1584.40,277.91 1586.40,277.91 1588.40,277.91 1590.40,277.70 1592.40,277.29 1594.40,277.09 1596.40,277.09 1598.40,277.35 1600.40,277.87 1602.40,278.13 1604.40,278.13 1606.40,278.13 1608.40,278.13 1610.40,277.86 1612.40,277.33 1614.40,277.06 1616.40,277.06 1618.40,277.06 1620.40,277.06 1622.40,277.37 1624.40,277.98 1626.40,278.28 1628.40,278.28 1630.40,278.27 1632.40,277.98 1634.40,277.39 1636.40,277.10 1638.40,277.10 1640.40,277.10 1642.40,277.10 1644.40,277.10 1646.40,277.10 1648.40,277.10 1650.40,277.10 1652.40,277.10 1654.40,277.45 1656.40,278.14 1658.40,278.49 1660.40,278.49 1662.40,278.49 1664.40,278.49 1666.40,278.34 1668.40,278.05 1670.40,277.90 1672.40,277.90 1674.40,278.00 1676.40,278.20 1678.40,278.30 1680.40,278.30 1682.40,278.38 1684.40,278.54 1686.40,278.63 1688.40,278.63 1690.40,278.63 1692.40,278.63 1694.40,278.40 1696.40,277.96 1698.40,277.73 1700.40,277.70 1702.40,277.63 1704.40,277.78 1706.40,278.15 1708.40,278.33 1710.40,278.33 1712.40,278.33 1714.40,278.33 1716.40,278.38 1718.40,278.49 1720.40,278.54 1722.40,278.44 1724.40,278.24 1726.40,278.14 1728.40,278.14 1730.40,278.14 1732.40,278.01 1734.40,277.76 1736.40,277.82 1738.40,278.19 1740.40,278.38 1742.40,278.38 1744.40,278.38 1746.40,278.16 1748.40,277.73 1750.40,277.51 1752.40,277.51 1754.40,277.51 1756.40,277.65 1758.40,277.92 1760.40,278.06 1762.40,278.13 1764.40,278.26 1766.40,278.33 1768.40,278.32 1770.40,278.29 1772.40,278.28 1774.40,278.28 1776.40,278.28 1778.40,278.29 1780.40,278.32 1782.40,278.54 1784.40,278.94 1786.40,279.14 1788.40,279.14 1790.40,279.14 1792.40,278.96 1794.40,278.61 1796.40,278.43 1798.40,278.31 1800.40,278.06 1802.40,277.94 1804.40,277.95 1806.40,277.95 1808.40,278.09 1810.40,278.35 1812.40,278.49 1814.40,278.49 1816.40,278.48 1818.40,278.45 1820.40,278.44 1822.40,278.49 1824.40,278.57 1826.40,278.61 1828.40,278.53 1830.40,278.39 1832.40,278.31 1834.40,278.31 1836.40,278.31 1838.40,278.31 1840.40,278.22 1842.40,278.04 1844.40,277.96 1846.40,277.95 1848.40,277.93 1850.40,277.93 1852.40,277.75 1854.40,277.40 1856.40,277.30 1858.40,277.46 1860.40,277.53 1862.40,277.53 1864.40,277.53 1866.40,277.64 1868.40,277.85 1870.40,277.95 1872.40,277.77 1874.40,277.39 1876.40,277.20 1878.40,277.20 1880.40,277.20 1882.40,277.37 1884.40,277.73 1886.30,277.90" fill="none" stroke="#bf4a44" stroke-width="0.8" opacity="0.7"/>
<line x1="1306.4" y1="276.5" x2="1886.3" y2="276.5" stroke="rgba(204,204,220,0.06)" stroke-width="1"/>
<text x="1302.5" y="279.5" font-size="8.3" fill="#c2c2ce" font-weight="400" text-anchor="end" >100%</text>
<line x1="1306.4" y1="311.29999999999995" x2="1886.3" y2="311.29999999999995" stroke="rgba(204,204,220,0.06)" stroke-width="1"/>
<text x="1302.5" y="314.29999999999995" font-size="8.3" fill="#c2c2ce" font-weight="400" text-anchor="end" >80%</text>
<line x1="1306.4" y1="346.1" x2="1886.3" y2="346.1" stroke="rgba(204,204,220,0.06)" stroke-width="1"/>
<text x="1302.5" y="349.1" font-size="8.3" fill="#c2c2ce" font-weight="400" text-anchor="end" >60%</text>
<line x1="1306.4" y1="380.9" x2="1886.3" y2="380.9" stroke="rgba(204,204,220,0.06)" stroke-width="1"/>
<text x="1302.5" y="383.9" font-size="8.3" fill="#c2c2ce" font-weight="400" text-anchor="end" >40%</text>
<line x1="1306.4" y1="415.7" x2="1886.3" y2="415.7" stroke="rgba(204,204,220,0.06)" stroke-width="1"/>
<text x="1302.5" y="418.7" font-size="8.3" fill="#c2c2ce" font-weight="400" text-anchor="end" >20%</text>
<line x1="1306.4" y1="450.5" x2="1886.3" y2="450.5" stroke="rgba(204,204,220,0.06)" stroke-width="1"/>
<text x="1302.5" y="453.5" font-size="8.3" fill="#c2c2ce" font-weight="400" text-anchor="end" >0%</text>
<line x1="1326.8" y1="276.5" x2="1326.8" y2="450.5" stroke="rgba(204,204,220,0.06)" stroke-width="1"/>
<text x="1326.8" y="463.3" font-size="8.3" fill="#c2c2ce" font-weight="400" text-anchor="middle" >15:55</text>
<line x1="1375.24" y1="276.5" x2="1375.24" y2="450.5" stroke="rgba(204,204,220,0.06)" stroke-width="1"/>
<text x="1375.24" y="463.3" font-size="8.3" fill="#c2c2ce" font-weight="400" text-anchor="middle" >16:00</text>
<line x1="1423.6799999999998" y1="276.5" x2="1423.6799999999998" y2="450.5" stroke="rgba(204,204,220,0.06)" stroke-width="1"/>
<text x="1423.6799999999998" y="463.3" font-size="8.3" fill="#c2c2ce" font-weight="400" text-anchor="middle" >16:05</text>
<line x1="1472.12" y1="276.5" x2="1472.12" y2="450.5" stroke="rgba(204,204,220,0.06)" stroke-width="1"/>
<text x="1472.12" y="463.3" font-size="8.3" fill="#c2c2ce" font-weight="400" text-anchor="middle" >16:10</text>
<line x1="1520.56" y1="276.5" x2="1520.56" y2="450.5" stroke="rgba(204,204,220,0.06)" stroke-width="1"/>
<text x="1520.56" y="463.3" font-size="8.3" fill="#c2c2ce" font-weight="400" text-anchor="middle" >16:15</text>
<line x1="1569.0" y1="276.5" x2="1569.0" y2="450.5" stroke="rgba(204,204,220,0.06)" stroke-width="1"/>
<text x="1569.0" y="463.3" font-size="8.3" fill="#c2c2ce" font-weight="400" text-anchor="middle" >16:20</text>
<line x1="1617.44" y1="276.5" x2="1617.44" y2="450.5" stroke="rgba(204,204,220,0.06)" stroke-width="1"/>
<text x="1617.44" y="463.3" font-size="8.3" fill="#c2c2ce" font-weight="400" text-anchor="middle" >16:25</text>
<line x1="1665.8799999999999" y1="276.5" x2="1665.8799999999999" y2="450.5" stroke="rgba(204,204,220,0.06)" stroke-width="1"/>
<text x="1665.8799999999999" y="463.3" font-size="8.3" fill="#c2c2ce" font-weight="400" text-anchor="middle" >16:30</text>
<line x1="1714.32" y1="276.5" x2="1714.32" y2="450.5" stroke="rgba(204,204,220,0.06)" stroke-width="1"/>
<text x="1714.32" y="463.3" font-size="8.3" fill="#c2c2ce" font-weight="400" text-anchor="middle" >16:35</text>
<line x1="1762.76" y1="276.5" x2="1762.76" y2="450.5" stroke="rgba(204,204,220,0.06)" stroke-width="1"/>
<text x="1762.76" y="463.3" font-size="8.3" fill="#c2c2ce" font-weight="400" text-anchor="middle" >16:40</text>
<line x1="1811.1999999999998" y1="276.5" x2="1811.1999999999998" y2="450.5" stroke="rgba(204,204,220,0.06)" stroke-width="1"/>
<text x="1811.1999999999998" y="463.3" font-size="8.3" fill="#c2c2ce" font-weight="400" text-anchor="middle" >16:45</text>
<line x1="1859.6399999999999" y1="276.5" x2="1859.6399999999999" y2="450.5" stroke="rgba(204,204,220,0.06)" stroke-width="1"/>
<text x="1859.6399999999999" y="463.3" font-size="8.3" fill="#c2c2ce" font-weight="400" text-anchor="middle" >16:50</text>
<line x1="1290" y1="478" x2="1297.5" y2="478" stroke="#73bf69" stroke-width="2.4" stroke-linecap="round"/>
<text x="1307" y="480.3" font-size="8.5" fill="#c8c8d4" font-weight="400" text-anchor="start" stroke="#c8c8d4" stroke-width="0.2" >Lighthouse</text>
<line x1="1362" y1="478" x2="1369.5" y2="478" stroke="#f2cc0c" stroke-width="2.4" stroke-linecap="round"/>
<text x="1379.5" y="480.3" font-size="8.5" fill="#c8c8d4" font-weight="400" text-anchor="start" stroke="#c8c8d4" stroke-width="0.2" >Lodestar</text>
<line x1="1425" y1="478" x2="1432.5" y2="478" stroke="#73c5ef" stroke-width="2.4" stroke-linecap="round"/>
<text x="1443" y="480.3" font-size="8.5" fill="#c8c8d4" font-weight="400" text-anchor="start" stroke="#c8c8d4" stroke-width="0.2" >Nimbus</text>
<line x1="1484" y1="478" x2="1491.5" y2="478" stroke="#ff9830" stroke-width="2.4" stroke-linecap="round"/>
<text x="1501.6" y="480.3" font-size="8.5" fill="#c8c8d4" font-weight="400" text-anchor="start" stroke="#c8c8d4" stroke-width="0.2" >Prysm</text>
<line x1="1537.5" y1="478" x2="1545.0" y2="478" stroke="#f2495c" stroke-width="2.4" stroke-linecap="round"/>
<text x="1555" y="480.3" font-size="8.5" fill="#c8c8d4" font-weight="400" text-anchor="start" stroke="#c8c8d4" stroke-width="0.2" >Teku</text>
<line x1="1585" y1="478" x2="1592.5" y2="478" stroke="#3b82e6" stroke-width="2.4" stroke-linecap="round"/>
<text x="1603" y="480.3" font-size="8.5" fill="#c8c8d4" font-weight="400" text-anchor="start" stroke="#c8c8d4" stroke-width="0.2" >Unknown</text>
<rect x="6.5" y="572.5" width="628" height="272" rx="2" fill="#181b1f" stroke="#2a2c31" stroke-width="1"/>
<text x="12" y="586" font-size="10.0" fill="#d5d5df" font-weight="400" text-anchor="start" stroke="#d5d5df" stroke-width="0.45" letter-spacing="0.12">Block Arrival Delays</text>
<g stroke="#a8a8b4" fill="none" stroke-linejoin="round"><path d="M118 579.2 L123 587.6 L113 587.6 Z" stroke-width="0.95"/><line x1="118" y1="582.3000000000001" x2="118" y2="585.6" stroke-width="0.8"/></g>
<defs><radialGradient id="pg1" gradientUnits="userSpaceOnUse" cx="246.1" cy="719.1" r="109.2"><stop offset="0" stop-color="#917a07"/><stop offset="1" stop-color="#c1a30a"/></radialGradient><radialGradient id="pg2" gradientUnits="userSpaceOnUse" cx="246.1" cy="719.1" r="109.2"><stop offset="0" stop-color="#7ce06e"/><stop offset="1" stop-color="#a2e998"/></radialGradient><radialGradient id="pg3" gradientUnits="userSpaceOnUse" cx="246.1" cy="719.1" r="109.2"><stop offset="0" stop-color="#a34900"/><stop offset="1" stop-color="#d66000"/></radialGradient><radialGradient id="pg4" gradientUnits="userSpaceOnUse" cx="246.1" cy="719.1" r="109.2"><stop offset="0" stop-color="#c96500"/><stop offset="1" stop-color="#fc7f00"/></radialGradient><radialGradient id="pg5" gradientUnits="userSpaceOnUse" cx="246.1" cy="719.1" r="109.2"><stop offset="0" stop-color="#943b00"/><stop offset="1" stop-color="#c75000"/></radialGradient><radialGradient id="pg6" gradientUnits="userSpaceOnUse" cx="246.1" cy="719.1" r="109.2"><stop offset="0" stop-color="#931625"/><stop offset="1" stop-color="#bf1d30"/></radialGradient><radialGradient id="pg7" gradientUnits="userSpaceOnUse" cx="246.1" cy="719.1" r="109.2"><stop offset="0" stop-color="#183b14"/><stop offset="1" stop-color="#276120"/></radialGradient><radialGradient id="pg8" gradientUnits="userSpaceOnUse" cx="246.1" cy="719.1" r="109.2"><stop offset="0" stop-color="#680c16"/><stop offset="1" stop-color="#961120"/></radialGradient><radialGradient id="pg9" gradientUnits="userSpaceOnUse" cx="246.1" cy="719.1" r="109.2"><stop offset="0" stop-color="#ff0d29"/><stop offset="1" stop-color="#ff4056"/></radialGradient></defs>
<path d="M246.10,719.10 L246.10,609.90 A109.2,109.2 0 0 1 349.28,754.85 Z" fill="url(#pg1)" stroke="#181b1f" stroke-width="0.9" stroke-linejoin="round"/>
<path d="M246.10,719.10 L349.28,754.85 A109.2,109.2 0 0 1 188.16,811.66 Z" fill="url(#pg2)" stroke="#181b1f" stroke-width="0.9" stroke-linejoin="round"/>
<path d="M246.10,719.10 L188.16,811.66 A109.2,109.2 0 0 1 137.05,713.41 Z" fill="url(#pg3)" stroke="#181b1f" stroke-width="0.9" stroke-linejoin="round"/>
<path d="M246.10,719.10 L137.05,713.41 A109.2,109.2 0 0 1 189.83,625.51 Z" fill="url(#pg4)" stroke="#181b1f" stroke-width="0.9" stroke-linejoin="round"/>
<path d="M246.10,719.10 L189.83,625.51 A109.2,109.2 0 0 1 224.94,611.97 Z" fill="url(#pg5)" stroke="#181b1f" stroke-width="0.9" stroke-linejoin="round"/>
<path d="M246.10,719.10 L224.94,611.97 A109.2,109.2 0 0 1 231.94,610.82 Z" fill="url(#pg6)" stroke="#181b1f" stroke-width="0.9" stroke-linejoin="round"/>
<path d="M246.10,719.10 L231.94,610.82 A109.2,109.2 0 0 1 236.65,610.31 Z" fill="url(#pg7)" stroke="#181b1f" stroke-width="0.9" stroke-linejoin="round"/>
<path d="M246.10,719.10 L236.65,610.31 A109.2,109.2 0 0 1 241.37,610.00 Z" fill="url(#pg8)" stroke="#181b1f" stroke-width="0.9" stroke-linejoin="round"/>
<path d="M246.10,719.10 L241.37,610.00 A109.2,109.2 0 0 1 246.10,609.90 Z" fill="url(#pg9)" stroke="#181b1f" stroke-width="0.9" stroke-linejoin="round"/>
<text x="298.0" y="694.7" font-size="10.8" fill="#d2d2dc" font-weight="400" text-anchor="middle" stroke="#d2d2dc" stroke-width="0.3" >[1000,1500)</text>
<text x="298.0" y="707.7" font-size="10.8" fill="#d2d2dc" font-weight="400" text-anchor="middle" stroke="#d2d2dc" stroke-width="0.3" >265</text>
<text x="267.3" y="791.7" font-size="10.8" fill="#d2d2dc" font-weight="400" text-anchor="middle" stroke="#d2d2dc" stroke-width="0.3" >[500,1000)</text>
<text x="267.3" y="804.7" font-size="10.8" fill="#d2d2dc" font-weight="400" text-anchor="middle" stroke="#d2d2dc" stroke-width="0.3" >250</text>
<text x="189.6" y="761.0" font-size="10.8" fill="#d2d2dc" font-weight="400" text-anchor="middle" stroke="#d2d2dc" stroke-width="0.3" >[1500,2000)</text>
<text x="189.6" y="774.0" font-size="10.8" fill="#d2d2dc" font-weight="400" text-anchor="middle" stroke="#d2d2dc" stroke-width="0.3" >148</text>
<text x="191.5" y="698.8" font-size="10.8" fill="#d2d2dc" font-weight="400" text-anchor="middle" stroke="#d2d2dc" stroke-width="0.3" >[2000,3000)</text>
<text x="191.5" y="711.8" font-size="10.8" fill="#d2d2dc" font-weight="400" text-anchor="middle" stroke="#d2d2dc" stroke-width="0.3" >136</text>
<text x="223.2" y="672.2" font-size="10.8" fill="#d2d2dc" font-weight="400" text-anchor="middle" stroke="#d2d2dc" stroke-width="0.3" >[3000,4000)</text>
<text x="223.2" y="685.2" font-size="10.8" fill="#d2d2dc" font-weight="400" text-anchor="middle" stroke="#d2d2dc" stroke-width="0.3" >48.2</text>
<text x="583.4" y="609.9" font-size="8.3" fill="#6e9fff" font-weight="700" text-anchor="end" >Value</text>
<text x="624" y="609.9" font-size="8.3" fill="#6e9fff" font-weight="700" text-anchor="end" >Percent</text>
<line x1="480" y1="615.3" x2="629" y2="615.3" stroke="#26282d" stroke-width="1"/>
<line x1="486.2" y1="623" x2="493.2" y2="623" stroke="#F2CC0C" stroke-width="2.8" stroke-linecap="round"/>
<text x="499.8" y="626" font-size="8.3" fill="#c8c8d4" font-weight="400" text-anchor="start" stroke="#c8c8d4" stroke-width="0.2" >[1000,1500)</text>
<text x="583.4" y="626" font-size="8.3" fill="#c8c8d4" font-weight="400" text-anchor="end" stroke="#c8c8d4" stroke-width="0.2" >265</text>
<text x="624" y="626" font-size="8.3" fill="#c8c8d4" font-weight="400" text-anchor="end" stroke="#c8c8d4" stroke-width="0.2" >30%</text>
<line x1="480" y1="631.5" x2="629" y2="631.5" stroke="#26282d" stroke-width="1"/>
<line x1="486.2" y1="639.2" x2="493.2" y2="639.2" stroke="#C8F2C2" stroke-width="2.8" stroke-linecap="round"/>
<text x="499.8" y="642.2" font-size="8.3" fill="#c8c8d4" font-weight="400" text-anchor="start" stroke="#c8c8d4" stroke-width="0.2" >[500,1000)</text>
<text x="583.4" y="642.2" font-size="8.3" fill="#c8c8d4" font-weight="400" text-anchor="end" stroke="#c8c8d4" stroke-width="0.2" >250</text>
<text x="624" y="642.2" font-size="8.3" fill="#c8c8d4" font-weight="400" text-anchor="end" stroke="#c8c8d4" stroke-width="0.2" >29%</text>
<line x1="480" y1="647.7" x2="629" y2="647.7" stroke="#26282d" stroke-width="1"/>
<line x1="486.2" y1="655.4000000000001" x2="493.2" y2="655.4000000000001" stroke="#FF780A" stroke-width="2.8" stroke-linecap="round"/>
<text x="499.8" y="658.4000000000001" font-size="8.3" fill="#c8c8d4" font-weight="400" text-anchor="start" stroke="#c8c8d4" stroke-width="0.2" >[1500,2000)</text>
<text x="583.4" y="658.4000000000001" font-size="8.3" fill="#c8c8d4" font-weight="400" text-anchor="end" stroke="#c8c8d4" stroke-width="0.2" >148</text>
<text x="624" y="658.4000000000001" font-size="8.3" fill="#c8c8d4" font-weight="400" text-anchor="end" stroke="#c8c8d4" stroke-width="0.2" >17%</text>
<line x1="480" y1="663.9000000000001" x2="629" y2="663.9000000000001" stroke="#26282d" stroke-width="1"/>
<line x1="486.2" y1="671.6000000000001" x2="493.2" y2="671.6000000000001" stroke="#FFB357" stroke-width="2.8" stroke-linecap="round"/>
<text x="499.8" y="674.6000000000001" font-size="8.3" fill="#c8c8d4" font-weight="400" text-anchor="start" stroke="#c8c8d4" stroke-width="0.2" >[2000,3000)</text>
<text x="583.4" y="674.6000000000001" font-size="8.3" fill="#c8c8d4" font-weight="400" text-anchor="end" stroke="#c8c8d4" stroke-width="0.2" >136</text>
<text x="624" y="674.6000000000001" font-size="8.3" fill="#c8c8d4" font-weight="400" text-anchor="end" stroke="#c8c8d4" stroke-width="0.2" >16%</text>
<line x1="480" y1="680.1000000000001" x2="629" y2="680.1000000000001" stroke="#26282d" stroke-width="1"/>
<line x1="486.2" y1="687.8000000000002" x2="493.2" y2="687.8000000000002" stroke="#FA6400" stroke-width="2.8" stroke-linecap="round"/>
<text x="499.8" y="690.8000000000002" font-size="8.3" fill="#c8c8d4" font-weight="400" text-anchor="start" stroke="#c8c8d4" stroke-width="0.2" >[3000,4000)</text>
<text x="583.4" y="690.8000000000002" font-size="8.3" fill="#c8c8d4" font-weight="400" text-anchor="end" stroke="#c8c8d4" stroke-width="0.2" >48.2</text>
<text x="624" y="690.8000000000002" font-size="8.3" fill="#c8c8d4" font-weight="400" text-anchor="end" stroke="#c8c8d4" stroke-width="0.2" >6%</text>
<line x1="480" y1="696.3000000000002" x2="629" y2="696.3000000000002" stroke="#26282d" stroke-width="1"/>
<line x1="486.2" y1="704.0000000000002" x2="493.2" y2="704.0000000000002" stroke="#F2495C" stroke-width="2.8" stroke-linecap="round"/>
<text x="499.8" y="707.0000000000002" font-size="8.3" fill="#c8c8d4" font-weight="400" text-anchor="start" stroke="#c8c8d4" stroke-width="0.2" >[5000,8000)</text>
<text x="583.4" y="707.0000000000002" font-size="8.3" fill="#c8c8d4" font-weight="400" text-anchor="end" stroke="#c8c8d4" stroke-width="0.2" >9.04</text>
<text x="624" y="707.0000000000002" font-size="8.3" fill="#c8c8d4" font-weight="400" text-anchor="end" stroke="#c8c8d4" stroke-width="0.2" >1%</text>
<line x1="480" y1="712.5000000000002" x2="629" y2="712.5000000000002" stroke="#26282d" stroke-width="1"/>
<line x1="486.2" y1="720.2000000000003" x2="493.2" y2="720.2000000000003" stroke="#37872D" stroke-width="2.8" stroke-linecap="round"/>
<text x="499.8" y="723.2000000000003" font-size="8.3" fill="#c8c8d4" font-weight="400" text-anchor="start" stroke="#c8c8d4" stroke-width="0.2" >[0,500)</text>
<text x="583.4" y="723.2000000000003" font-size="8.3" fill="#c8c8d4" font-weight="400" text-anchor="end" stroke="#c8c8d4" stroke-width="0.2" >6.03</text>
<text x="624" y="723.2000000000003" font-size="8.3" fill="#c8c8d4" font-weight="400" text-anchor="end" stroke="#c8c8d4" stroke-width="0.2" >1%</text>
<line x1="480" y1="728.7000000000003" x2="629" y2="728.7000000000003" stroke="#26282d" stroke-width="1"/>
<line x1="486.2" y1="736.4000000000003" x2="493.2" y2="736.4000000000003" stroke="#C4162A" stroke-width="2.8" stroke-linecap="round"/>
<text x="499.8" y="739.4000000000003" font-size="8.3" fill="#c8c8d4" font-weight="400" text-anchor="start" stroke="#c8c8d4" stroke-width="0.2" >[12000,∞)</text>
<text x="583.4" y="739.4000000000003" font-size="8.3" fill="#c8c8d4" font-weight="400" text-anchor="end" stroke="#c8c8d4" stroke-width="0.2" >6.03</text>
<text x="624" y="739.4000000000003" font-size="8.3" fill="#c8c8d4" font-weight="400" text-anchor="end" stroke="#c8c8d4" stroke-width="0.2" >1%</text>
<line x1="480" y1="744.9000000000003" x2="629" y2="744.9000000000003" stroke="#26282d" stroke-width="1"/>
<line x1="486.2" y1="752.6000000000004" x2="493.2" y2="752.6000000000004" stroke="#FF7383" stroke-width="2.8" stroke-linecap="round"/>
<text x="499.8" y="755.6000000000004" font-size="8.3" fill="#c8c8d4" font-weight="400" text-anchor="start" stroke="#c8c8d4" stroke-width="0.2" >[4000,5000)</text>
<text x="583.4" y="755.6000000000004" font-size="8.3" fill="#c8c8d4" font-weight="400" text-anchor="end" stroke="#c8c8d4" stroke-width="0.2" >6.03</text>
<text x="624" y="755.6000000000004" font-size="8.3" fill="#c8c8d4" font-weight="400" text-anchor="end" stroke="#c8c8d4" stroke-width="0.2" >1%</text>
<line x1="480" y1="761.1000000000004" x2="629" y2="761.1000000000004" stroke="#26282d" stroke-width="1"/>
<line x1="486.2" y1="768.8000000000004" x2="493.2" y2="768.8000000000004" stroke="#A72230" stroke-width="2.8" stroke-linecap="round"/>
<text x="499.8" y="771.8000000000004" font-size="8.3" fill="#c8c8d4" font-weight="400" text-anchor="start" stroke="#c8c8d4" stroke-width="0.2" >[8000,12000)</text>
<text x="583.4" y="771.8000000000004" font-size="8.3" fill="#c8c8d4" font-weight="400" text-anchor="end" stroke="#c8c8d4" stroke-width="0.2" >0</text>
<text x="624" y="771.8000000000004" font-size="8.3" fill="#c8c8d4" font-weight="400" text-anchor="end" stroke="#c8c8d4" stroke-width="0.2" >0%</text>
<line x1="480" y1="777.3000000000004" x2="629" y2="777.3000000000004" stroke="#26282d" stroke-width="1"/>
<rect x="641.5" y="572.5" width="628" height="272" rx="2" fill="#181b1f" stroke="#2a2c31" stroke-width="1"/>
<text x="647" y="586" font-size="10.0" fill="#d5d5df" font-weight="400" text-anchor="start" stroke="#d5d5df" stroke-width="0.45" letter-spacing="0.12">Block Total Processing Time</text>
<g stroke="#a8a8b4" fill="none" stroke-linejoin="round"><path d="M791 579.2 L796 587.6 L786 587.6 Z" stroke-width="0.95"/><line x1="791" y1="582.3000000000001" x2="791" y2="585.6" stroke-width="0.8"/></g>
<defs><radialGradient id="pg10" gradientUnits="userSpaceOnUse" cx="880.3" cy="719.2" r="109.2"><stop offset="0" stop-color="#183b14"/><stop offset="1" stop-color="#276120"/></radialGradient><radialGradient id="pg11" gradientUnits="userSpaceOnUse" cx="880.3" cy="719.2" r="109.2"><stop offset="0" stop-color="#7ce06e"/><stop offset="1" stop-color="#a2e998"/></radialGradient><radialGradient id="pg12" gradientUnits="userSpaceOnUse" cx="880.3" cy="719.2" r="109.2"><stop offset="0" stop-color="#c96500"/><stop offset="1" stop-color="#fc7f00"/></radialGradient><radialGradient id="pg13" gradientUnits="userSpaceOnUse" cx="880.3" cy="719.2" r="109.2"><stop offset="0" stop-color="#a34900"/><stop offset="1" stop-color="#d66000"/></radialGradient><radialGradient id="pg14" gradientUnits="userSpaceOnUse" cx="880.3" cy="719.2" r="109.2"><stop offset="0" stop-color="#a143d1"/><stop offset="1" stop-color="#b66cdb"/></radialGradient><radialGradient id="pg15" gradientUnits="userSpaceOnUse" cx="880.3" cy="719.2" r="109.2"><stop offset="0" stop-color="#943b00"/><stop offset="1" stop-color="#c75000"/></radialGradient><radialGradient id="pg16" gradientUnits="userSpaceOnUse" cx="880.3" cy="719.2" r="109.2"><stop offset="0" stop-color="#ff0d29"/><stop offset="1" stop-color="#ff4056"/></radialGradient></defs>
<path d="M880.30,719.20 L880.30,610.00 A109.2,109.2 0 1 1 773.45,741.75 Z" fill="url(#pg10)" stroke="#181b1f" stroke-width="0.9" stroke-linejoin="round"/>
<path d="M880.30,719.20 L773.45,741.75 A109.2,109.2 0 0 1 851.92,613.75 Z" fill="url(#pg11)" stroke="#181b1f" stroke-width="0.9" stroke-linejoin="round"/>
<path d="M880.30,719.20 L851.92,613.75 A109.2,109.2 0 0 1 861.26,611.67 Z" fill="url(#pg12)" stroke="#181b1f" stroke-width="0.9" stroke-linejoin="round"/>
<path d="M880.30,719.20 L861.26,611.67 A109.2,109.2 0 0 1 867.57,610.74 Z" fill="url(#pg13)" stroke="#181b1f" stroke-width="0.9" stroke-linejoin="round"/>
<path d="M880.30,719.20 L867.57,610.74 A109.2,109.2 0 0 1 873.93,610.19 Z" fill="url(#pg14)" stroke="#181b1f" stroke-width="0.9" stroke-linejoin="round"/>
<path d="M880.30,719.20 L873.93,610.19 A109.2,109.2 0 0 1 877.12,610.05 Z" fill="url(#pg15)" stroke="#181b1f" stroke-width="0.9" stroke-linejoin="round"/>
<path d="M880.30,719.20 L877.12,610.05 A109.2,109.2 0 0 1 880.30,610.00 Z" fill="url(#pg16)" stroke="#181b1f" stroke-width="0.9" stroke-linejoin="round"/>
<text x="929.8" y="771.8" font-size="10.8" fill="#d2d2dc" font-weight="400" text-anchor="middle" stroke="#d2d2dc" stroke-width="0.3" >[0,500)</text>
<text x="929.8" y="784.8" font-size="10.8" fill="#d2d2dc" font-weight="400" text-anchor="middle" stroke="#d2d2dc" stroke-width="0.3" >633</text>
<text x="826.0" y="698.4" font-size="10.8" fill="#d2d2dc" font-weight="400" text-anchor="middle" stroke="#d2d2dc" stroke-width="0.3" >[500,1000)</text>
<text x="826.0" y="711.4" font-size="10.8" fill="#d2d2dc" font-weight="400" text-anchor="middle" stroke="#d2d2dc" stroke-width="0.3" >214</text>
<text x="1217.8" y="609.9" font-size="8.3" fill="#6e9fff" font-weight="700" text-anchor="end" >Value</text>
<text x="1259" y="609.9" font-size="8.3" fill="#6e9fff" font-weight="700" text-anchor="end" >Percent</text>
<line x1="1113.5" y1="615.3" x2="1263.5" y2="615.3" stroke="#26282d" stroke-width="1"/>
<line x1="1120.6" y1="623" x2="1127.6" y2="623" stroke="#37872D" stroke-width="2.8" stroke-linecap="round"/>
<text x="1134.2" y="626" font-size="8.3" fill="#c8c8d4" font-weight="400" text-anchor="start" stroke="#c8c8d4" stroke-width="0.2" >[0,500)</text>
<text x="1217.8" y="626" font-size="8.3" fill="#c8c8d4" font-weight="400" text-anchor="end" stroke="#c8c8d4" stroke-width="0.2" >633</text>
<text x="1259" y="626" font-size="8.3" fill="#c8c8d4" font-weight="400" text-anchor="end" stroke="#c8c8d4" stroke-width="0.2" >72%</text>
<line x1="1113.5" y1="631.5" x2="1263.5" y2="631.5" stroke="#26282d" stroke-width="1"/>
<line x1="1120.6" y1="639.2" x2="1127.6" y2="639.2" stroke="#C8F2C2" stroke-width="2.8" stroke-linecap="round"/>
<text x="1134.2" y="642.2" font-size="8.3" fill="#c8c8d4" font-weight="400" text-anchor="start" stroke="#c8c8d4" stroke-width="0.2" >[500,1000)</text>
<text x="1217.8" y="642.2" font-size="8.3" fill="#c8c8d4" font-weight="400" text-anchor="end" stroke="#c8c8d4" stroke-width="0.2" >214</text>
<text x="1259" y="642.2" font-size="8.3" fill="#c8c8d4" font-weight="400" text-anchor="end" stroke="#c8c8d4" stroke-width="0.2" >24%</text>
<line x1="1113.5" y1="647.7" x2="1263.5" y2="647.7" stroke="#26282d" stroke-width="1"/>
<line x1="1120.6" y1="655.4000000000001" x2="1127.6" y2="655.4000000000001" stroke="#FFB357" stroke-width="2.8" stroke-linecap="round"/>
<text x="1134.2" y="658.4000000000001" font-size="8.3" fill="#c8c8d4" font-weight="400" text-anchor="start" stroke="#c8c8d4" stroke-width="0.2" >[2000,3000)</text>
<text x="1217.8" y="658.4000000000001" font-size="8.3" fill="#c8c8d4" font-weight="400" text-anchor="end" stroke="#c8c8d4" stroke-width="0.2" >9.04</text>
<text x="1259" y="658.4000000000001" font-size="8.3" fill="#c8c8d4" font-weight="400" text-anchor="end" stroke="#c8c8d4" stroke-width="0.2" >1%</text>
<line x1="1113.5" y1="663.9000000000001" x2="1263.5" y2="663.9000000000001" stroke="#26282d" stroke-width="1"/>
<line x1="1120.6" y1="671.6000000000001" x2="1127.6" y2="671.6000000000001" stroke="#FF9830" stroke-width="2.8" stroke-linecap="round"/>
<text x="1134.2" y="674.6000000000001" font-size="8.3" fill="#c8c8d4" font-weight="400" text-anchor="start" stroke="#c8c8d4" stroke-width="0.2" >[1000,1500)</text>
<text x="1217.8" y="674.6000000000001" font-size="8.3" fill="#c8c8d4" font-weight="400" text-anchor="end" stroke="#c8c8d4" stroke-width="0.2" >6.03</text>
<text x="1259" y="674.6000000000001" font-size="8.3" fill="#c8c8d4" font-weight="400" text-anchor="end" stroke="#c8c8d4" stroke-width="0.2" >1%</text>
<line x1="1113.5" y1="680.1000000000001" x2="1263.5" y2="680.1000000000001" stroke="#26282d" stroke-width="1"/>
<line x1="1120.6" y1="687.8000000000002" x2="1127.6" y2="687.8000000000002" stroke="#CA95E5" stroke-width="2.8" stroke-linecap="round"/>
<text x="1134.2" y="690.8000000000002" font-size="8.3" fill="#c8c8d4" font-weight="400" text-anchor="start" stroke="#c8c8d4" stroke-width="0.2" >[1500,2000)</text>
<text x="1217.8" y="690.8000000000002" font-size="8.3" fill="#c8c8d4" font-weight="400" text-anchor="end" stroke="#c8c8d4" stroke-width="0.2" >6.03</text>
<text x="1259" y="690.8000000000002" font-size="8.3" fill="#c8c8d4" font-weight="400" text-anchor="end" stroke="#c8c8d4" stroke-width="0.2" >1%</text>
<line x1="1113.5" y1="696.3000000000002" x2="1263.5" y2="696.3000000000002" stroke="#26282d" stroke-width="1"/>
<line x1="1120.6" y1="704.0000000000002" x2="1127.6" y2="704.0000000000002" stroke="#FA6400" stroke-width="2.8" stroke-linecap="round"/>
<text x="1134.2" y="707.0000000000002" font-size="8.3" fill="#c8c8d4" font-weight="400" text-anchor="start" stroke="#c8c8d4" stroke-width="0.2" >[3000,4000)</text>
<text x="1217.8" y="707.0000000000002" font-size="8.3" fill="#c8c8d4" font-weight="400" text-anchor="end" stroke="#c8c8d4" stroke-width="0.2" >3.01</text>
<text x="1259" y="707.0000000000002" font-size="8.3" fill="#c8c8d4" font-weight="400" text-anchor="end" stroke="#c8c8d4" stroke-width="0.2" >0%</text>
<line x1="1113.5" y1="712.5000000000002" x2="1263.5" y2="712.5000000000002" stroke="#26282d" stroke-width="1"/>
<line x1="1120.6" y1="720.2000000000003" x2="1127.6" y2="720.2000000000003" stroke="#FF7383" stroke-width="2.8" stroke-linecap="round"/>
<text x="1134.2" y="723.2000000000003" font-size="8.3" fill="#c8c8d4" font-weight="400" text-anchor="start" stroke="#c8c8d4" stroke-width="0.2" >[4000,5000)</text>
<text x="1217.8" y="723.2000000000003" font-size="8.3" fill="#c8c8d4" font-weight="400" text-anchor="end" stroke="#c8c8d4" stroke-width="0.2" >3.01</text>
<text x="1259" y="723.2000000000003" font-size="8.3" fill="#c8c8d4" font-weight="400" text-anchor="end" stroke="#c8c8d4" stroke-width="0.2" >0%</text>
<line x1="1113.5" y1="728.7000000000003" x2="1263.5" y2="728.7000000000003" stroke="#26282d" stroke-width="1"/>
<line x1="1120.6" y1="736.4000000000003" x2="1127.6" y2="736.4000000000003" stroke="#73BF69" stroke-width="2.8" stroke-linecap="round"/>
<text x="1134.2" y="739.4000000000003" font-size="8.3" fill="#c8c8d4" font-weight="400" text-anchor="start" stroke="#c8c8d4" stroke-width="0.2" >[0,50)</text>
<text x="1217.8" y="739.4000000000003" font-size="8.3" fill="#c8c8d4" font-weight="400" text-anchor="end" stroke="#c8c8d4" stroke-width="0.2" >0</text>
<text x="1259" y="739.4000000000003" font-size="8.3" fill="#c8c8d4" font-weight="400" text-anchor="end" stroke="#c8c8d4" stroke-width="0.2" >0%</text>
<line x1="1113.5" y1="744.9000000000003" x2="1263.5" y2="744.9000000000003" stroke="#26282d" stroke-width="1"/>
<line x1="1120.6" y1="752.6000000000004" x2="1127.6" y2="752.6000000000004" stroke="#8AB8FF" stroke-width="2.8" stroke-linecap="round"/>
<text x="1134.2" y="755.6000000000004" font-size="8.3" fill="#c8c8d4" font-weight="400" text-anchor="start" stroke="#c8c8d4" stroke-width="0.2" >[100,250)</text>
<text x="1217.8" y="755.6000000000004" font-size="8.3" fill="#c8c8d4" font-weight="400" text-anchor="end" stroke="#c8c8d4" stroke-width="0.2" >0</text>
<text x="1259" y="755.6000000000004" font-size="8.3" fill="#c8c8d4" font-weight="400" text-anchor="end" stroke="#c8c8d4" stroke-width="0.2" >0%</text>
<line x1="1113.5" y1="761.1000000000004" x2="1263.5" y2="761.1000000000004" stroke="#26282d" stroke-width="1"/>
<line x1="1120.6" y1="768.8000000000004" x2="1127.6" y2="768.8000000000004" stroke="#FADE2A" stroke-width="2.8" stroke-linecap="round"/>
<text x="1134.2" y="771.8000000000004" font-size="8.3" fill="#c8c8d4" font-weight="400" text-anchor="start" stroke="#c8c8d4" stroke-width="0.2" >[1000,2000)</text>
<text x="1217.8" y="771.8000000000004" font-size="8.3" fill="#c8c8d4" font-weight="400" text-anchor="end" stroke="#c8c8d4" stroke-width="0.2" >0</text>
<text x="1259" y="771.8000000000004" font-size="8.3" fill="#c8c8d4" font-weight="400" text-anchor="end" stroke="#c8c8d4" stroke-width="0.2" >0%</text>
<line x1="1113.5" y1="777.3000000000004" x2="1263.5" y2="777.3000000000004" stroke="#26282d" stroke-width="1"/>
<line x1="1120.6" y1="785.0000000000005" x2="1127.6" y2="785.0000000000005" stroke="#E02F44" stroke-width="2.8" stroke-linecap="round"/>
<text x="1134.2" y="788.0000000000005" font-size="8.3" fill="#c8c8d4" font-weight="400" text-anchor="start" stroke="#c8c8d4" stroke-width="0.2" >[12000,∞)</text>
<text x="1217.8" y="788.0000000000005" font-size="8.3" fill="#c8c8d4" font-weight="400" text-anchor="end" stroke="#c8c8d4" stroke-width="0.2" >0</text>
<text x="1259" y="788.0000000000005" font-size="8.3" fill="#c8c8d4" font-weight="400" text-anchor="end" stroke="#c8c8d4" stroke-width="0.2" >0%</text>
<line x1="1113.5" y1="793.5000000000005" x2="1263.5" y2="793.5000000000005" stroke="#26282d" stroke-width="1"/>
<line x1="1120.6" y1="801.2000000000005" x2="1127.6" y2="801.2000000000005" stroke="#56A64B" stroke-width="2.8" stroke-linecap="round"/>
<text x="1134.2" y="804.2000000000005" font-size="8.3" fill="#c8c8d4" font-weight="400" text-anchor="start" stroke="#c8c8d4" stroke-width="0.2" >[2000,∞)</text>
<text x="1217.8" y="804.2000000000005" font-size="8.3" fill="#c8c8d4" font-weight="400" text-anchor="end" stroke="#c8c8d4" stroke-width="0.2" >0</text>
<text x="1259" y="804.2000000000005" font-size="8.3" fill="#c8c8d4" font-weight="400" text-anchor="end" stroke="#c8c8d4" stroke-width="0.2" >0%</text>
<line x1="1113.5" y1="809.7000000000005" x2="1263.5" y2="809.7000000000005" stroke="#26282d" stroke-width="1"/>
<line x1="1120.6" y1="817.4000000000005" x2="1127.6" y2="817.4000000000005" stroke="#FFEE52" stroke-width="2.8" stroke-linecap="round"/>
<text x="1134.2" y="820.4000000000005" font-size="8.3" fill="#c8c8d4" font-weight="400" text-anchor="start" stroke="#c8c8d4" stroke-width="0.2" >[250,500)</text>
<text x="1217.8" y="820.4000000000005" font-size="8.3" fill="#c8c8d4" font-weight="400" text-anchor="end" stroke="#c8c8d4" stroke-width="0.2" >0</text>
<text x="1259" y="820.4000000000005" font-size="8.3" fill="#c8c8d4" font-weight="400" text-anchor="end" stroke="#c8c8d4" stroke-width="0.2" >0%</text>
<line x1="1113.5" y1="825.9000000000005" x2="1263.5" y2="825.9000000000005" stroke="#26282d" stroke-width="1"/>
<line x1="1120.6" y1="833.6000000000006" x2="1127.6" y2="833.6000000000006" stroke="#A01C1C" stroke-width="2.8" stroke-linecap="round"/>
<text x="1134.2" y="836.6000000000006" font-size="8.3" fill="#c8c8d4" font-weight="400" text-anchor="start" stroke="#c8c8d4" stroke-width="0.2" >[50,100)</text>
<text x="1217.8" y="836.6000000000006" font-size="8.3" fill="#c8c8d4" font-weight="400" text-anchor="end" stroke="#c8c8d4" stroke-width="0.2" >0</text>
<text x="1259" y="836.6000000000006" font-size="8.3" fill="#c8c8d4" font-weight="400" text-anchor="end" stroke="#c8c8d4" stroke-width="0.2" >0%</text>
<line x1="1113.5" y1="842.1000000000006" x2="1263.5" y2="842.1000000000006" stroke="#26282d" stroke-width="1"/>
<rect x="1276.5" y="572.5" width="628" height="272" rx="2" fill="#181b1f" stroke="#2a2c31" stroke-width="1"/>
<text x="1282" y="586" font-size="10.0" fill="#d5d5df" font-weight="400" text-anchor="start" stroke="#d5d5df" stroke-width="0.45" letter-spacing="0.12">Block Execution Layer Processing Time</text>
<g stroke="#a8a8b4" fill="none" stroke-linejoin="round"><path d="M1476 579.2 L1481 587.6 L1471 587.6 Z" stroke-width="0.95"/><line x1="1476" y1="582.3000000000001" x2="1476" y2="585.6" stroke-width="0.8"/></g>
<defs><radialGradient id="pg17" gradientUnits="userSpaceOnUse" cx="1517.8" cy="719.2" r="109.2"><stop offset="0" stop-color="#43883a"/><stop offset="1" stop-color="#55ac49"/></radialGradient><radialGradient id="pg18" gradientUnits="userSpaceOnUse" cx="1517.8" cy="719.2" r="109.2"><stop offset="0" stop-color="#917a07"/><stop offset="1" stop-color="#c1a30a"/></radialGradient><radialGradient id="pg19" gradientUnits="userSpaceOnUse" cx="1517.8" cy="719.2" r="109.2"><stop offset="0" stop-color="#105dd3"/><stop offset="1" stop-color="#2876ee"/></radialGradient><radialGradient id="pg20" gradientUnits="userSpaceOnUse" cx="1517.8" cy="719.2" r="109.2"><stop offset="0" stop-color="#c70e23"/><stop offset="1" stop-color="#ef1931"/></radialGradient><radialGradient id="pg21" gradientUnits="userSpaceOnUse" cx="1517.8" cy="719.2" r="109.2"><stop offset="0" stop-color="#a34900"/><stop offset="1" stop-color="#d66000"/></radialGradient></defs>
<path d="M1517.80,719.20 L1517.80,610.00 A109.2,109.2 0 1 1 1411.35,694.85 Z" fill="url(#pg17)" stroke="#181b1f" stroke-width="0.9" stroke-linejoin="round"/>
<path d="M1517.80,719.20 L1411.35,694.85 A109.2,109.2 0 0 1 1474.25,619.06 Z" fill="url(#pg18)" stroke="#181b1f" stroke-width="0.9" stroke-linejoin="round"/>
<path d="M1517.80,719.20 L1474.25,619.06 A109.2,109.2 0 0 1 1495.56,612.29 Z" fill="url(#pg19)" stroke="#181b1f" stroke-width="0.9" stroke-linejoin="round"/>
<path d="M1517.80,719.20 L1495.56,612.29 A109.2,109.2 0 0 1 1514.66,610.05 Z" fill="url(#pg20)" stroke="#181b1f" stroke-width="0.9" stroke-linejoin="round"/>
<path d="M1517.80,719.20 L1514.66,610.05 A109.2,109.2 0 0 1 1517.80,610.00 Z" fill="url(#pg21)" stroke="#181b1f" stroke-width="0.9" stroke-linejoin="round"/>
<text x="1557.5" y="781.5" font-size="10.8" fill="#d2d2dc" font-weight="400" text-anchor="middle" stroke="#d2d2dc" stroke-width="0.3" >[0,50)</text>
<text x="1557.5" y="794.5" font-size="10.8" fill="#d2d2dc" font-weight="400" text-anchor="middle" stroke="#d2d2dc" stroke-width="0.3" >690</text>
<text x="1468.8" y="691.0" font-size="10.8" fill="#d2d2dc" font-weight="400" text-anchor="middle" stroke="#d2d2dc" stroke-width="0.3" >[100,250)</text>
<text x="1468.8" y="704.0" font-size="10.8" fill="#d2d2dc" font-weight="400" text-anchor="middle" stroke="#d2d2dc" stroke-width="0.3" >130</text>
<text x="1852.8" y="609.9" font-size="8.3" fill="#6e9fff" font-weight="700" text-anchor="end" >Value</text>
<text x="1894" y="609.9" font-size="8.3" fill="#6e9fff" font-weight="700" text-anchor="end" >Percent</text>
<line x1="1754" y1="615.3" x2="1898.5" y2="615.3" stroke="#26282d" stroke-width="1"/>
<line x1="1759.8" y1="623" x2="1766.8" y2="623" stroke="#56A64B" stroke-width="2.8" stroke-linecap="round"/>
<text x="1773.8" y="626" font-size="8.3" fill="#c8c8d4" font-weight="400" text-anchor="start" stroke="#c8c8d4" stroke-width="0.2" >[0,50)</text>
<text x="1852.8" y="626" font-size="8.3" fill="#c8c8d4" font-weight="400" text-anchor="end" stroke="#c8c8d4" stroke-width="0.2" >690</text>
<text x="1894" y="626" font-size="8.3" fill="#c8c8d4" font-weight="400" text-anchor="end" stroke="#c8c8d4" stroke-width="0.2" >79%</text>
<line x1="1754" y1="631.5" x2="1898.5" y2="631.5" stroke="#26282d" stroke-width="1"/>
<line x1="1759.8" y1="639.2" x2="1766.8" y2="639.2" stroke="#F2CC0C" stroke-width="2.8" stroke-linecap="round"/>
<text x="1773.8" y="642.2" font-size="8.3" fill="#c8c8d4" font-weight="400" text-anchor="start" stroke="#c8c8d4" stroke-width="0.2" >[100,250)</text>
<text x="1852.8" y="642.2" font-size="8.3" fill="#c8c8d4" font-weight="400" text-anchor="end" stroke="#c8c8d4" stroke-width="0.2" >130</text>
<text x="1894" y="642.2" font-size="8.3" fill="#c8c8d4" font-weight="400" text-anchor="end" stroke="#c8c8d4" stroke-width="0.2" >15%</text>
<line x1="1754" y1="647.7" x2="1898.5" y2="647.7" stroke="#26282d" stroke-width="1"/>
<line x1="1759.8" y1="655.4000000000001" x2="1766.8" y2="655.4000000000001" stroke="#5794F2" stroke-width="2.8" stroke-linecap="round"/>
<text x="1773.8" y="658.4000000000001" font-size="8.3" fill="#c8c8d4" font-weight="400" text-anchor="start" stroke="#c8c8d4" stroke-width="0.2" >[50,100)</text>
<text x="1852.8" y="658.4000000000001" font-size="8.3" fill="#c8c8d4" font-weight="400" text-anchor="end" stroke="#c8c8d4" stroke-width="0.2" >27.1</text>
<text x="1894" y="658.4000000000001" font-size="8.3" fill="#c8c8d4" font-weight="400" text-anchor="end" stroke="#c8c8d4" stroke-width="0.2" >3%</text>
<line x1="1754" y1="663.9000000000001" x2="1898.5" y2="663.9000000000001" stroke="#26282d" stroke-width="1"/>
<line x1="1759.8" y1="671.6000000000001" x2="1766.8" y2="671.6000000000001" stroke="#F2495C" stroke-width="2.8" stroke-linecap="round"/>
<text x="1773.8" y="674.6000000000001" font-size="8.3" fill="#c8c8d4" font-weight="400" text-anchor="start" stroke="#c8c8d4" stroke-width="0.2" >[250,500)</text>
<text x="1852.8" y="674.6000000000001" font-size="8.3" fill="#c8c8d4" font-weight="400" text-anchor="end" stroke="#c8c8d4" stroke-width="0.2" >24.1</text>
<text x="1894" y="674.6000000000001" font-size="8.3" fill="#c8c8d4" font-weight="400" text-anchor="end" stroke="#c8c8d4" stroke-width="0.2" >3%</text>
<line x1="1754" y1="680.1000000000001" x2="1898.5" y2="680.1000000000001" stroke="#26282d" stroke-width="1"/>
<line x1="1759.8" y1="687.8000000000002" x2="1766.8" y2="687.8000000000002" stroke="#FF780A" stroke-width="2.8" stroke-linecap="round"/>
<text x="1773.8" y="690.8000000000002" font-size="8.3" fill="#c8c8d4" font-weight="400" text-anchor="start" stroke="#c8c8d4" stroke-width="0.2" >[2000,∞)</text>
<text x="1852.8" y="690.8000000000002" font-size="8.3" fill="#c8c8d4" font-weight="400" text-anchor="end" stroke="#c8c8d4" stroke-width="0.2" >3.01</text>
<text x="1894" y="690.8000000000002" font-size="8.3" fill="#c8c8d4" font-weight="400" text-anchor="end" stroke="#c8c8d4" stroke-width="0.2" >0%</text>
<line x1="1754" y1="696.3000000000002" x2="1898.5" y2="696.3000000000002" stroke="#26282d" stroke-width="1"/>
<line x1="1759.8" y1="704.0000000000002" x2="1766.8" y2="704.0000000000002" stroke="#FADE2A" stroke-width="2.8" stroke-linecap="round"/>
<text x="1773.8" y="707.0000000000002" font-size="8.3" fill="#c8c8d4" font-weight="400" text-anchor="start" stroke="#c8c8d4" stroke-width="0.2" >[1000,2000)</text>
<text x="1852.8" y="707.0000000000002" font-size="8.3" fill="#c8c8d4" font-weight="400" text-anchor="end" stroke="#c8c8d4" stroke-width="0.2" >0</text>
<text x="1894" y="707.0000000000002" font-size="8.3" fill="#c8c8d4" font-weight="400" text-anchor="end" stroke="#c8c8d4" stroke-width="0.2" >0%</text>
<line x1="1754" y1="712.5000000000002" x2="1898.5" y2="712.5000000000002" stroke="#26282d" stroke-width="1"/>
<line x1="1759.8" y1="720.2000000000003" x2="1766.8" y2="720.2000000000003" stroke="#C8F2C2" stroke-width="2.8" stroke-linecap="round"/>
<text x="1773.8" y="723.2000000000003" font-size="8.3" fill="#c8c8d4" font-weight="400" text-anchor="start" stroke="#c8c8d4" stroke-width="0.2" >[500,1000)</text>
<text x="1852.8" y="723.2000000000003" font-size="8.3" fill="#c8c8d4" font-weight="400" text-anchor="end" stroke="#c8c8d4" stroke-width="0.2" >0</text>
<text x="1894" y="723.2000000000003" font-size="8.3" fill="#c8c8d4" font-weight="400" text-anchor="end" stroke="#c8c8d4" stroke-width="0.2" >0%</text>
<line x1="1754" y1="728.7000000000003" x2="1898.5" y2="728.7000000000003" stroke="#26282d" stroke-width="1"/>
</svg></body></html>
